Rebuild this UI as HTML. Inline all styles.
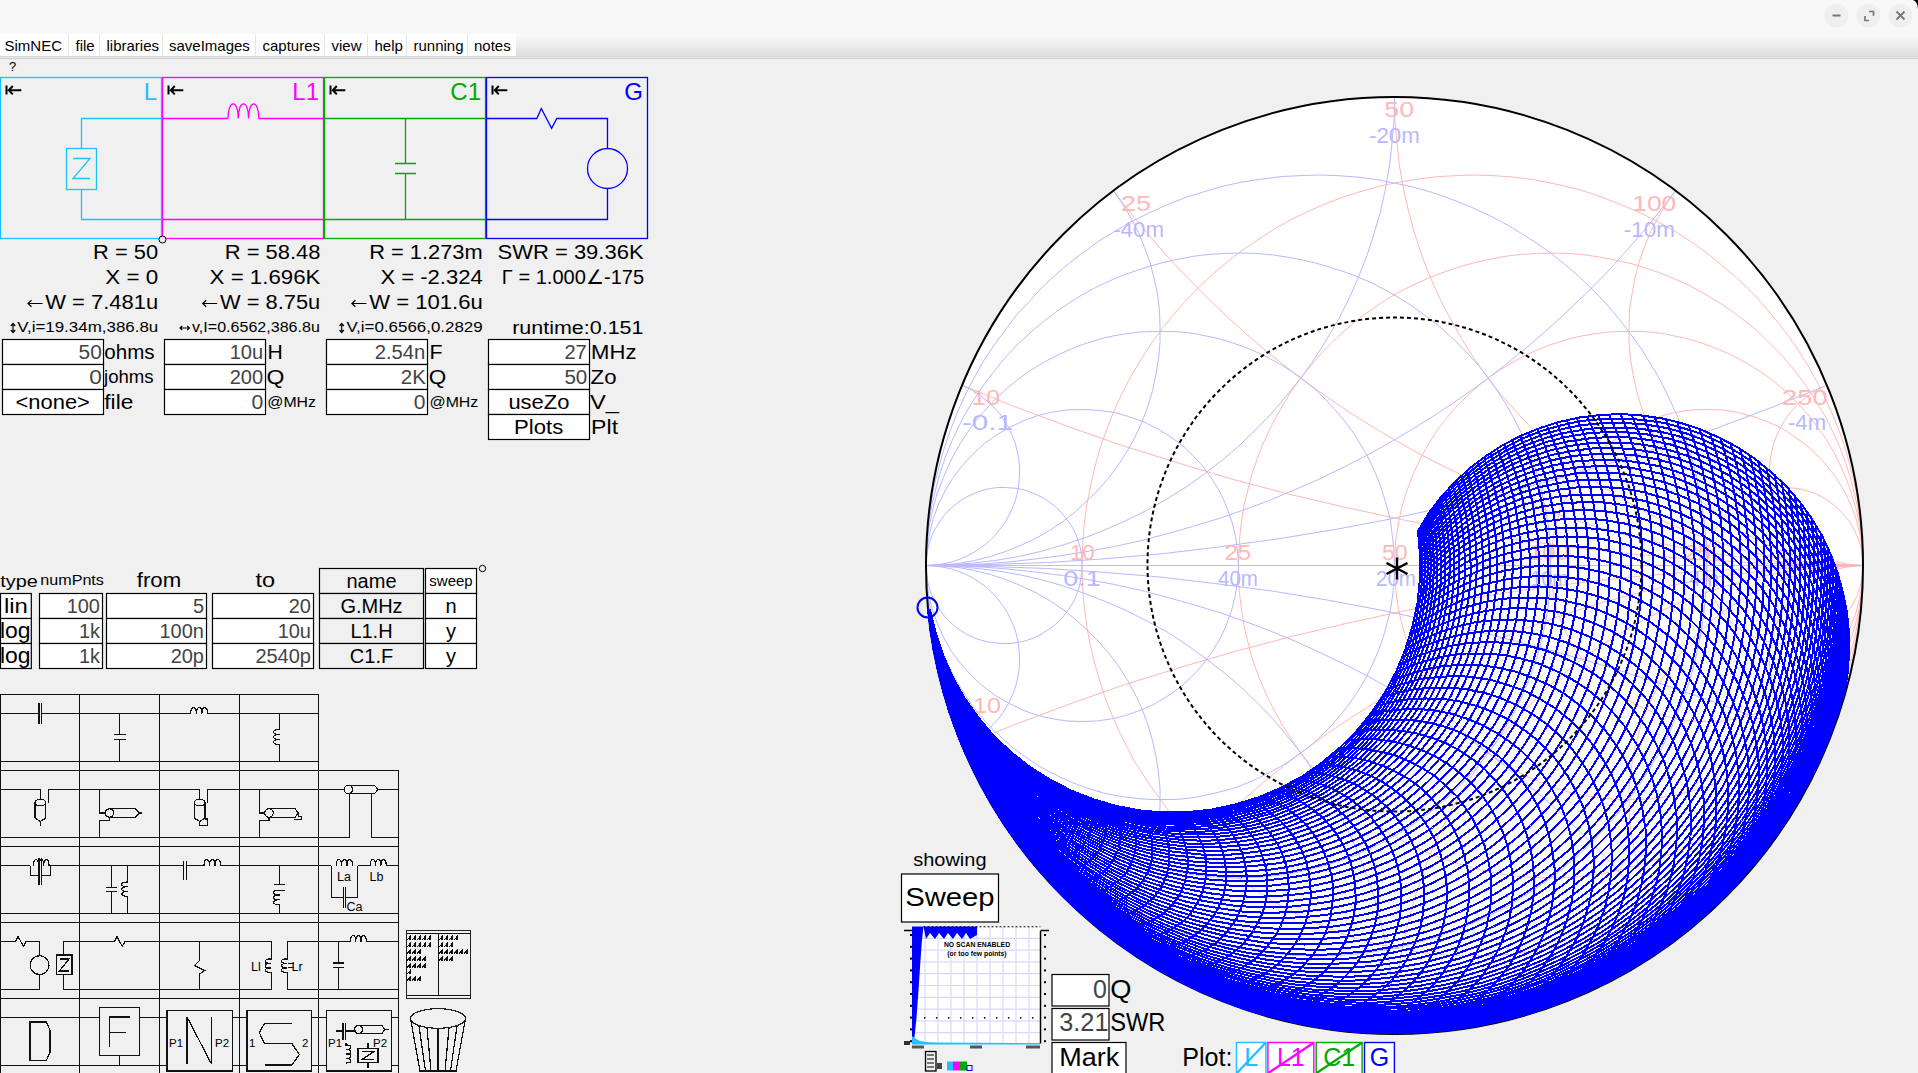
<!DOCTYPE html><html><head><meta charset="utf-8"><style>
html,body{margin:0;padding:0;background:#f0f0f0;width:1918px;height:1073px;overflow:hidden}
svg{position:absolute;left:0;top:0}
text{font-family:"Liberation Sans",sans-serif}
</style></head><body>
<svg width="1918" height="1073" viewBox="0 0 1918 1073">
<defs><linearGradient id="mg" x1="0" y1="0" x2="0" y2="1"><stop offset="0" stop-color="#fbfbfb"/><stop offset="1" stop-color="#dedede"/></linearGradient></defs>
<rect x="0" y="0" width="1918" height="34" fill="#f8f8f8" stroke="none" stroke-width="1"/>
<rect x="0" y="34" width="1918" height="22" fill="url(#mg)" stroke="none" stroke-width="1"/>
<rect x="0" y="56" width="1918" height="1" fill="#d8d8d8" stroke="none" stroke-width="1"/>
<rect x="0" y="57" width="1918" height="1" fill="#ececec" stroke="none" stroke-width="1"/>
<rect x="0" y="58" width="1918" height="1" fill="#cacaca" stroke="none" stroke-width="1"/>
<rect x="0" y="34" width="516" height="22" fill="#fefefe" stroke="none" stroke-width="1"/>
<line x1="68.5" y1="35" x2="68.5" y2="56" stroke="#e4e4e4" stroke-width="1"/>
<line x1="99.5" y1="35" x2="99.5" y2="56" stroke="#e4e4e4" stroke-width="1"/>
<line x1="162.5" y1="35" x2="162.5" y2="56" stroke="#e4e4e4" stroke-width="1"/>
<line x1="255.5" y1="35" x2="255.5" y2="56" stroke="#e4e4e4" stroke-width="1"/>
<line x1="324.5" y1="35" x2="324.5" y2="56" stroke="#e4e4e4" stroke-width="1"/>
<line x1="367.5" y1="35" x2="367.5" y2="56" stroke="#e4e4e4" stroke-width="1"/>
<line x1="406.5" y1="35" x2="406.5" y2="56" stroke="#e4e4e4" stroke-width="1"/>
<line x1="467.5" y1="35" x2="467.5" y2="56" stroke="#e4e4e4" stroke-width="1"/>
<text x="4.5" y="51" font-size="15" fill="#000">SimNEC</text>
<text x="75.5" y="51" font-size="15" fill="#000">file</text>
<text x="106.5" y="51" font-size="15" fill="#000">libraries</text>
<text x="169" y="51" font-size="15" fill="#000">saveImages</text>
<text x="262.5" y="51" font-size="15" fill="#000">captures</text>
<text x="331.5" y="51" font-size="15" fill="#000">view</text>
<text x="374.5" y="51" font-size="15" fill="#000">help</text>
<text x="413.5" y="51" font-size="15" fill="#000">running</text>
<text x="474" y="51" font-size="15" fill="#000">notes</text>
<circle cx="1836.5" cy="15.5" r="12" fill="#efefef"/>
<circle cx="1868.5" cy="15.5" r="12" fill="#efefef"/>
<circle cx="1900.5" cy="15.5" r="12" fill="#efefef"/>
<rect x="1832.5" y="14.5" width="8" height="2" fill="#777" stroke="none" stroke-width="1"/>
<path d="M1865 16v4.5h4M1869 11.5h4.5v4.2" fill="none" stroke="#777" stroke-width="1.7"/>
<path d="M1896.5 11.5l8 8M1904.5 11.5l-8 8" fill="none" stroke="#777" stroke-width="1.8"/>
<path d="M1913 0Q1918 2 1918 9.5V0Z" fill="#000"/>
<text x="9" y="71" font-size="13" fill="#000">?</text>
<text x="157" y="100" font-size="24" fill="#1ec0ff" text-anchor="end">L</text>
<text x="319" y="100" font-size="24" fill="#ff00ff" text-anchor="end">L1</text>
<text x="481" y="100" font-size="24" fill="#00aa00" text-anchor="end">C1</text>
<text x="643" y="100" font-size="24" fill="#0000ff" text-anchor="end">G</text>
<path d="M161 118.5H81.5V148.5M81.5 189.5V219.5H161" fill="none" stroke="#1ec0ff" stroke-width="1.3"/>
<rect x="66.5" y="148.5" width="30" height="41" fill="none" stroke="#1ec0ff" stroke-width="1.3"/>
<path d="M73 158.5h17l-17 20h17" fill="none" stroke="#1ec0ff" stroke-width="1.3"/>
<path d="M162 118.5H228M258.5 118.5H323M162 219.5H323" fill="none" stroke="#ff00ff" stroke-width="1.3"/>
<path d="M228 118.5C228 99 238.3 99 238.3 118.5C238.3 99 248.6 99 248.6 118.5C248.6 99 258.8 99 258.8 118.5" fill="none" stroke="#ff00ff" stroke-width="1.3"/>
<path d="M324 118.5H486M324 219.5H486M405.5 118.5V163.5M405.5 173.5V219.5M395 163.5h21M395 173.5h21" fill="none" stroke="#00aa00" stroke-width="1.3"/>
<path d="M486 118.5H536.8L541.3 108.4L551.6 128.4L556.8 118.5H607.5V148.5M607.5 188.5V219.5H486" fill="none" stroke="#0000ff" stroke-width="1.3"/>
<circle cx="607.5" cy="168.5" r="20" fill="none" stroke="#0000ff" stroke-width="1.3"/>
<rect x="0.5" y="77.5" width="161" height="161" fill="none" stroke="#1ec0ff" stroke-width="1.3"/>
<rect x="162.5" y="77.5" width="161" height="161" fill="none" stroke="#ff00ff" stroke-width="1.3"/>
<rect x="324.5" y="77.5" width="161" height="161" fill="none" stroke="#00aa00" stroke-width="1.3"/>
<rect x="486.5" y="77.5" width="161" height="161" fill="none" stroke="#0000ff" stroke-width="1.3"/>
<path d="M6.5 85.5V94.5M9 90.2H21.3 M12.8 86L8.8 90.2L12.8 94.4" fill="none" stroke="#000" stroke-width="2"/>
<path d="M168.5 85.5V94.5M171 90.2H183.3 M174.8 86L170.8 90.2L174.8 94.4" fill="none" stroke="#000" stroke-width="2"/>
<path d="M330.5 85.5V94.5M333 90.2H345.3 M336.8 86L332.8 90.2L336.8 94.4" fill="none" stroke="#000" stroke-width="2"/>
<path d="M492.5 85.5V94.5M495 90.2H507.3 M498.8 86L494.8 90.2L498.8 94.4" fill="none" stroke="#000" stroke-width="2"/>
<circle cx="162.5" cy="239.5" r="3.5" fill="#f0f0f0" stroke="#000" stroke-width="1"/>
<text x="93.1" y="258.6" font-size="20" fill="#000" textLength="65.1" lengthAdjust="spacingAndGlyphs">R = 50</text>
<text x="105.2" y="283.6" font-size="20" fill="#000" textLength="53" lengthAdjust="spacingAndGlyphs">X = 0</text>
<text x="45.3" y="308.6" font-size="20" fill="#000" textLength="112.9" lengthAdjust="spacingAndGlyphs">W = 7.481u</text>
<text x="17.2" y="332.3" font-size="14" fill="#000" textLength="141.1" lengthAdjust="spacingAndGlyphs">V,i=19.34m,386.8u</text>
<text x="224.8" y="258.6" font-size="20" fill="#000" textLength="95.7" lengthAdjust="spacingAndGlyphs">R = 58.48</text>
<text x="209.6" y="283.6" font-size="20" fill="#000" textLength="110.9" lengthAdjust="spacingAndGlyphs">X = 1.696K</text>
<text x="220" y="308.6" font-size="20" fill="#000" textLength="100.2" lengthAdjust="spacingAndGlyphs">W = 8.75u</text>
<text x="192" y="332.3" font-size="14" fill="#000" textLength="127.9" lengthAdjust="spacingAndGlyphs">v,I=0.6562,386.8u</text>
<text x="369.2" y="258.6" font-size="20" fill="#000" textLength="113.5" lengthAdjust="spacingAndGlyphs">R = 1.273m</text>
<text x="380.4" y="283.6" font-size="20" fill="#000" textLength="102.4" lengthAdjust="spacingAndGlyphs">X = -2.324</text>
<text x="369.2" y="308.6" font-size="20" fill="#000" textLength="113.5" lengthAdjust="spacingAndGlyphs">W = 101.6u</text>
<text x="346.4" y="332.3" font-size="14" fill="#000" textLength="136.3" lengthAdjust="spacingAndGlyphs">V,i=0.6566,0.2829</text>
<text x="497.5" y="258.6" font-size="20" fill="#000" textLength="146.1" lengthAdjust="spacingAndGlyphs">SWR = 39.36K</text>
<text x="501.8" y="283.6" font-size="20" fill="#000" textLength="142.3" lengthAdjust="spacingAndGlyphs">Γ = 1.000∠-175</text>
<text x="512.2" y="333.5" font-size="18" fill="#000" textLength="131.3" lengthAdjust="spacingAndGlyphs">runtime:0.151</text>
<path d="M28 303.5h14.5M31.5 300.3L28 303.5L31.5 306.7" fill="none" stroke="#000" stroke-width="1.2"/>
<path d="M202.7 303.5h14.5M206.2 300.3L202.7 303.5L206.2 306.7" fill="none" stroke="#000" stroke-width="1.2"/>
<path d="M351.9 303.5h14.5M355.4 300.3L351.9 303.5L355.4 306.7" fill="none" stroke="#000" stroke-width="1.2"/>
<path d="M13 323.5V332.5M10.8 326L13 323.5L15.2 326M10.8 330L13 332.5L15.2 330" fill="none" stroke="#000" stroke-width="1.2"/>
<path d="M341.7 323.5V332.5M339.5 326L341.7 323.5L343.9 326M339.5 330L341.7 332.5L343.9 330" fill="none" stroke="#000" stroke-width="1.2"/>
<path d="M180 328h9.5M182.3 326L180 328L182.3 330M187.2 326L189.5 328L187.2 330" fill="none" stroke="#000" stroke-width="1.1"/>
<rect x="2.5" y="339.5" width="101" height="25" fill="#fff" stroke="#000" stroke-width="1.2"/>
<rect x="2.5" y="364.5" width="101" height="25" fill="#fff" stroke="#000" stroke-width="1.2"/>
<rect x="2.5" y="389.5" width="101" height="25" fill="#fff" stroke="#000" stroke-width="1.2"/>
<rect x="164.5" y="339.5" width="101" height="25" fill="#fff" stroke="#000" stroke-width="1.2"/>
<rect x="164.5" y="364.5" width="101" height="25" fill="#fff" stroke="#000" stroke-width="1.2"/>
<rect x="164.5" y="389.5" width="101" height="25" fill="#fff" stroke="#000" stroke-width="1.2"/>
<rect x="326.5" y="339.5" width="101" height="25" fill="#fff" stroke="#000" stroke-width="1.2"/>
<rect x="326.5" y="364.5" width="101" height="25" fill="#fff" stroke="#000" stroke-width="1.2"/>
<rect x="326.5" y="389.5" width="101" height="25" fill="#fff" stroke="#000" stroke-width="1.2"/>
<rect x="488.5" y="339.5" width="101" height="25" fill="#fff" stroke="#000" stroke-width="1.2"/>
<rect x="488.5" y="364.5" width="101" height="25" fill="#fff" stroke="#000" stroke-width="1.2"/>
<rect x="488.5" y="389.5" width="101" height="25" fill="#fff" stroke="#000" stroke-width="1.2"/>
<rect x="488.5" y="414.5" width="101" height="25" fill="#fff" stroke="#000" stroke-width="1.2"/>
<text x="78.6" y="358.9" font-size="20" fill="#444" textLength="23.2" lengthAdjust="spacingAndGlyphs">50</text>
<text x="104.3" y="358.9" font-size="20" fill="#000" textLength="50.3" lengthAdjust="spacingAndGlyphs">ohms</text>
<text x="89.2" y="383.5" font-size="20" fill="#444" textLength="12.6" lengthAdjust="spacingAndGlyphs">0</text>
<text x="104" y="382.9" font-size="17.5" fill="#000" textLength="49.6" lengthAdjust="spacingAndGlyphs">johms</text>
<text x="15.5" y="408.6" font-size="21" fill="#000" textLength="74.4" lengthAdjust="spacingAndGlyphs">&lt;none&gt;</text>
<text x="104.3" y="408.6" font-size="20" fill="#000" textLength="29" lengthAdjust="spacingAndGlyphs">file</text>
<text x="229.7" y="358.9" font-size="20" fill="#444" textLength="33.5" lengthAdjust="spacingAndGlyphs">10u</text>
<text x="267.4" y="358.9" font-size="20" fill="#000" textLength="15.3" lengthAdjust="spacingAndGlyphs">H</text>
<text x="229.7" y="383.8" font-size="20" fill="#444" textLength="33.5" lengthAdjust="spacingAndGlyphs">200</text>
<text x="266.5" y="383.8" font-size="20" fill="#000" textLength="17.9" lengthAdjust="spacingAndGlyphs">Q</text>
<text x="251.4" y="408.6" font-size="20" fill="#444" textLength="11.8" lengthAdjust="spacingAndGlyphs">0</text>
<text x="267.3" y="406.8" font-size="15" fill="#000" textLength="48.7" lengthAdjust="spacingAndGlyphs">@MHz</text>
<text x="374.7" y="358.9" font-size="20" fill="#444" textLength="50.7" lengthAdjust="spacingAndGlyphs">2.54n</text>
<text x="429.6" y="358.9" font-size="20" fill="#000" textLength="13.1" lengthAdjust="spacingAndGlyphs">F</text>
<text x="400.8" y="383.8" font-size="20" fill="#444" textLength="25" lengthAdjust="spacingAndGlyphs">2K</text>
<text x="428.7" y="383.8" font-size="20" fill="#000" textLength="17.5" lengthAdjust="spacingAndGlyphs">Q</text>
<text x="413.7" y="408.6" font-size="20" fill="#444" textLength="11.7" lengthAdjust="spacingAndGlyphs">0</text>
<text x="429.5" y="406.8" font-size="15" fill="#000" textLength="48.8" lengthAdjust="spacingAndGlyphs">@MHz</text>
<text x="564.4" y="359.1" font-size="20" fill="#444" textLength="22.4" lengthAdjust="spacingAndGlyphs">27</text>
<text x="591.1" y="359.1" font-size="20" fill="#000" textLength="45.4" lengthAdjust="spacingAndGlyphs">MHz</text>
<text x="564.4" y="383.7" font-size="20" fill="#444" textLength="22.9" lengthAdjust="spacingAndGlyphs">50</text>
<text x="590.6" y="383.7" font-size="20" fill="#000" textLength="25.9" lengthAdjust="spacingAndGlyphs">Zo</text>
<text x="508.4" y="408.6" font-size="21" fill="#000" textLength="61" lengthAdjust="spacingAndGlyphs">useZo</text>
<text x="590" y="408.6" font-size="20" fill="#000" textLength="29.1" lengthAdjust="spacingAndGlyphs">V_</text>
<text x="514.1" y="434" font-size="21" fill="#000" textLength="49.1" lengthAdjust="spacingAndGlyphs">Plots</text>
<text x="591.1" y="434" font-size="20" fill="#000" textLength="27" lengthAdjust="spacingAndGlyphs">Plt</text>
<text x="0.3" y="586.5" font-size="17" fill="#000" textLength="37.5" lengthAdjust="spacingAndGlyphs">type</text>
<text x="40.3" y="584.5" font-size="15" fill="#000" textLength="63.6" lengthAdjust="spacingAndGlyphs">numPnts</text>
<text x="136.8" y="586.5" font-size="20" fill="#000" textLength="44.4" lengthAdjust="spacingAndGlyphs">from</text>
<text x="255.6" y="586.5" font-size="20" fill="#000" textLength="19.6" lengthAdjust="spacingAndGlyphs">to</text>
<rect x="319.5" y="568.5" width="104" height="25" fill="#f0f0f0" stroke="#000" stroke-width="1.2"/>
<rect x="425.5" y="568.5" width="51" height="25" fill="#fff" stroke="#000" stroke-width="1.2"/>
<text x="371.5" y="587.5" font-size="20" fill="#000" text-anchor="middle">name</text>
<text x="451" y="586" font-size="15" fill="#000" text-anchor="middle">sweep</text>
<circle cx="482.5" cy="568.5" r="3.2" fill="none" stroke="#000" stroke-width="1"/>
<rect x="0.5" y="593.5" width="30.8" height="25" fill="#fff" stroke="#000" stroke-width="1.2"/>
<rect x="39.5" y="593.5" width="63" height="25" fill="#fff" stroke="#000" stroke-width="1.2"/>
<rect x="106.5" y="593.5" width="100" height="25" fill="#fff" stroke="#000" stroke-width="1.2"/>
<rect x="212.5" y="593.5" width="101" height="25" fill="#fff" stroke="#000" stroke-width="1.2"/>
<rect x="319.5" y="593.5" width="104" height="25" fill="#f0f0f0" stroke="#000" stroke-width="1.2"/>
<rect x="425.5" y="593.5" width="51" height="25" fill="#fff" stroke="#000" stroke-width="1.2"/>
<rect x="0.5" y="618.5" width="30.8" height="25" fill="#fff" stroke="#000" stroke-width="1.2"/>
<rect x="39.5" y="618.5" width="63" height="25" fill="#fff" stroke="#000" stroke-width="1.2"/>
<rect x="106.5" y="618.5" width="100" height="25" fill="#fff" stroke="#000" stroke-width="1.2"/>
<rect x="212.5" y="618.5" width="101" height="25" fill="#fff" stroke="#000" stroke-width="1.2"/>
<rect x="319.5" y="618.5" width="104" height="25" fill="#f0f0f0" stroke="#000" stroke-width="1.2"/>
<rect x="425.5" y="618.5" width="51" height="25" fill="#fff" stroke="#000" stroke-width="1.2"/>
<rect x="0.5" y="643.5" width="30.8" height="25" fill="#fff" stroke="#000" stroke-width="1.2"/>
<rect x="39.5" y="643.5" width="63" height="25" fill="#fff" stroke="#000" stroke-width="1.2"/>
<rect x="106.5" y="643.5" width="100" height="25" fill="#fff" stroke="#000" stroke-width="1.2"/>
<rect x="212.5" y="643.5" width="101" height="25" fill="#fff" stroke="#000" stroke-width="1.2"/>
<rect x="319.5" y="643.5" width="104" height="25" fill="#f0f0f0" stroke="#000" stroke-width="1.2"/>
<rect x="425.5" y="643.5" width="51" height="25" fill="#fff" stroke="#000" stroke-width="1.2"/>
<text x="3.9" y="613" font-size="21" fill="#000" textLength="24" lengthAdjust="spacingAndGlyphs">lin</text>
<text x="100" y="613" font-size="20" fill="#444" text-anchor="end">100</text>
<text x="204" y="613" font-size="20" fill="#444" text-anchor="end">5</text>
<text x="311" y="613" font-size="20" fill="#444" text-anchor="end">20</text>
<text x="371.5" y="613" font-size="20" fill="#000" text-anchor="middle">G.MHz</text>
<text x="451" y="613" font-size="20" fill="#000" text-anchor="middle">n</text>
<text x="-0" y="638" font-size="22" fill="#000" textLength="30.6" lengthAdjust="spacingAndGlyphs">log</text>
<text x="100" y="638" font-size="20" fill="#444" text-anchor="end">1k</text>
<text x="204" y="638" font-size="20" fill="#444" text-anchor="end">100n</text>
<text x="311" y="638" font-size="20" fill="#444" text-anchor="end">10u</text>
<text x="371.5" y="638" font-size="20" fill="#000" text-anchor="middle">L1.H</text>
<text x="451" y="638" font-size="20" fill="#000" text-anchor="middle">y</text>
<text x="-0" y="663" font-size="22" fill="#000" textLength="30.6" lengthAdjust="spacingAndGlyphs">log</text>
<text x="100" y="663" font-size="20" fill="#444" text-anchor="end">1k</text>
<text x="204" y="663" font-size="20" fill="#444" text-anchor="end">20p</text>
<text x="311" y="663" font-size="20" fill="#444" text-anchor="end">2540p</text>
<text x="371.5" y="663" font-size="20" fill="#000" text-anchor="middle">C1.F</text>
<text x="451" y="663" font-size="20" fill="#000" text-anchor="middle">y</text>
<g shape-rendering="crispEdges"><path d="M0 694.5H318.5" fill="none" stroke="#111" stroke-width="1.2"/>
<path d="M0 761.5H318.5" fill="none" stroke="#111" stroke-width="1.2"/>
<path d="M0 770.5H398.5" fill="none" stroke="#111" stroke-width="1.2"/>
<path d="M0 837.5H349.3M371.6 837.5H398.5" fill="none" stroke="#111" stroke-width="1.2"/>
<path d="M0 846.5H398.5" fill="none" stroke="#111" stroke-width="1.2"/>
<path d="M0 913.5H398.5" fill="none" stroke="#111" stroke-width="1.2"/>
<path d="M0 922.5H398.5" fill="none" stroke="#111" stroke-width="1.2"/>
<path d="M0 989.5H39.6M63.6 989.5H271.1M287.4 989.5H398.5" fill="none" stroke="#111" stroke-width="1.2"/>
<path d="M0 998.5H398.5" fill="none" stroke="#111" stroke-width="1.2"/>
<path d="M0 1065.5H167M232.5 1065.5H247M311.3 1065.5H326.3M391.3 1065.5H398.5" fill="none" stroke="#111" stroke-width="1.2"/>
<path d="M0.5 694.5V1073" fill="none" stroke="#111" stroke-width="1.2"/>
<path d="M79.5 694.5V1073" fill="none" stroke="#111" stroke-width="1.2"/>
<path d="M159.5 694.5V1073" fill="none" stroke="#111" stroke-width="1.2"/>
<path d="M239.5 694.5V1073" fill="none" stroke="#111" stroke-width="1.2"/>
<path d="M318.5 694.5V1073" fill="none" stroke="#111" stroke-width="1.2"/>
<path d="M398.5 770.5V1073" fill="none" stroke="#111" stroke-width="1.2"/>
<path d="M0 713.5H39M41.5 713.5H190.8M207.5 713.5H318.5" fill="none" stroke="#111" stroke-width="1.2"/>
<path d="M39 703V724M41.5 703V724" fill="none" stroke="#111" stroke-width="1.2"/>
<path d="M119.5 713.5V734.5M113.5 734.5h12M113.5 739.5h12M119.5 739.5V761.5" fill="none" stroke="#111" stroke-width="1.2"/>
<path d="M190.8 713.5C190.8 705.7 196.4 705.7 196.4 713.5C196.4 705.7 201.9 705.7 201.9 713.5C201.9 705.7 207.5 705.7 207.5 713.5" fill="none" stroke="#111" stroke-width="1.2"/>
<path d="M279.5 713.5V729.5C271.7 729.5 271.7 734.5 279.5 734.5C271.7 734.5 271.7 739.5 279.5 739.5C271.7 739.5 271.7 744.5 279.5 744.5V761.5" fill="none" stroke="#111" stroke-width="1.2"/>
<path d="M0 789.5H40.3V799M48.4 802.6V789.5H159.5M99.5 789.5V813H105.5M99.5 837.5V820.3H109.5V817.5M239.5 789.5H318.5" fill="none" stroke="#111" stroke-width="1.2"/>
<path d="M35 802.6V818l5.3 3.5 5.6-3.5V802.6M40.3 821.5V826" fill="none" stroke="#111" stroke-width="1.2"/>
<ellipse cx="40.4" cy="802.6" rx="5.4" ry="3.3" fill="none" stroke="#111" stroke-width="1.2"/>
<circle cx="109.5" cy="813" r="4.2" fill="none" stroke="#111" stroke-width="1.2"/>
<path d="M109.5 808.8H135.5l3.5 4.2-3.5 4.2H109.5M139 813h3" fill="none" stroke="#111" stroke-width="1.2"/>
<path d="M159.5 789.5H199.5V799M207.6 802.6V789.5H239.5" fill="none" stroke="#111" stroke-width="1.2"/>
<ellipse cx="199.6" cy="802.6" rx="5.4" ry="3.3" fill="none" stroke="#111" stroke-width="1.2"/>
<path d="M194.2 802.6V818l5.4 3.5 5.4-3.5V802.6M199.6 821.5V825.5h7.7v-6.5h-2.3" fill="none" stroke="#111" stroke-width="1.2"/>
<path d="M259.3 789.5V813H264.8M259.3 837.5V820.3H269V817.5" fill="none" stroke="#111" stroke-width="1.2"/>
<circle cx="269" cy="813" r="4.2" fill="none" stroke="#111" stroke-width="1.2"/>
<path d="M269 808.8H295l3.5 4.2-3.5 4.2H269M298.5 813V816.5h2.8V819.5h-7.5" fill="none" stroke="#111" stroke-width="1.2"/>
<path d="M318.5 789.5H344M379 789.5H398.5M318.5 837.5H349.3V793.5M371.6 793.5V837.5H398.5" fill="none" stroke="#111" stroke-width="1.2"/>
<circle cx="348.3" cy="789.5" r="4.2" fill="none" stroke="#111" stroke-width="1.2"/>
<path d="M348.3 785.3H374.5l3.5 4.2-3.5 4.2H348.3" fill="none" stroke="#111" stroke-width="1.2"/>
<path d="M0 865.5H30.2M50.4 865.5H183.5M186.2 865.5H204M220.6 865.5H331.2M357.7 865.5H370.2M386.2 865.5H398.5" fill="none" stroke="#111" stroke-width="1.2"/>
<path d="M30.2 865.5V875.5H39M41.5 875.5H50.4V865.5M39 858V885M41.5 858V885" fill="none" stroke="#111" stroke-width="1.2"/>
<path d="M33.4 865.5C33.4 857.7 38.6 857.7 38.6 865.5C38.6 857.7 43.8 857.7 43.8 865.5C43.8 857.7 49 857.7 49 865.5" fill="none" stroke="#111" stroke-width="1.2"/>
<path d="M111.6 865.5V887.5M111.6 891.7V913.5M106 887.5H117M106 891.7H117M127.6 865.5V882C119.8 882 119.8 886.8 127.6 886.8C119.8 886.8 119.8 891.5 127.6 891.5C119.8 891.5 119.8 896.3 127.6 896.3V913.5" fill="none" stroke="#111" stroke-width="1.2"/>
<path d="M183.5 861V880M186.2 861V880" fill="none" stroke="#111" stroke-width="1.2"/>
<path d="M204 865.5C204 857.7 209.5 857.7 209.5 865.5C209.5 857.7 215.1 857.7 215.1 865.5C215.1 857.7 220.6 857.7 220.6 865.5" fill="none" stroke="#111" stroke-width="1.2"/>
<path d="M279.5 865.5V884.6M273.8 884.6H285.1M273.8 890.2H285.1M279.5 890.2C271.7 890.2 271.7 895 279.5 895C271.7 895 271.7 899.8 279.5 899.8C271.7 899.8 271.7 904.6 279.5 904.6V913.5" fill="none" stroke="#111" stroke-width="1.2"/>
<path d="M336.2 865.5C336.2 857.7 341.6 857.7 341.6 865.5C341.6 857.7 347.1 857.7 347.1 865.5C347.1 857.7 352.5 857.7 352.5 865.5M331.2 865.5V897.4H343.1M345.2 897.4H357.7V865.5M343.1 887V908M345.2 887V908" fill="none" stroke="#111" stroke-width="1.2"/>
<path d="M370.2 865.5C370.2 857.7 375.5 857.7 375.5 865.5C375.5 857.7 380.9 857.7 380.9 865.5C380.9 857.7 386.2 857.7 386.2 865.5" fill="none" stroke="#111" stroke-width="1.2"/>
<text x="337" y="880.5" font-size="12.5" fill="#000">La</text>
<text x="369.5" y="880.5" font-size="12.5" fill="#000">Lb</text>
<text x="346.5" y="911" font-size="12.5" fill="#000">Ca</text>
<path d="M0 941.5H15.6L18.1 936.6L23.4 946.4L26.1 941.5H39.6V955.7M39.6 974.5V989.5H0" fill="none" stroke="#111" stroke-width="1.2"/>
<circle cx="39.6" cy="965.1" r="9.4" fill="none" stroke="#111" stroke-width="1.2"/>
<path d="M79.5 941.5H63.6V955.1M63.6 974.5V989.5H79.5" fill="none" stroke="#111" stroke-width="1.2"/>
<rect x="56.3" y="955.1" width="15.7" height="19.4" fill="none" stroke="#111" stroke-width="1.2"/>
<path d="M59.5 959h9.5l-9.5 12h9.5" fill="none" stroke="#111" stroke-width="1.2"/>
<path d="M79.5 941.5H114.3L117 936.6L122.3 946.4L125 941.5H239.5M79.5 989.5H271.1" fill="none" stroke="#111" stroke-width="1.2"/>
<path d="M199.6 941.5V960.5L194.5 965.5L204.5 970.5L199.6 974V989.5" fill="none" stroke="#111" stroke-width="1.2"/>
<path d="M239.5 941.5H271.1V958.9C263.3 958.9 263.3 963.4 271.1 963.4C263.3 963.4 263.3 967.9 271.1 967.9C263.3 967.9 263.3 972.4 271.1 972.4V989.5M287.4 941.5V958.9C279.6 958.9 279.6 963.4 287.4 963.4C279.6 963.4 279.6 967.9 287.4 967.9C279.6 967.9 279.6 972.4 287.4 972.4V989.5H318.5M287.4 941.5H318.5" fill="none" stroke="#111" stroke-width="1.2"/>
<path d="M265 963.5h6M265 967.5h6M288 963.5h6M288 967.5h6" fill="none" stroke="#111" stroke-width="1.2"/>
<text x="251" y="970.5" font-size="12.5" fill="#000">Ll</text>
<text x="291.5" y="970.5" font-size="12.5" fill="#000">Lr</text>
<path d="M318.5 941.5H350.4M366.4 941.5H398.5M338.3 941.5V963M332.6 963H344.1M332.6 967.2H344.1M338.3 967.2V989.5M318.5 989.5H398.5" fill="none" stroke="#111" stroke-width="1.2"/>
<path d="M350.4 941.5C350.4 933.7 355.7 933.7 355.7 941.5C355.7 933.7 361.1 933.7 361.1 941.5C361.1 933.7 366.4 933.7 366.4 941.5" fill="none" stroke="#111" stroke-width="1.2"/>
<path d="M0 1017.5H79.5" fill="none" stroke="#111" stroke-width="1.2"/>
<path d="M30 1022H46.3L50 1030V1052.5L46.3 1060.5H30Z" fill="none" stroke="#111" stroke-width="1.2"/>
<path d="M79.5 1017.5H99.3M139.5 1017.5H167M232.5 1017.5H247M311.3 1017.5H326.3M391.3 1017.5H398.5" fill="none" stroke="#111" stroke-width="1.2"/>
<rect x="99.3" y="1007.5" width="40.2" height="48" fill="none" stroke="#111" stroke-width="1.2"/>
<path d="M129.5 1017H109.3V1047M109.3 1032.5H126.3M119.3 1055.5V1065" fill="none" stroke="#111" stroke-width="1.2"/>
<rect x="167" y="1010.5" width="65.5" height="60.5" fill="none" stroke="#111" stroke-width="1.2"/>
<path d="M187 1064V1017L211.5 1064V1017" fill="none" stroke="#111" stroke-width="1.2"/>
<text x="169" y="1047" font-size="11.5" fill="#000">P1</text>
<text x="215" y="1047" font-size="11.5" fill="#000">P2</text>
<rect x="247" y="1010.5" width="64.3" height="60.5" fill="none" stroke="#111" stroke-width="1.2"/>
<path d="M292 1023.3H264.5L259.3 1032.5L264.5 1043.8H292L299.3 1054.5L292 1065H264.5" fill="none" stroke="#111" stroke-width="1.2"/>
<text x="249" y="1047" font-size="11.5" fill="#000">1</text>
<text x="302" y="1047" font-size="11.5" fill="#000">2</text>
<rect x="326.3" y="1010.5" width="65" height="60.5" fill="none" stroke="#111" stroke-width="1.2"/>
<path d="M336 1031H343M343 1023V1040M345.5 1023V1040M345.5 1031H356M385 1029.5H388.5" fill="none" stroke="#111" stroke-width="1.2"/>
<circle cx="358.5" cy="1029.5" r="4" fill="none" stroke="#111" stroke-width="1.2"/>
<path d="M358.5 1025.5H382l3 4-3 4H358.5" fill="none" stroke="#111" stroke-width="1.2"/>
<path d="M346 1043V1045C352.5 1045 352.5 1049.5 346 1049.5C352.5 1049.5 352.5 1054 346 1054C352.5 1054 352.5 1058.5 346 1058.5C352.5 1058.5 352.5 1063 346 1063" fill="none" stroke="#111" stroke-width="1.2"/>
<rect x="358" y="1048.5" width="20" height="14" fill="none" stroke="#111" stroke-width="1.2"/>
<path d="M362 1051.5h12l-12 8h12M368 1043V1048.5M368 1062.5V1068" fill="none" stroke="#111" stroke-width="1.2"/>
<text x="328" y="1047" font-size="11.5" fill="#000">P1</text>
<text x="373" y="1047" font-size="11.5" fill="#000">P2</text>
<rect x="406.5" y="930.5" width="64" height="68" fill="none" stroke="#222" stroke-width="1.3"/>
<path d="M406.5 933.8H470.5M406.5 995.3H470.5M438.4 933.8V995.3" fill="none" stroke="#111" stroke-width="1.3"/>
<path d="M407 940L410 936.7V940M412 940L415 936.7V940M417 940L420 936.7V940M422 940L425 936.7V940M427 940L430 936.7V940" fill="none" stroke="#111" stroke-width="1.1"/>
<path d="M407 947L410 943.7V947M412 947L415 943.7V947M417 947L420 943.7V947M422 947L425 943.7V947M427 947L430 943.7V947" fill="none" stroke="#111" stroke-width="1.1"/>
<path d="M407 953.5L410 950.2V953.5M412 953.5L415 950.2V953.5M417 953.5L420 950.2V953.5" fill="none" stroke="#111" stroke-width="1.1"/>
<path d="M407 960.5L410 957.2V960.5M412 960.5L415 957.2V960.5M417 960.5L420 957.2V960.5M422 960.5L425 957.2V960.5" fill="none" stroke="#111" stroke-width="1.1"/>
<path d="M407 967.5L410 964.2V967.5M412 967.5L415 964.2V967.5M417 967.5L420 964.2V967.5M422 967.5L425 964.2V967.5" fill="none" stroke="#111" stroke-width="1.1"/>
<path d="M407 974.1L410 970.8V974.1" fill="none" stroke="#111" stroke-width="1.1"/>
<path d="M407 980.5L410 977.2V980.5M412 980.5L415 977.2V980.5M417 980.5L420 977.2V980.5" fill="none" stroke="#111" stroke-width="1.1"/>
<path d="M439 940L442 936.7V940M444 940L447 936.7V940M449 940L452 936.7V940M454 940L457 936.7V940" fill="none" stroke="#111" stroke-width="1.1"/>
<path d="M439 947L442 943.7V947M444 947L447 943.7V947M449 947L452 943.7V947" fill="none" stroke="#111" stroke-width="1.1"/>
<path d="M439 953.5L442 950.2V953.5M444 953.5L447 950.2V953.5M449 953.5L452 950.2V953.5M454 953.5L457 950.2V953.5M459 953.5L462 950.2V953.5M464 953.5L467 950.2V953.5" fill="none" stroke="#111" stroke-width="1.1"/>
<path d="M439 960.5L442 957.2V960.5M444 960.5L447 957.2V960.5M449 960.5L452 957.2V960.5" fill="none" stroke="#111" stroke-width="1.1"/>
<ellipse cx="438" cy="1018.5" rx="27.5" ry="9.8" fill="none" stroke="#222" stroke-width="1.2"/>
<path d="M410.5 1018.5L420 1071H456L465.5 1018.5M419 1026L425.5 1071M427 1028L431 1071M438 1028.5V1071M449 1028L445 1071M457 1026L450.5 1071" fill="none" stroke="#111" stroke-width="1.2"/></g>
<circle cx="1394.5" cy="565.5" r="468.5" fill="#fff"/>
<path d="M1863 565.5l-0.5-20.5l-1-16.5l-2.5-20l-3.5-20.5l-5-20l-4-15.5l-6.5-19.5l-6-15l-8.5-19l-7-14.5l-10-18l-11-17.5l-9.5-13.5l-12.5-16l-13-15.5l-14-15l-15-14l-12.5-10.5l-13-10.5l-16.5-12l-17-11l-14.5-8l-18-9.5l-19-8l-19-7.5l-15.5-5.5l-15.5-4.5l-20-4.5l-20.5-4l-20-2.5l-20.5-1.5l-16.5-0.5l-16 0.5l-20.5 1l-20.5 2.5l-16 2.5l-20 4l-20 5.5l-19.5 6l-15.5 6l-18.5 8l-15 7l-18 10l-17 11l-17 11.5l-13 10l-15.5 13l-15 14l-14.5 15l-10.5 12l-10.5 13l-12 16.5l-11 17l-10.5 18l-7.5 14.5l-8.5 18.5l-6 15.5l-7 19l-5.5 20l-4.5 19.5l-4 20.5l-2.5 20l-1.5 20.5l-0.5 16.5l0.5 20.5l1.5 20.5l2.5 20l3 16.5l3.5 16l5.5 19.5l6 19.5l6 15.5l8 18.5l7.5 15l9.5 18l11 17l9.5 13.5l12 16.5l13.5 15.5l14 15l11.5 11.5l15.5 13.5l16 12.5l17 12l17 11l18 10l14.5 7l19 8.5l15 6l19.5 6.5l20 5.5l16 3.5l20 3.5l16 2l20.5 2l20.5 0.5l16.5-0.5l20.5-1l20-2.5l20.5-3.5l16-3.5l19.5-5.5l15.5-5l19.5-7l18.5-8.5l18.5-9l18-10l13.5-9l17-11.5l16-13l12.5-10.5l15-14l14-15l13-15.5l10.5-13l11.5-16.5l11-17.5l10-18l9-18l6.5-15.5l6-15l6.5-19.5l5-19.5l4.5-20l3-16.5l2.5-20l1-16.5l0.5-20.5M1863 565.5l-0.5-13l-1-16.5l-1.5-13l-2.5-16l-3-13l-4-16l-5-15.5l-5.5-15l-7-15l-7-15l-8.5-14l-7-11l-7.5-11l-10-13l-10.5-12.5l-11.5-11.5l-11.5-11.5l-10-8.5l-13-10l-13.5-9.5l-14-8.5l-11-6.5l-15-7.5l-12-5l-12-5l-15.5-5l-12.5-4l-16-3.5l-13-2.5l-16-2.5l-16.5-1.5l-16.5-0.5l-16.5 0.5l-16 1l-13 1.5l-16.5 3l-16 3.5l-12.5 3.5l-12.5 4l-15.5 5.5l-15 6.5l-14.5 7l-14.5 8l-11 7l-10.5 7.5l-13.5 10l-12.5 10.5l-11.5 11l-9.5 9.5l-10.5 12.5l-10.5 12.5l-9.5 13.5l-8.5 14l-8 14l-6 12l-7 15l-5.5 15l-4.5 12.5l-4 16l-4 16l-2 12.5l-2 16.5l-1 13l-0.5 16.5l0 13l1 16.5l2 16l2.5 16l3 13l4 16l4 12.5l6 15l6.5 15l7.5 15l8 14l7 11l9 13.5l8 10.5l10.5 12.5l11.5 12l12 11.5l12 10.5l10.5 8l13.5 9.5l13.5 9l14.5 8l11.5 5.5l15 7l12.5 4.5l15.5 5l15.5 4.5l13 3l16 3l16.5 2l16 1l13.5 0.5l16-0.5l13.5-1l16-2l16-2.5l16-4l16-4.5l12.5-4l15-6l15-6.5l12-6l14-8l11-7l13.5-9.5l13-10l12.5-11l9-9l11.5-11.5l10.5-12.5l10-13l7.5-11l7-11l8.5-14l7-15l7-15l5.5-15l5-15.5l3.5-13l3.5-16l2.5-16l1.5-13l1-16.5l0.5-13M1863 565.5l-0.5-12.5l-1-12l-1.5-12l-1.5-10l-3-12l-3.5-11.5l-3-9.5l-4.5-11.5l-5-11l-5.5-11l-5-8.5l-6.5-10.5l-6-8l-7.5-9.5l-6.5-7.5l-8.5-9l-8.5-8.5l-7.5-6l-10-8l-8-5.5l-10-6.5l-11-6l-8.5-4.5l-11.5-5l-9-3.5l-11.5-4l-12-3.5l-9.5-2l-12-2.5l-10-1.5l-12-1l-12.5 0l-9.5 0l-12.5 0.5l-12 1.5l-12.5 2l-12 2.5l-9.5 3l-11.5 3.5l-11.5 4.5l-9 4l-11 5.5l-10.5 6l-8.5 5l-10 7l-10 7.5l-9 8l-7.5 7l-8.5 8.5l-8 9.5l-7.5 9.5l-5.5 8l-6.5 10.5l-6 10.5l-4.5 9l-5 11l-3.5 9.5l-4 11.5l-3.5 12l-2.5 12l-2 12l-1.5 9.5l-0.5 12.5l-0.5 10l0 9.5l1 12.5l1 9.5l2 12.5l2 9.5l3 12l3.5 11.5l4.5 11.5l4 9l5 11l6 11l6.5 10.5l7 10l6 7.5l8 9.5l8.5 9l7 7l9.5 8l9.5 7.5l10 7l10.5 6.5l10.5 6l11 5.5l9 4l11.5 4.5l9.5 3l11.5 3.5l12 2.5l10 1.5l12 1.5l12.5 1l9.5 0l12.5 0l9.5-0.5l12.5-1.5l9.5-2l12-2.5l12-3l9.5-3l11.5-4.5l11-5l11-5.5l11-6l8-5l8-6l10-7l9.5-8l8.5-8.5l8.5-9l8-9.5l7.5-9.5l5.5-8l5.5-8.5l6-10.5l4.5-9l5-11l4.5-11.5l3-9.5l3.5-11.5l3-12l1.5-10l1.5-12l1-12l0.5-12.5M1863 565.5l-0.5-14.5l-2.5-16.5l-4-16l-5-13.5l-6.5-13.5l-7.5-12.5l-9-12l-11-12l-11-10l-13-9.5l-12.5-8l-13.5-6l-14-5l-15.5-4l-14.5-2.5l-15-0.5l-16.5 0.5l-14.5 2l-14 3.5l-14 5l-13.5 6l-14 8.5l-13.5 9.5l-11 10l-10 10.5l-9 12l-8.5 14l-6.5 13l-5.5 15.5l-3.5 14.5l-2.5 16l-1 14.5l1 16.5l2 14.5l3.5 14.5l5.5 15.5l6.5 13l7.5 13l9.5 13l10 11l12 11l12 9l14 8l13.5 6.5l13.5 5l14.5 3.5l14.5 2.5l16.5 0.5l16.5-0.5l14.5-2.5l15.5-4l14-5l13.5-6l12.5-8l12-8.5l12-11l10-11l9-11.5l7.5-12.5l7.5-15l5-13.5l4-16l2.5-16.5l0.5-14.5M1863 565.5l-0.5-7.5l-1-7l-1.5-7.5l-3-7.5l-3-6.5l-3.5-6.5l-5-6.5l-5-5.5l-6-5.5l-6-4.5l-7-4.5l-6.5-3l-7-2.5l-7-2l-7.5-1l-8-0.5l-8 0.5l-7.5 1l-7 1.5l-7 2.5l-7.5 3.5l-6.5 3.5l-6.5 5l-5.5 5l-5 5.5l-5 6.5l-3.5 6l-3.5 7.5l-2.5 7l-2 7l-1.5 8l0 7.5l0 8.5l1.5 7l1.5 7l3 8l3.5 7.5l3.5 6l4.5 6l5 5.5l5.5 5l6 4.5l7 4l6.5 3.5l7 2.5l8 2l7 1l8 0.5l7.5 0l8-1.5l7.5-1.5l7-2.5l7-3.5l6.5-4l6-4l6-5.5l5-5.5l4.5-6l4-6.5l3.5-7l2.5-7l2-8l1-7.5l0.5-8M963 385.5l50 20.5l55 20.5l55.5 19.5l56.5 17.5l51.5 15.5l57 15l57.5 13.5l57.5 12.5l58 11l58 9l58.5 8l53.5 6l58.5 5l59 3.5l54 2l59 1M1862 565.5l-59 1l-54 2l-59 3.5l-58.5 5l-58.5 6.5l-58.5 8l-58 9.5l-53 10l-57.5 12.5l-52.5 12.5l-57 15l-56.5 16.5l-56.5 17.5l-51 18l-55 20.5l-54.5 22M1114 191.5l16.5 21.5l17.5 21l18 21l19 20l19 19.5l18.5 18l20.5 18.5l20.5 18l21.5 17l22 16.5l20.5 15l23 15.5l23 14.5l24 14l24 13.5l22.5 11.5l23 11l25 11.5l25.5 10.5l25.5 9.5l26 9l26.5 8.5l26.5 7.5l26.5 6.5l27 6l27 5l25 4l27.5 3.5l27 3l27.5 2l27.5 1l25.5 0.5M1862.5 565.5l-27.5 0.5l-27.5 1l-27.5 2l-25 3l-25.5 3l-27 4.5l-27 5l-27 6l-26.5 6.5l-26.5 7.5l-26.5 8.5l-26 9l-25.5 9.5l-25.5 10.5l-23 10.5l-25 12l-24.5 12.5l-24 13.5l-23.5 14l-21.5 13.5l-23 15.5l-22 16l-22 16.5l-21.5 17.5l-20.5 18l-20.5 18.5l-19.5 19l-18 18.5l-18.5 20l-17 19.5l-17.5 21l-16.5 21.5M1394.5 97.5l0.5 23.5l2 22.5l2.5 22.5l4 23l5 22l6 22l7 21.5l8.5 22l9.5 21.5l10.5 20l11.5 20.5l12 19l13.5 19.5l14 17.5l15 17l16 17l16.5 16l18 15l18.5 14.5l18.5 13l20 12.5l19.5 11l20 10.5l21 9l21 8l21.5 7l22.5 6.5l22 5l23.5 4l22 2.5l23.5 2l23 0.5M1863 565.5l-23 0.5l-23.5 2l-23 2.5l-22.5 4l-22 5l-21.5 6l-21.5 7l-22 8.5l-21 9l-21 11l-19.5 11l-20 12.5l-18.5 13l-17.5 14l-17.5 14.5l-17 16.5l-16 17l-15 17l-14 17.5l-13 18.5l-12 19l-11.5 20.5l-11 21l-9 20.5l-8 21.5l-7.5 22l-6.5 23l-5 22l-4 22l-2.5 23.5l-2 22.5l-0.5 23.5M1675.5 190.5l-9 13.5l-8.5 13.5l-7.5 14.5l-6 15l-5.5 15.5l-4 15.5l-3 16l-2.5 16l-0.5 16l0 16.5l1.5 16l2.5 16l3.5 15.5l4.5 16l5.5 15l7 14.5l7.5 14.5l8.5 13.5l10 13l10.5 13l11.5 11.5l12 10.5l13 10l13.5 9l14 8l14.5 7l15 6l15.5 5l15.5 4l16 2.5l16 2l16.5 0.5M1863 565.5l-16.5 0.5l-16 2l-16 2.5l-15.5 4l-15.5 5l-15.5 6l-14.5 7l-14 8.5l-13.5 9l-13 9.5l-12 11l-11 11.5l-10.5 12.5l-10 13l-8.5 13.5l-7.5 14.5l-7 14.5l-5.5 15l-4.5 16l-3.5 15.5l-2.5 16l-1.5 16l0 16.5l0.5 16l2.5 16l3 16l4 15.5l5.5 15.5l6 15l7.5 14.5l8.5 13.5l9 13.5M1827 385l-7 3.5l-7 4l-6.5 4.5l-6.5 5.5l-5.5 5.5l-5.5 6l-4.5 6.5l-4 7l-3.5 7.5l-3 7.5l-2 7.5l-1.5 8l-1 8l0 8l0.5 8l1 8l2 8l2.5 7.5l3.5 7.5l3.5 7l4.5 7l5 6l5.5 6l6 5.5l6.5 4.5l7 4.5l7 3.5l7.5 3l8 2.5l7.5 1.5l8 1l8 0.5M1863 565.5l-8 0.5l-8 1l-7.5 1.5l-8 2.5l-7.5 3l-7 3.5l-7 4.5l-6.5 4.5l-6 5.5l-5.5 6l-5 6l-4.5 7l-3.5 7l-3.5 7.5l-2.5 7.5l-2 8l-1 8l-0.5 8l0 8l1 8l1.5 8l2 7.5l3 7.5l3.5 7.5l4 7l4.5 6.5l5.5 6l5.5 5.5l6.5 5.5l6.5 4.5l7 4l7 3.5" fill="none" stroke="#ffb8b8" stroke-width="1"/>
<path d="M1707 565.5l-0.5-20.5l-2-20.5l-2-16l-3.5-20.5l-3.5-16l-5.5-19.5l-5-15.5l-7-19l-8.5-19l-9-18.5l-10.5-17.5l-8.5-14l-12-16.5l-10-13l-10.5-12.5l-14-15l-14.5-14l-12.5-11l-16-13l-13.5-9.5l-17-11l-14-8.5l-18-9.5l-18.5-8.5l-19-7.5l-19.5-7l-20-5.5l-16-3.5l-20-4l-20-2.5l-20.5-1.5l-16.5-0.5l-16.5 0.5l-20.5 1l-20 2.5l-20.5 3l-20 4.5l-15.5 4.5l-19.5 6l-19.5 7.5l-18.5 8.5l-18.5 9l-17.5 10.5l-14 8.5l-16.5 12l-13 10l-12.5 10.5l-15 14l-11 12l-14 15l-10 13l-12 16.5l-11.5 17l-10 18l-7.5 14.5l-8.5 18.5l-7.5 19l-6.5 19.5l-4.5 16l-5 19.5l-3.5 20.5l-2 16l-2 20.5l-0.5 20.5l0.5 16.5l1 20.5l2 16l3 20.5l4.5 20l4 15.5l6 19.5l7.5 19.5l8 18.5l7 15l10 18l11 17l9 13.5l12.5 16.5l13 15.5l14.5 15l14.5 14l12.5 11l16 12.5l16.5 12l17.5 11l18 10l14.5 7l18.5 8.5l15.5 6l19.5 6.5l19.5 5.5l16 3.5l20.5 3.5l16 2l20.5 2l20.5 0.5l16.5-0.5l20-1l20.5-2.5l20-3.5l20-4.5l16-4.5l15.5-5l19-7l19-8.5l18.5-9l14-8l17.5-11l16.5-11.5l13-10l16-13.5l14.5-14l11.5-12l13.5-15.5l12.5-16l9.5-13l11-17.5l8.5-14l9.5-18.5l8-18.5l7.5-19l5.5-15.5l5.5-19.5l4.5-20l3-16.5l2.5-20l2-20.5l0.5-20.5M1550.5 565.5l-0.5-16.5l-0.5-13l-1.5-13l-3-16l-3.5-16l-4-16l-5.5-15.5l-4.5-12l-6.5-15l-7.5-15l-8-14l-7-11l-7.5-11l-10-13l-11-12.5l-11-11.5l-9.5-9l-12.5-11l-13-10l-13.5-9.5l-13.5-8.5l-11.5-6.5l-14.5-7.5l-12-5l-12.5-5l-15.5-5l-15.5-4.5l-13-3l-13-2.5l-16-2.5l-16.5-1.5l-16-0.5l-16.5 0.5l-16.5 1l-13 1.5l-16 3l-16 3.5l-12.5 3.5l-12.5 4l-15.5 5.5l-12 5l-15 7l-14.5 8l-13.5 8.5l-11 7.5l-13 10l-12.5 10.5l-12 11l-11.5 12l-10.5 12.5l-10 13l-7.5 10.5l-9 14l-6.5 11l-6 12l-7 15l-6 15l-5 15.5l-3.5 12.5l-4 16l-3 16l-2 16.5l-1 13l-0.5 16.5l0.5 16l1 16.5l1.5 13l3 16l3.5 16l3.5 13l4 12.5l5.5 15l5.5 12l7 15l8 14.5l8.5 13.5l9.5 13.5l8 10.5l10.5 12.5l11 12l12 11.5l12.5 10.5l10 8l13.5 9.5l14 9l14 8l12 5.5l15 7l12 4.5l15.5 5l16 4.5l12.5 3l16.5 3l16 2l16.5 1l13 0.5l16.5-0.5l13-1l13-1.5l16-2.5l16-3.5l16-4.5l12.5-4l15.5-5.5l15-6.5l14.5-7.5l14-8l11-7l11-7.5l13-10l12.5-10.5l12-11.5l11-11.5l11-12.5l10-13l7.5-11l8.5-14l6.5-11l7.5-15l6.5-15l4.5-12l5.5-15.5l4-16l3-12.5l3-16.5l2-16l0.5-13l0.5-16.5M1394.5 565.5l-0.5-12.5l-1-12l-1.5-12l-1.5-10l-3-12l-3.5-11.5l-3-9.5l-4.5-11.5l-5-11l-5.5-11l-6.5-10.5l-5-8.5l-7.5-10l-6-7.5l-6.5-7.5l-8.5-9l-8.5-8.5l-7.5-6l-10-8l-8-5.5l-10-6.5l-11-6l-8.5-4.5l-11.5-5l-9-3.5l-11.5-4l-12-3.5l-9.5-2l-12-2.5l-10-1.5l-12-1l-12.5 0l-9.5 0l-12.5 0.5l-12 1.5l-12.5 2l-12 2.5l-9.5 3l-11.5 3.5l-11.5 4.5l-11 5l-9 4.5l-8.5 4.5l-10.5 6.5l-8 5.5l-10 7.5l-9.5 8l-9 8.5l-6.5 7l-8.5 9l-6 7.5l-7 10l-7 10.5l-5 8.5l-5.5 11l-5 11l-4.5 11.5l-3.5 9l-3.5 12l-2.5 12l-2 9.5l-1.5 12.5l-1 12l-0.5 12.5l0.5 12l0.5 10l1.5 12l2 12l2.5 12l2.5 9.5l4 12l4.5 11.5l4 9l5.5 11l6 10.5l6.5 10.5l5.5 8l7.5 9.5l6.5 7.5l8.5 9l9 8.5l9 8l10 7.5l8 5.5l8 5.5l11 6l11 5.5l11 5l11.5 4.5l9.5 3l11.5 3.5l12 2.5l10 1.5l12 1.5l12.5 1l9.5 0l12.5 0l9.5-0.5l12.5-1.5l9.5-2l12-2.5l12-3l9.5-3l11.5-4.5l11-5l11-5.5l11-6l8-5l8-6l10-7l9.5-8l8.5-8.5l7-7l8-9.5l7.5-9.5l7-10l5.5-8.5l6-10.5l5.5-11l5-11.5l4.5-11.5l3.5-11.5l2.5-9.5l3-12l1.5-9.5l1.5-12.5l1-12l0-10M1238.5 565.5l-1-14.5l-2-15l-4-15.5l-5-14l-6-13.5l-7.5-12.5l-9.5-13.5l-10-11l-10.5-10l-13.5-10l-12.5-7.5l-13-6.5l-15.5-5.5l-14-4l-15-2l-16-1l-16.5 0.5l-14.5 2l-14.5 3.5l-14 5l-14.5 7l-13 7.5l-12 8.5l-12 11l-11 12l-9 12l-7.5 12.5l-7 14.5l-5 14l-3.5 14.5l-2.5 14.5l-1 16l0.5 15l2 14.5l3.5 14.5l5.5 15.5l6 13l8 14.5l9 12l11 12l10.5 10l13.5 10l14 8l13 6.5l14 5l14.5 3.5l16 2.5l15 0.5l14.5-0.5l14.5-2l14.5-3.5l15.5-5.5l13.5-6l14-8.5l12-8.5l12-11l10-11l8.5-11.5l8.5-14l6.5-13.5l5.5-15.5l3.5-14l2.5-14.5l1-16.5M1082 565.5l0-7.5l-1-7l-2-7.5l-2.5-7.5l-3-6.5l-4-6.5l-5-6.5l-4.5-5.5l-5.5-5l-6.5-5l-6.5-4l-6.5-3l-7-3l-8-2l-7-1l-8.5-0.5l-7 0l-7.5 1l-8 2l-7 2.5l-7.5 3.5l-6 3.5l-6 4.5l-6.5 5.5l-5 5.5l-4.5 6.5l-4.5 7l-3 6.5l-2.5 7l-2 8l-1 7l-0.5 7.5l0.5 7.5l1 8l1.5 7l2.5 7l3.5 7.5l4 6.5l4 6l5.5 6l5.5 5l6 4.5l6 4l7.5 3.5l7 2.5l8 2l8 1l7.5 0.5l7 0l8.5-1.5l7-1.5l7-2.5l7.5-3.5l6-4l6-4l6-5.5l5-5.5l4.5-6l4.5-7l3-6.5l3-8l1.5-7l1-7.5l0.5-8M929.5 565.5l59-1l59-2l54-3.5l58.5-5l58.5-7l58.5-8l58-9.5l53-10l57.5-12.5l57.5-13.5l52-14l56.5-16.5l56-18l51-17.5l55.5-21l50-20M1824 744.5l-50-20l-55.5-21l-55.5-19l-56-18l-52-15l-57-15l-52.5-12.5l-57.5-12.5l-58-11l-58-9.5l-53.5-7l-58.5-7l-54-4.5l-58.5-4l-59-2l-59-1M927.5 565.5l27.5-0.5l27.5-1l25.5-2l27-3l27.5-3.5l27-4.5l25-4.5l27-6l26.5-7l24.5-7l26.5-8l26-9l25.5-9.5l23.5-10l25.5-11l24.5-12l24.5-12.5l24-13.5l23.5-14l21.5-13.5l23-15.5l22.5-16l21.5-16.5l21.5-17.5l21-18l20-18.5l18.5-17.5l19.5-19.5l18.5-20.5l18-20.5l16-19.5l17-22M1674.5 939l-17-22l-16-19.5l-18-20.5l-18.5-20.5l-19.5-19.5l-19.5-19l-19-17l-21-18l-21.5-17.5l-21.5-16.5l-21-15l-22.5-15.5l-23.5-14.5l-23.5-14l-24-13.5l-22.5-11.5l-25-12l-25-11.5l-25.5-10.5l-24-9l-25.5-9l-26.5-8l-26.5-7.5l-26.5-7l-27-6l-27-5l-25-4l-27.5-3.5l-27-3l-25.5-2l-27.5-1l-27.5-0.5M926.5 565.5l24-0.5l22.5-2l22-2.5l23.5-4l22-5l22.5-6.5l21.5-7l21-8.5l20.5-9l20.5-10l20.5-11.5l19-12l18.5-13l18.5-14.5l18-15.5l16-15.5l16-16.5l15-18l14-17.5l13-18.5l12.5-20l11.5-19.5l10.5-21l9-20.5l8.5-21.5l7-22l6.5-22l5-23l4-23l2.5-22.5l2-22.5l0.5-23.5M1394.5 1034l-0.5-23.5l-2-22.5l-2.5-23.5l-4-22l-5-22l-6-22l-7.5-22.5l-8-21l-9-20.5l-10.5-21l-11.5-19.5l-12.5-20l-13.5-19.5l-14-17.5l-14.5-17.5l-15.5-16l-16.5-16l-17.5-15l-19-14.5l-18-13l-20-13l-20-11l-21-10.5l-20.5-9l-22-8.5l-21.5-7.5l-21.5-6l-22-5l-23.5-4l-22-2.5l-22.5-2l-24-0.5M926 565.5l16-0.5l16-1.5l16.5-3l16-4l15-5l15-6l15-7l14-8l13.5-9l12.5-10l12-11l11.5-11.5l10.5-12l9.5-13l9-14l7.5-14l7-15l5.5-15l4.5-15.5l3.5-16l2.5-16l1.5-16l0-16l-0.5-16.5l-2-16l-3.5-16l-4-15.5l-5.5-15l-6-15l-7.5-14.5l-8.5-14l-9-13M1113.5 940l9-13l8.5-14l7.5-14.5l6-15l5.5-15l4-15.5l3.5-16l2-16l0.5-16.5l0-16l-1.5-16l-2.5-16l-3.5-16l-4.5-15.5l-5.5-15l-7-15l-7.5-14l-9-14l-9.5-13l-10.5-12l-11.5-11.5l-12-11l-12.5-10l-13.5-9l-14-8l-15-7l-15-6l-15-5l-16-4l-16.5-3l-16-1.5l-16-0.5M926 565.5l8-0.5l8-1l8-1.5l7.5-2.5l7.5-3l7-3.5l7-4.5l6.5-4.5l6-5.5l5.5-6l5-6.5l4.5-6.5l3.5-7l3.5-7.5l2.5-7.5l2-8l1-8l0.5-8l0-8l-1-8l-1.5-8l-2-7.5l-3-7.5l-3.5-7.5l-4-6.5l-4.5-7l-5.5-6l-5.5-5.5l-6-5l-7-5l-7-4l-7-3M962 745.5l7-3l7-4l7-5l6-5l5.5-5.5l5.5-6l4.5-7l4-6.5l3.5-7.5l3-7.5l2-7.5l1.5-8l1-8l0-8l-0.5-8l-1-8l-2-8l-2.5-7.5l-3.5-7.5l-3.5-7l-4.5-6.5l-5-6.5l-5.5-6l-6-5.5l-6.5-4.5l-7-4.5l-7-3.5l-7.5-3l-7.5-2.5l-8-1.5l-8-1l-8-0.5" fill="none" stroke="#b8b8ff" stroke-width="1"/>
<line x1="926" y1="565.5" x2="1863" y2="565.5" stroke="#c4c4c4" stroke-width="1.2"/>
<text x="1384.3" y="116.5" font-size="22" fill="#ffb8b8" textLength="29.8" lengthAdjust="spacingAndGlyphs" font-family="Liberation Mono">50</text>
<text x="1369" y="142.6" font-size="22" fill="#b8b8ff" textLength="50.9" lengthAdjust="spacingAndGlyphs" font-family="Liberation Mono">-20m</text>
<text x="1121.1" y="210.6" font-size="22" fill="#ffb8b8" textLength="29.9" lengthAdjust="spacingAndGlyphs" font-family="Liberation Mono">25</text>
<text x="1113.2" y="236.6" font-size="22" fill="#b8b8ff" textLength="50.8" lengthAdjust="spacingAndGlyphs" font-family="Liberation Mono">-40m</text>
<text x="1632.3" y="210.6" font-size="22" fill="#ffb8b8" textLength="43.8" lengthAdjust="spacingAndGlyphs" font-family="Liberation Mono">100</text>
<text x="1623.8" y="236.9" font-size="22" fill="#b8b8ff" textLength="51.1" lengthAdjust="spacingAndGlyphs" font-family="Liberation Mono">-10m</text>
<text x="971.7" y="404.7" font-size="22" fill="#ffb8b8" textLength="28.4" lengthAdjust="spacingAndGlyphs" font-family="Liberation Mono">10</text>
<text x="962" y="430.1" font-size="22" fill="#b8b8ff" textLength="50.8" lengthAdjust="spacingAndGlyphs" font-family="Liberation Mono">-0.1</text>
<text x="1782" y="404.7" font-size="22" fill="#ffb8b8" textLength="45.6" lengthAdjust="spacingAndGlyphs" font-family="Liberation Mono">250</text>
<text x="1788" y="430.4" font-size="22" fill="#b8b8ff" textLength="38.1" lengthAdjust="spacingAndGlyphs" font-family="Liberation Mono">-4m</text>
<text x="972.9" y="713.3" font-size="22" fill="#ffb8b8" textLength="28.1" lengthAdjust="spacingAndGlyphs" font-family="Liberation Mono">10</text>
<text x="1069.9" y="559.6" font-size="22" fill="#ffb8b8" textLength="24.7" lengthAdjust="spacingAndGlyphs" font-family="Liberation Mono">10</text>
<text x="1063.2" y="585.6" font-size="22" fill="#b8b8ff" textLength="37.5" lengthAdjust="spacingAndGlyphs" font-family="Liberation Mono">0.1</text>
<text x="1224.4" y="559.6" font-size="22" fill="#ffb8b8" textLength="26.7" lengthAdjust="spacingAndGlyphs" font-family="Liberation Mono">25</text>
<text x="1218" y="585.6" font-size="22" fill="#b8b8ff" textLength="40" lengthAdjust="spacingAndGlyphs" font-family="Liberation Mono">40m</text>
<text x="1381.9" y="559.6" font-size="22" fill="#ffb8b8" textLength="25.7" lengthAdjust="spacingAndGlyphs" font-family="Liberation Mono">50</text>
<text x="1376" y="585.6" font-size="22" fill="#b8b8ff" textLength="40" lengthAdjust="spacingAndGlyphs" font-family="Liberation Mono">20m</text>
<text x="1529" y="559.6" font-size="22" fill="#ffb8b8" textLength="40" lengthAdjust="spacingAndGlyphs" font-family="Liberation Mono">100</text>
<text x="1531" y="585.6" font-size="22" fill="#b8b8ff" textLength="37" lengthAdjust="spacingAndGlyphs" font-family="Liberation Mono">10m</text>
<text x="1684" y="559.6" font-size="22" fill="#ffb8b8" textLength="41" lengthAdjust="spacingAndGlyphs" font-family="Liberation Mono">250</text>
<text x="1689" y="585.6" font-size="22" fill="#b8b8ff" textLength="30" lengthAdjust="spacingAndGlyphs" font-family="Liberation Mono">4m</text>
<text x="1121" y="926" font-size="22" fill="#ffb8b8" textLength="30" lengthAdjust="spacingAndGlyphs" font-family="Liberation Mono">25</text>
<text x="1632" y="926" font-size="22" fill="#ffb8b8" textLength="44" lengthAdjust="spacingAndGlyphs" font-family="Liberation Mono">100</text>
<text x="1782" y="731" font-size="22" fill="#ffb8b8" textLength="45.6" lengthAdjust="spacingAndGlyphs" font-family="Liberation Mono">250</text>
<text x="1384" y="1020" font-size="22" fill="#ffb8b8" textLength="30" lengthAdjust="spacingAndGlyphs" font-family="Liberation Mono">50</text>
<circle cx="1394.5" cy="565.5" r="468.5" fill="none" stroke="#000" stroke-width="2"/>
<path d="M1418 531l2 24l0 23.5l-2.5 24.5l-5 23l-7 23l-9 22l-11.5 21.5l-13 19.5l-15 18.5l-16.5 16.5l-19 16l-19.5 13.5l-21.5 11.5l-21 9l-24.5 7.5l-23 5l-23 2.5l-25.5 0.5l-23-2l-24-4.5l-22.5-6.5l-23-9l-21-11l-20-12.5l-18.5-14.5l-18-17l-15-18l-14-19.5l-11.5-20.5l-10-22.5l-7.5-22.5l-5.5-23M1419.5 527.5l2.5 24.5l0.5 24l-2.5 24.5l-4.5 23.5l-7 23l-8.5 22l-11.5 22l-13.5 20.5l-15 18.5l-16.5 17l-19 16l-19.5 13.5l-22 12l-21 9l-24.5 8l-23.5 5l-23.5 2.5l-25.5 0.5l-23-2l-24.5-4.5l-23-6.5l-23-9l-21-11l-20-13l-19-14.5l-18-17l-15-18l-14-20l-11.5-20.5l-10-22.5l-8-22.5l-5-23M1421.5 524l3 24l0.5 24l-2 25l-4 23.5l-6.5 23.5l-8.5 22l-11.5 22.5l-13 20.5l-14.5 19l-16.5 17.5l-19 16.5l-20 14l-21.5 12.5l-21.5 9.5l-24.5 8l-23.5 5l-24 3l-26 1l-23-2l-25-4l-23-6.5l-23.5-9l-21.5-11l-20.5-13l-19-15l-18-17l-16-18l-14-20l-12-21l-10-22.5l-7.5-23l-5.5-23.5M1424 520.5l3 25l1 24.5l-2 25l-4 24l-6.5 24l-8.5 23l-11.5 23l-13 20.5l-15.5 19.5l-16.5 17.5l-19.5 17l-20 14l-22.5 12.5l-21.5 9.5l-23 7.5l-23.5 5.5l-24 3l-24 1l-23.5-1.5l-25-4.5l-24-6l-24-9.5l-21.5-10.5l-21-13l-19-15l-18.5-17.5l-16-18l-14.5-20.5l-12-21l-10-22.5l-8-24l-5.5-23.5M1426.5 517l3.5 24.5l1 24.5l-1.5 25.5l-3.5 24l-6.5 24.5l-8 23l-11.5 23l-13 21.5l-15 19.5l-16.5 18l-19.5 17.5l-20 14.5l-22 13l-22 10l-23 8l-24 5.5l-24.5 3.5l-24 1l-24-1.5l-25.5-4l-24-6l-24.5-9.5l-22-10.5l-21-13l-20-15l-18.5-18l-16-18l-15-20.5l-12-21.5l-10.5-23l-8-23.5l-5.5-24.5M1429 513.5l3.5 25l1.5 25l-1 26l-3.5 25l-6.5 24.5l-8.5 23.5l-10.5 22.5l-12.5 21.5l-15.5 20.5l-16.5 18.5l-19.5 17.5l-20.5 15l-22.5 13l-22 10l-23.5 8l-24.5 6l-24.5 3.5l-24.5 1l-24.5-1.5l-25.5-4l-24.5-6.5l-24.5-9l-22-11l-21.5-13l-20-15.5l-18.5-17.5l-16.5-18.5l-14.5-20.5l-12-21.5l-10.5-23l-8-24l-5.5-24.5M1431.5 509.5l4 25l2 25l-0.5 26l-3.5 25l-6 25.5l-8 23.5l-10 23l-13 22l-15 20.5l-16.5 19l-19.5 18l-20.5 15.5l-22.5 13.5l-22.5 10.5l-23.5 8.5l-24.5 6l-25 4l-25 1l-24.5-1l-26.5-4l-24.5-6l-25-9.5l-22.5-11l-22-13l-20-15.5l-19-18l-16.5-18.5l-15-21l-13-22.5l-10-23l-8-24l-5.5-24.5M1434.5 505.5l4.5 25.5l2 25.5l0 26l-3 25.5l-6 26l-8 24l-10 23l-13 22.5l-15 21.5l-17 19l-18 17l-20.5 16l-22.5 14l-22.5 11l-24 9l-24.5 6.5l-25.5 4l-25.5 1.5l-25-1l-26.5-3.5l-25-6.5l-13-4l-12.5-5l-23-11l-22-13.5l-20.5-15.5l-19.5-18l-17-19l-15-21l-13-22.5l-10.5-23.5l-8-24.5l-5.5-25M1437.5 501.5l5 25.5l2.5 26l0 26.5l-2.5 26l-5.5 26.5l-8 24.5l-10.5 23.5l-12.5 23l-15.5 22l-17 19.5l-18 17.5l-21 16l-12.5 8.5l-10.5 6l-23 11.5l-24 9l-25.5 6.5l-25.5 4l-26 1.5l-25-1l-12.5-1.5l-14.5-2.5l-25.5-6l-23.5-8.5l-23.5-11l-22.5-13.5l-21-16l-10-9l-9.5-9l-17-19.5l-15.5-21l-13-23l-10.5-23.5l-8.5-25l-5.5-25.5M1441 497.5l5.5 25.5l3 26.5l0 26l-2.5 26.5l-5 26.5l-7.5 25l-10 24l-12.5 23.5l-15 22l-17 20.5l-18.5 18l-21 16.5l-12.5 8.5l-10.5 6.5l-23.5 11.5l-24.5 9.5l-25.5 7l-26 4.5l-26 1.5l-26-0.5l-12.5-1.5l-14.5-2.5l-26-6l-24-8.5l-24-11.5l-22.5-13.5l-21.5-15.5l-10.5-9.5l-9.5-9.5l-17.5-19l-15.5-21.5l-13.5-23.5l-10.5-24l-8.5-25l-6-26M1444.5 493.5l6 26l3 26.5l1 26.5l-2.5 27l-2 13l-2.5 14l-7.5 25.5l-10 24.5l-13 24.5l-7.5 12l-7.5 10.5l-17.5 20.5l-18.5 18.5l-21 17l-21.5 14l-23.5 12l-25 10l-25.5 7.5l-26.5 4.5l-27 2l-26-0.5l-13-1.5l-15-2.5l-26-6l-24.5-8.5l-24.5-11.5l-23-13.5l-21.5-16l-11-9.5l-9.5-9.5l-17.5-19.5l-16-21.5l-13.5-23.5l-11-24.5l-8.5-25.5l-6-26.5M1448.5 489l6 26.5l2.5 13.5l1.5 13.5l1 27l-2 27.5l-2 13.5l-2.5 14l-3.5 13.5l-4 13l-10 25l-6 12l-7 12.5l-7.5 12.5l-8 11l-8 10.5l-9.5 10.5l-18.5 19l-11.5 9.5l-10.5 8l-21.5 14l-24 12.5l-25.5 10l-13 4l-13 3.5l-13.5 2.5l-13.5 2l-27 2l-26.5-1l-13-1l-15.5-2.5l-12.5-2.5l-14-4l-25-9l-24-11l-23.5-14.5l-22-16l-10.5-9.5l-10-9.5l-17.5-20l-15.5-22l-13.5-23.5l-11-24.5l-8.5-25.5l-6-26.5M1452.5 484.5l3.5 13l3.5 14l2.5 14l1.5 13.5l1 14l0.5 13.5l-0.5 14l-1.5 14l-4 27l-3.5 13.5l-3.5 13l-10 25.5l-6 12.5l-6.5 13l-8 12.5l-7.5 11l-8.5 11l-9 11l-19 19.5l-11.5 10l-10.5 8l-22 14.5l-24 13l-12.5 5.5l-13 5l-13.5 4l-13.5 3.5l-13.5 3l-14 2l-13.5 1.5l-14 0.5l-27-0.5l-13-1.5l-15.5-2l-12.5-3l-14.5-3.5l-25.5-9l-24.5-11.5l-11.5-6.5l-12.5-8l-11.5-8l-10.5-8l-19.5-18.5l-10.5-10.5l-8.5-10.5l-16-22.5l-7-11l-7-12.5l-11-25l-8.5-26l-3-13.5l-3-13.5M1457 480l4 13.5l3.5 14l2.5 13l2 14l1 14.5l0.5 13.5l0 14l-1 14.5l-4 27l-3.5 14l-3.5 13.5l-4.5 13.5l-5 12.5l-6 12.5l-6.5 13l-8 13.5l-7.5 11l-8 11.5l-9.5 11l-19 20l-11.5 10.5l-10.5 8l-22.5 15.5l-12 6.5l-12.5 6.5l-12.5 5.5l-13.5 5.5l-13.5 4l-13.5 4l-14 3l-14 2l-14 1.5l-14 1l-27.5-0.5l-26.5-3.5l-13-2.5l-15-3.5l-25.5-8.5l-13.5-6l-12.5-6l-11.5-6l-12.5-8l-12-8.5l-11-8l-20-18.5l-10.5-11l-9-10.5l-9-11.5l-7.5-11l-7-12l-7-12.5l-6-13l-5.5-13l-5-13l-4-14l-3.5-13.5l-2.5-13.5M1461.5 475.5l4.5 13.5l3.5 14.5l3 13.5l2 14l1.5 14.5l0.5 14l0 14.5l-1 14.5l-1.5 14l-2 14l-3.5 14.5l-3.5 13.5l-4.5 14l-5 12.5l-6 13.5l-7 13l-14 23.5l-8.5 11.5l-9 11.5l-10 11l-9.5 9l-11.5 11l-10.5 8.5l-23 15.5l-12 7l-12.5 7l-13 5.5l-13.5 5.5l-13.5 4.5l-14 4l-14.5 3l-14 2.5l-14.5 1.5l-14 1l-14 0l-14-0.5l-27.5-3l-13-2.5l-15-4l-26.5-8.5l-13-6l-13-6l-11.5-6.5l-13-8l-12-8l-11-9l-20.5-18.5l-10.5-11l-9.5-10.5l-9-12l-7.5-11l-7-12l-7.5-13l-6-12.5l-5.5-13.5l-4.5-13l-4.5-14l-3-14l-3-14M1466.5 471l4.5 14l4 14.5l3 13.5l2.5 14.5l1.5 15l1 14.5l0 13.5l-0.5 14.5l-1.5 14.5l-2 14l-3 14.5l-3.5 14l-4.5 14.5l-5 13l-6 13l-6.5 14l-14.5 23.5l-8.5 12l-9 12l-10.5 11.5l-9 9.5l-12 10.5l-10.5 9l-11 8.5l-12 7.5l-12.5 7.5l-12.5 7l-13.5 6l-13.5 5.5l-14 4.5l-14 4.5l-14.5 3l-14.5 2.5l-14.5 1.5l-14.5 1l-14.5 0.5l-14.5-0.5l-27.5-3.5l-13.5-2.5l-15-3.5l-12.5-4l-14.5-5l-13.5-6l-13-6l-12-6.5l-13-8l-12.5-8.5l-11-9l-10-8.5l-11-10l-10.5-11.5l-9.5-11l-9-11.5l-7.5-11.5l-7.5-12l-7-13l-6.5-13l-5.5-13.5l-4.5-13.5l-4.5-14l-3.5-14l-2.5-14.5M1472 466.5l5 14l4 15l3.5 14l2.5 14.5l1.5 15.5l1 14.5l0.5 14l-0.5 15l-1.5 14.5l-2 14.5l-3 15l-3.5 14.5l-4.5 14.5l-5 13.5l-6 14l-6 12l-6.5 12l-7.5 12l-8.5 12.5l-9.5 12l-10 12l-9.5 9.5l-12 11.5l-11 9l-11 8.5l-12 8l-12.5 7.5l-13 7l-13.5 6.5l-14 5.5l-14.5 5l-14.5 4.5l-14.5 3l-14.5 3l-15 1.5l-15 1l-14.5 0.5l-14.5-0.5l-14-1.5l-14-2l-13.5-2.5l-16-4l-12.5-3.5l-14.5-5.5l-14-5.5l-13-6.5l-12.5-6.5l-13-8.5l-12.5-8.5l-11.5-9l-10.5-8.5l-10.5-10.5l-11-11.5l-9-11l-9.5-12l-8-11.5l-7-12l-7.5-13.5l-6-13l-6-13.5l-4.5-13.5l-4.5-14.5l-3.5-14l-2.5-15M1477.5 462l5.5 14.5l4 14l3.5 14.5l3 15l2 15l1 15l0.5 14.5l0 15l-1.5 15l-2 15l-2.5 15l-3.5 14.5l-4.5 15.5l-5 13.5l-6 14l-5.5 12.5l-7 12.5l-7.5 12.5l-8.5 12.5l-9.5 12.5l-10.5 12l-9.5 10l-10 10l-10.5 9l-11.5 9l-12 8.5l-13 8l-13 7.5l-13.5 6.5l-14 6l-14.5 5l-15 4.5l-14.5 4l-15.5 2.5l-15 2.5l-15 1l-15 0.5l-15-0.5l-14.5-1l-14-2l-14-2.5l-16-3.5l-13-4l-15-5l-14-6l-13.5-6l-12.5-7l-14-8.5l-12.5-8.5l-12-9l-10.5-9l-11-10.5l-11-11.5l-9.5-11.5l-9.5-12l-8-11.5l-7.5-12.5l-7.5-13.5l-7-14.5l-5.5-13.5l-5-14.5l-4.5-14l-3.5-14.5l-2.5-15M1484 457.5l5 14l4.5 14.5l4 14.5l3 15l2 16l1.5 15l0.5 14.5l0 15.5l-1 15.5l-2 14.5l-2.5 16l-3.5 15l-4.5 15.5l-4.5 14l-6 14l-6 13l-6.5 12.5l-7.5 13l-9 13l-9.5 12.5l-10.5 12.5l-9.5 10.5l-10.5 10l-10.5 9.5l-12 9l-12 9l-13 8l-13.5 7.5l-13.5 7l-14.5 6l-15 5.5l-15 4.5l-15 4l-15.5 3l-15.5 2l-15 1.5l-15.5 0l-15 0l-15-1.5l-14.5-1.5l-14-2.5l-16.5-4l-13-4l-15.5-5l-14-6l-14-6.5l-12.5-7l-14-8.5l-13-8.5l-12-9.5l-10.5-9l-11-10.5l-11.5-12l-9.5-11.5l-9.5-12l-8.5-12l-7.5-12.5l-7.5-13.5l-6.5-14l-6-14.5l-5-14.5l-4.5-14.5l-3.5-14.5l-2.5-15.5M1490.5 453l5.5 14.5l4.5 14.5l4 15l3 14.5l2.5 16l2 15.5l0.5 14.5l0 16l-1 15.5l-1.5 15.5l-2.5 16l-3.5 15l-4 16l-5 14.5l-6 14.5l-6 13l-6.5 13l-7.5 13.5l-9 13l-9.5 13l-11 13l-9.5 10.5l-10.5 10.5l-11 9.5l-12 9.5l-12.5 9l-13 8.5l-13.5 7.5l-14.5 7.5l-14.5 6l-15 5.5l-15.5 5l-15.5 4l-15.5 3l-15.5 2l-16 1.5l-15.5 0l-15.5 0l-15-1.5l-14.5-1.5l-14.5-3l-17-3.5l-13.5-4l-15-5.5l-15-6l-13.5-6.5l-13-7l-12.5-7.5l-13-9l-12-9.5l-11-9l-11.5-11l-11.5-12l-10-11.5l-10-12.5l-8.5-12.5l-7.5-12.5l-7.5-14l-7-13.5l-6-15.5l-5.5-14.5l-4.5-15.5l-3.5-15l-2.5-15.5M1497 448.5l6 14.5l5 15.5l4.5 15l3 15l3 16.5l1.5 16l1 15l0 16l-1 16.5l-1.5 15.5l-2 14.5l-3.5 15.5l-4.5 16.5l-4.5 14.5l-6 15.5l-6 13l-7 13.5l-7.5 13.5l-9 13.5l-9.5 13.5l-11 13l-10 11l-10.5 10.5l-11.5 10l-12 10l-12.5 9l-13.5 8.5l-14 8l-14.5 7.5l-15 6.5l-15 5.5l-16 5l-15.5 4l-16 3l-16 2l-16 1.5l-16 0.5l-15.5-0.5l-15.5-1l-15-2l-15-3l-17-4l-13.5-4l-15.5-5.5l-15-6l-14-7l-13.5-7l-12-7.5l-13.5-9l-12.5-9.5l-11-9.5l-11.5-11l-11.5-12l-10.5-12l-9.5-13l-8.5-12l-8-13l-7.5-14l-6.5-14l-6.5-15.5l-5.5-15l-4.5-15l-3.5-15.5l-2.5-15.5M1504.5 444.5l6 14.5l5.5 16l4.5 15.5l3.5 15.5l2.5 15.5l2 16l1 15.5l0.5 16.5l-1 16.5l-1.5 16l-2 15l-3.5 16l-4 16.5l-5 15.5l-6 15.5l-6 13.5l-7 13.5l-7.5 14l-9 14l-10 13.5l-11 14l-10.5 11l-10.5 10.5l-11.5 10.5l-12.5 10l-13 9.5l-13.5 8.5l-14.5 8.5l-14.5 7.5l-15.5 6.5l-15.5 5.5l-13 4l-16 4.5l-16 3.5l-16.5 2l-16.5 1.5l-16 0.5l-16 0l-16-1l-15.5-2l-15-2.5l-17-4l-14-4l-16-5.5l-15.5-6.5l-14.5-6.5l-13.5-7.5l-12.5-7.5l-13.5-9.5l-12.5-9.5l-13.5-11l-11.5-11l-11.5-12.5l-10.5-12l-10-13l-8.5-12.5l-7.5-13l-8-14.5l-6.5-14l-6.5-15.5l-5-15l-5-15.5l-3.5-15.5l-2.5-16M1512 440l6.5 15.5l5.5 15l4.5 16l4 16l2.5 15.5l2.5 16.5l1 16l0.5 17l-0.5 17l-1.5 16l-2.5 15.5l-3 16.5l-4.5 17l-4.5 15.5l-6 15.5l-6 14l-7 14l-8 14.5l-9.5 14l-10 14.5l-11.5 14l-10 11l-11 11l-12 11l-12.5 10l-13.5 9.5l-14 9l-14.5 8.5l-15 7.5l-15.5 7l-16 5.5l-13 4l-16.5 4.5l-16.5 3.5l-17 2.5l-16.5 1l-16.5 1l-16.5-0.5l-16-1l-15.5-2l-15.5-3l-17.5-4l-14-4l-16.5-6l-15.5-6.5l-14.5-6.5l-13.5-7.5l-13-8l-14-9.5l-12.5-9.5l-13-11.5l-12-11l-11.5-12.5l-10.5-12.5l-10-13l-8.5-13l-8.5-14l-8-14.5l-6.5-14l-6-15.5l-5.5-15.5l-4.5-15.5l-3.5-15.5l-3-16M1520 436l6.5 15l5.5 15.5l5 16.5l4 16l3 16l2.5 17l1.5 16l0.5 17.5l-0.5 15.5l-1.5 16.5l-2 16l-3 16.5l-4 17l-5 16l-5.5 16l-6 14.5l-7 14.5l-8 14.5l-9.5 14.5l-10 14.5l-11.5 14l-10 12l-11.5 11.5l-12 11l-12.5 10.5l-13.5 9.5l-14 9.5l-15 8.5l-15 8l-16 7l-16 6.5l-13.5 4l-17 4.5l-16.5 3.5l-17 2.5l-17 2l-17 0.5l-17-0.5l-16-1l-16-2l-16-2.5l-18-4l-14.5-4l-16.5-6l-16-6.5l-15-7l-14-7.5l-13-8l-14-9.5l-13-10l-13.5-11.5l-12-11.5l-12-12.5l-10.5-12.5l-10.5-13.5l-8.5-13l-9-14.5l-7.5-14.5l-7-14.5l-6.5-16l-5.5-16l-4.5-16l-3.5-16l-3-16M1528.5 432.5l7 15.5l5.5 16l5.5 16.5l4 16.5l3 16.5l2.5 16l1.5 16.5l0.5 18l-0.5 17.5l-1.5 17l-2 16.5l-3 17l-4 15.5l-4.5 16l-6 17l-6 14.5l-7.5 14.5l-8 15l-9.5 15l-10 15l-12 14.5l-10.5 12l-11.5 11.5l-12 11l-13 11l-14 10l-14.5 9.5l-15 9l-15.5 8l-16.5 7l-16.5 6l-13.5 4.5l-13.5 3.5l-17.5 4l-17 2.5l-17.5 2l-17.5 1l-17-0.5l-16.5-1l-16.5-1.5l-16-3l-18.5-4l-14.5-4l-17-6l-16.5-6.5l-15-7l-14.5-8l-15.5-9l-14.5-10l-13-10l-13.5-11.5l-12-12l-12.5-13l-10.5-12.5l-10-13.5l-9-13l-9-15l-7.5-15l-7-14.5l-6.5-16l-5.5-16.5l-4.5-15.5l-3.5-16.5l-3-16.5M1537.5 429l7 16l6 16l5 16.5l4.5 17l3.5 17l2.5 16l1.5 17l0.5 18l-0.5 18.5l-1 17.5l-2.5 16.5l-3 17.5l-4 16l-5 16.5l-6 17l-6 15l-7.5 15l-8.5 15l-9.5 15.5l-8.5 12.5l-12 15l-10.5 12.5l-11.5 12l-12.5 11.5l-13 11l-14 10.5l-14.5 9.5l-15.5 9l-16 8.5l-16.5 7.5l-17 6.5l-13.5 4l-14 4l-17.5 4l-18 3l-17.5 2l-17.5 0.5l-17.5 0l-17-1l-16.5-1.5l-16.5-2.5l-19-4.5l-15-4l-17.5-6l-16.5-6.5l-15.5-7.5l-14.5-7.5l-16-9.5l-14.5-10l-13.5-10.5l-14-11.5l-12.5-12l-12-13l-11-13l-10.5-14l-9-13.5l-9-15l-8-15l-7-15l-6.5-16l-5.5-16.5l-4.5-16.5l-4-17l-3-17M1547 425.5l6.5 16l6.5 16.5l5.5 16.5l4.5 17.5l3.5 17.5l2.5 16.5l1.5 17l0.5 19l0 18.5l-1.5 18l-2 17l-3.5 17.5l-4 16.5l-5 17l-6 17.5l-6.5 15l-7.5 15.5l-8.5 16l-10 15.5l-9 13l-12 15l-11 12.5l-11.5 12.5l-13 11.5l-13.5 11l-14 11l-15 10l-16 9l-16 8.5l-17 7l-17.5 6.5l-14 4.5l-14 4l-18 4l-18 3l-18 1.5l-18 1l-17.5-0.5l-17.5-1l-17-2l-16.5-2.5l-19-4.5l-15.5-4.5l-17.5-6l-17-6.5l-15.5-7.5l-15-8l-16-10l-14.5-10l-13.5-10.5l-14-12l-12.5-12l-12.5-13.5l-11-13l-10.5-14l-9-13.5l-9-15.5l-8-15l-7.5-16l-6.5-16.5l-5.5-16.5l-4.5-16.5l-3.5-17l-3-17M1556.5 422.5l7 16.5l6.5 16.5l5.5 17l4.5 17.5l3.5 17.5l2.5 17.5l2 17.5l0.5 19l0 17l-1.5 18.5l-2 17l-3 18l-4 17l-5 17l-6.5 18l-6 15.5l-7.5 15.5l-9 16l-9.5 16l-9.5 13.5l-12 15.5l-11 13l-12 12l-13 12l-13.5 11.5l-14.5 11l-15.5 10.5l-15.5 9l-17 9l-17 7.5l-17.5 6.5l-14.5 5l-14.5 4l-18 4l-18.5 3l-18 1.5l-18.5 1l-18 0l-17.5-1l-17.5-2l-17-3l-19.5-4l-15.5-4.5l-18-6l-17-7l-16-7.5l-15-8l-16.5-10l-15-10.5l-13.5-10.5l-14.5-12.5l-12.5-12l-13-14l-11-13l-11-14.5l-9-13.5l-9-15.5l-8.5-15.5l-7.5-16.5l-6.5-16.5l-5.5-17l-5-17l-3.5-17.5l-3-17.5M1566.5 420l7.5 17l6.5 17l5.5 17.5l4.5 17l3.5 18l2.5 17.5l2 18l0.5 18l0 17l-1 18.5l-2 17.5l-3.5 18.5l-3.5 17l-5 17.5l-6.5 18l-6.5 16l-7.5 16l-8.5 16.5l-10 16l-9.5 13.5l-12 16l-11.5 13l-12 13l-13 12l-14 12l-14.5 11l-15.5 10.5l-16 9.5l-17 9l-17.5 8l-18 6.5l-14.5 5l-14.5 4l-18.5 4.5l-19 3l-18.5 2l-18.5 1l-18.5 0l-18-1l-17.5-2l-17.5-3l-19.5-4.5l-16-4.5l-18.5-6l-17.5-7l-16-7.5l-15.5-8.5l-16.5-10l-15.5-10.5l-14-11l-14.5-12.5l-13-12l-13-14l-11.5-13.5l-10.5-14.5l-9.5-14l-9.5-16l-8-15.5l-8-17l-6.5-16.5l-6-17.5l-5-18l-3.5-18l-3-17.5M1576.5 418l7.5 16.5l6.5 17.5l6 18l4.5 17l4 19l2.5 18l1.5 18l1 18.5l-0.5 17.5l-1 19l-2 18l-3.5 19l-4 17l-5 18l-6.5 18.5l-7 16.5l-7.5 16l-9 17l-10.5 16.5l-9.5 13.5l-12.5 16.5l-11.5 13l-12.5 13l-13.5 12.5l-14 12l-15 11l-16 10.5l-16.5 10l-17.5 8.5l-17.5 8l-15 5.5l-18.5 6l-15 4l-19 4l-19 3l-19 2l-18.5 1l-18.5-0.5l-18.5-1l-18-2.5l-17-3l-20.5-4.5l-16-4.5l-18.5-6.5l-17.5-7l-16.5-8l-15.5-8.5l-16.5-10.5l-15.5-10.5l-14-11l-15-12.5l-13-13l-13-14l-11-13.5l-11-15l-9.5-14l-9.5-16l-8-16l-8-16.5l-6.5-17l-6-17.5l-5-18.5l-3.5-18l-3-18M1587 416.5l8 17l6 17l6 18l4.5 18l4 19l3 18.5l1.5 19l1 18.5l-0.5 18l-1.5 19.5l-2 18.5l-3.5 19l-4.5 18l-5 18l-7 19l-7 16.5l-8 17l-9.5 16.5l-10.5 17l-9.5 14l-13 16.5l-12 13.5l-13 13l-13.5 12.5l-15 12l-15.5 11l-16 11l-13.5 7.5l-17.5 9l-18 8l-18.5 7l-15.5 5l-15 4l-19.5 4.5l-19 3l-19.5 2l-19 0.5l-19 0l-18.5-1l-18-2.5l-18-3l-20.5-4.5l-16.5-5l-18.5-6.5l-18-7l-16.5-8l-16-8.5l-17-10.5l-15.5-11l-14.5-11l-15-13l-13-13l-13.5-14l-11.5-14l-11-15l-10.5-16l-9.5-16l-8-16l-8-17l-7-18l-5.5-17.5l-5-18.5l-4-18l-2.5-18M1598 415l8 18l6.5 17.5l6 19l4.5 18.5l3.5 18l3 19l1.5 19l0.5 19l-0.5 18.5l-1.5 20l-2 19l-3.5 17l-4 18l-5.5 18.5l-7 19l-7 17l-8 17l-9.5 17l-10.5 17l-10 14.5l-13.5 16.5l-12 13.5l-13 13.5l-14 12.5l-15 12.5l-15.5 11.5l-16.5 10.5l-13.5 8l-18 9.5l-18.5 8l-18.5 7l-15.5 5l-15.5 4.5l-19.5 4l-19.5 3l-19.5 2l-19.5 1l-19.5 0l-19-1.5l-18-2l-18-3l-21-4.5l-16.5-5l-19.5-6.5l-18-7.5l-17-8l-16-9l-17.5-10.5l-16-11l-14.5-11.5l-15-13l-13.5-13l-13.5-14.5l-11.5-14l-11.5-15.5l-10.5-16l-9.5-16.5l-8.5-16l-8-17.5l-7-18.5l-6-17.5l-5-18.5l-4-19l-2.5-18.5M1609 414.5l8 18l6.5 18.5l6 18.5l4.5 18.5l3.5 19l3 19l1.5 20l0.5 19.5l-0.5 19l-1.5 20l-3 19l-3 18l-4.5 18l-6 19l-7 19.5l-7.5 17l-8.5 17.5l-9.5 17l-11.5 17.5l-10 14.5l-13.5 17l-12.5 13.5l-13.5 13.5l-14.5 13l-15 12l-16 11.5l-17 11l-14 8l-18 9l-19 8l-15 5.5l-19.5 6.5l-16 4l-20 4l-19.5 3l-20 2l-20 0.5l-19.5-0.5l-19-1l-18.5-2.5l-18-3.5l-21-5l-17-5l-19-6.5l-18.5-8l-17-8l-16-9l-17.5-11l-16-11l-14.5-11.5l-15.5-13.5l-13.5-13l-13.5-15l-11.5-14.5l-11.5-15l-10.5-16.5l-9.5-16.5l-8.5-16.5l-8-17.5l-7-18.5l-6-18.5l-5-18.5l-4-19l-2.5-18.5M1620.5 414l7 17.5l7 18.5l5.5 18.5l5 19.5l3.5 18.5l2.5 20l1.5 19.5l0.5 20l-0.5 19l-1.5 21l-3 19l-3 18l-5 18.5l-5.5 19l-7.5 20l-7.5 17l-8.5 17.5l-10 18l-11 17.5l-10.5 14.5l-14 17l-12.5 14l-13.5 13.5l-14.5 13l-15.5 12.5l-16.5 11.5l-17 11l-14 8l-18.5 9.5l-19 8l-15.5 6l-20 6l-16 4l-20 4.5l-20 3l-20.5 1.5l-20 1l-19.5-0.5l-19.5-1.5l-19-2.5l-18-3l-21.5-5l-17-5l-19.5-7l-18.5-8l-17.5-8l-16.5-9l-17.5-11l-16-11.5l-15-12l-15.5-13.5l-13.5-13.5l-14-15l-12-14.5l-11.5-15.5l-10.5-16.5l-10-16.5l-9-18l-8-17.5l-7-19l-6-18.5l-5-19l-4-19l-3-19M1631.5 414.5l7.5 18l7 19l5.5 19.5l4.5 19.5l3.5 19.5l2.5 20.5l1.5 18.5l0.5 20l-1 20l-2 21l-3 19.5l-3.5 18l-5 19l-6 19.5l-7.5 20l-8 17.5l-9 18l-10 17.5l-12 18l-10.5 14.5l-14.5 17.5l-13 14l-14 13.5l-15 13l-15.5 12.5l-17 11.5l-17.5 11l-14.5 8l-18.5 9l-19.5 8l-15.5 5.5l-20 6.5l-16.5 4l-20.5 4l-20.5 2.5l-20 1.5l-20.5 0.5l-20-0.5l-19.5-1.5l-19-2.5l-18.5-3.5l-21.5-5.5l-17-5l-19.5-7.5l-18.5-7.5l-17.5-9l-16.5-9l-18-11.5l-16-11.5l-15-12l-15.5-13.5l-13.5-13.5l-14-15.5l-12-14.5l-11.5-16l-10.5-16.5l-10-16.5l-9-18.5l-8-17.5l-7-19l-6-19l-5-19l-4-19l-3-20M1643 415.5l7.5 18.5l6.5 18.5l5.5 20l4.5 19l3.5 19.5l2.5 20.5l1 19l0.5 20.5l-1 19.5l-2 21.5l-3 20l-4 18.5l-5 19l-6 19.5l-8 20.5l-8 17.5l-9 18l-10.5 18l-12 17.5l-11 15l-14.5 17.5l-13 14l-14 14l-15 13l-16 12.5l-17 11.5l-18 11l-14.5 8l-19 9.5l-19.5 8l-16 6l-20.5 6l-16 4l-21 4l-20.5 3l-20.5 1.5l-20.5 0.5l-20.5-0.5l-19.5-1.5l-19.5-3l-18.5-3.5l-22-5.5l-17.5-5l-19.5-7.5l-19-8l-17.5-8.5l-17-9.5l-18-11.5l-16.5-11.5l-15-12l-15.5-14l-14-14l-14-15l-12-15l-11.5-16l-11-17l-10-17l-9.5-18.5l-8-18l-7-19l-6.5-19.5l-5-19.5l-4-20l-3-20M1654.5 417l7 18l6.5 19.5l5.5 20l4.5 19.5l3 20l2.5 21l1 19l0 21l-1 20.5l-2.5 21.5l-3 20l-4.5 19l-5 19l-6.5 20l-7 17.5l-8 18l-9.5 18l-10.5 18l-12 18l-11.5 15l-14.5 17.5l-13.5 14.5l-14 13.5l-15.5 13.5l-16 12.5l-17.5 12l-17.5 11l-15 8l-19.5 9.5l-19.5 8l-16 6l-20.5 6l-17 4l-20.5 4l-21 3l-21 1.5l-20.5 0.5l-20.5-0.5l-20-1.5l-19.5-3l-19-3.5l-22-5.5l-17.5-5l-20-7.5l-19-8l-18-9l-17-9.5l-18-11.5l-17-11.5l-15.5-12.5l-15.5-14l-14.5-14l-14-15.5l-12-15l-13-18l-11-17l-10-17l-9.5-18.5l-8-18.5l-7-19l-6.5-19.5l-5-20l-4-20l-3-20.5M1666 419l7 19l6.5 19.5l5.5 21l4 20l3 21l2 19.5l0.5 19.5l0 21.5l-1.5 20.5l-2.5 22l-3.5 20.5l-4.5 19l-5.5 19.5l-7 20l-7.5 18l-8.5 18l-9.5 18l-11 18l-12.5 18.5l-11.5 15l-12.5 14.5l-13.5 14.5l-14.5 14l-15.5 13l-16.5 12.5l-17 12l-18.5 11l-18.5 10.5l-19.5 9l-20 8l-16.5 5.5l-21 6l-16.5 4l-21.5 4l-21 2.5l-21 1.5l-21 0l-20.5-0.5l-20-2l-19.5-3l-19-3.5l-22-6l-18-5.5l-20-7.5l-19-8.5l-18-9l-17-9.5l-18-11.5l-17-12l-15-12.5l-16-14l-14-14.5l-14.5-15.5l-12-15.5l-13-18l-11-17l-10-17.5l-9.5-18.5l-8.5-19.5l-7-19l-6-19.5l-5-20l-4-20l-3-20.5M1677 422l7.5 19l5.5 19.5l5 20l4 20l3 21l2 20l0.5 20l-0.5 21l-1.5 21l-2.5 22l-4 21l-4.5 19l-6 19.5l-7 20.5l-7.5 18l-8.5 18l-10 18l-11 18.5l-12.5 18l-12 15l-15 18l-14 14l-15 14l-15.5 13.5l-17 12.5l-17.5 11.5l-18.5 11l-15.5 8l-19.5 9.5l-20 8l-16.5 5.5l-21 6l-21.5 4.5l-21 4l-21.5 2l-21 1.5l-21 0l-21-1l-20-2l-19.5-3l-19.5-4l-22-6l-17.5-6l-20.5-7.5l-19-8.5l-18-9.5l-17-9.5l-18-12l-17-12l-15-12.5l-16-14.5l-14-14.5l-14.5-15.5l-12-15.5l-13-18l-11-17.5l-10-17.5l-9.5-19l-8.5-19.5l-7-19.5l-6-19.5l-5-20l-4-20l-3-21M1688.5 425l6.5 19l6 19.5l4.5 20.5l4 20.5l2.5 21.5l1.5 20.5l0.5 20l-0.5 21.5l-2 21.5l-3 22l-4 21.5l-5 19l-6.5 20l-7.5 20.5l-7.5 18l-9 18l-10.5 18.5l-11.5 18.5l-13 18l-12 15l-13 15l-14 14l-15 14l-16 13.5l-17 12.5l-17.5 11.5l-19 11l-19 10l-20 9l-20.5 8l-16.5 5.5l-21.5 5.5l-21.5 5l-21.5 3l-21 2.5l-21.5 1l-21-0.5l-21-1l-20-2.5l-20-3l-19-4.5l-22.5-6l-17.5-6l-20.5-8l-19-8.5l-18-9.5l-17-10l-18-12l-17-12.5l-15-12.5l-16-14.5l-14-14.5l-14-16l-12.5-15.5l-13-18l-11-17.5l-10-17.5l-9.5-19l-8-20l-7.5-19.5l-6-19.5l-5-20.5l-4-20.5l-3-21M1699.5 429l6.5 19.5l5.5 20l4.5 21l3.5 21.5l2.5 20l1 20.5l0.5 20.5l-1 22l-2.5 21.5l-3.5 22.5l-4.5 21.5l-5 19.5l-6.5 20l-8 20.5l-8.5 18l-9 18.5l-11 18.5l-12 18l-13.5 18.5l-12 15l-13.5 14.5l-14.5 14.5l-15 13.5l-16.5 13.5l-17 12.5l-18.5 11.5l-18.5 11l-19.5 9.5l-20.5 9l-20.5 7.5l-17 5.5l-21.5 5.5l-21.5 4l-21.5 3.5l-21.5 1.5l-21.5 1l-21.5-0.5l-20.5-1.5l-20.5-2.5l-20-3.5l-19-4.5l-22-6l-18-6l-20-8.5l-19.5-8.5l-18-10l-17-10l-18-12l-17-12.5l-15-13l-16-14.5l-14-14.5l-14-16l-12.5-16l-13-18l-11-17.5l-10-18l-9-19l-8.5-20l-7.5-19.5l-6-20.5l-5-20.5l-4-20.5l-3-21M1710 433l6.5 20.5l5.5 20.5l4 20.5l3 21.5l2 20.5l1 21l0 20.5l-1.5 22.5l-2.5 21.5l-3 20.5l-5 21l-5.5 19.5l-6.5 20l-8.5 21l-8 18l-9.5 18.5l-11 18l-12 18.5l-13.5 18.5l-12.5 15l-13.5 14.5l-14.5 14.5l-15.5 13.5l-16.5 13l-17.5 12.5l-18 12l-19 10.5l-19.5 10l-20.5 8.5l-21 8l-16.5 5l-21.5 5.5l-22 4.5l-21.5 3l-22 2l-21.5 1l-21.5-0.5l-20.5-1.5l-20.5-2.5l-20-3.5l-19.5-4.5l-22.5-6l-18-6.5l-20.5-8l-19-9l-18.5-9.5l-17-10l-18.5-12.5l-17-12.5l-17.5-15l-16-14.5l-14-14.5l-14-16.5l-12.5-15.5l-13-18.5l-11-17.5l-9.5-18l-9.5-19.5l-8.5-20l-7.5-19.5l-6-21l-5-20l-4-21l-3-21.5M1720.5 438l6 20.5l5 20.5l4 20.5l3 21.5l1.5 21l1 21.5l-0.5 20.5l-2 23l-2.5 21.5l-4 20.5l-5 21.5l-6 20l-7 20l-8.5 21l-8.5 18l-10 18l-11.5 18.5l-12.5 18.5l-14 18l-12.5 15l-14 14.5l-14.5 14.5l-16 13.5l-16.5 13l-17.5 12.5l-18.5 11.5l-19.5 10.5l-20 9.5l-20.5 8.5l-21 7.5l-17 5l-21.5 5.5l-22 4l-21.5 3l-22 1.5l-21.5 0.5l-21.5-0.5l-21-1.5l-20.5-3l-20-3.5l-19.5-4.5l-22.5-6.5l-18-6.5l-20.5-8l-19-9l-18.5-10l-19.5-12l-18.5-12.5l-16.5-13l-17.5-14.5l-15.5-15l-14-14.5l-14-16.5l-12-16l-13-18.5l-10.5-17.5l-10-18l-9-19l-8.5-20l-7-19.5l-6.5-21l-4.5-20.5l-4-20.5l-3-21.5M1730.5 443l6 21.5l4.5 20.5l3.5 21l2.5 21l1.5 21l0.5 21.5l-1 21l-2 23l-3 22l-4 20.5l-6 22l-6 19.5l-7.5 20.5l-9 20.5l-9 18.5l-10 18l-11.5 18.5l-11 15.5l-14 18l-13 15l-16.5 17l-15 14l-16 13.5l-17 13l-18 12l-18.5 11.5l-19.5 10.5l-20 9l-21 8.5l-21 7.5l-17.5 4.5l-21.5 5.5l-22 3.5l-22 3l-22 1.5l-21.5 0l-21.5-0.5l-21-2l-20.5-3l-20-3.5l-19.5-5l-22.5-6.5l-17.5-6.5l-20.5-8.5l-19.5-9l-18-10l-20-12l-18-13l-17-12.5l-17.5-15l-15.5-15l-14-15l-13.5-16.5l-12.5-16l-12.5-18.5l-11-17.5l-10.5-19.5l-9-19l-8.5-20l-7-20l-6-20.5l-5-20.5l-4-21l-2.5-21M1740 449l6 22l4 21l3.5 21.5l2 21l1 21.5l0 22l-1 21.5l-2.5 21l-3.5 22l-4.5 21l-6 21.5l-6.5 20l-8 20l-9 21l-9.5 18l-10.5 18.5l-12 18.5l-11 15l-14.5 18l-13 15l-17 17l-15.5 14l-16.5 13.5l-17 12.5l-18 12l-19 11l-19.5 10l-20.5 9.5l-20.5 8l-21.5 7l-17.5 4.5l-21.5 5l-22 3.5l-22 2.5l-22 1.5l-22 0l-21.5-1l-21-2l-20.5-3l-20-4l-19.5-5l-22.5-7l-17.5-6.5l-20.5-8.5l-19.5-9l-18-10l-20-12.5l-18-12.5l-16.5-13l-17.5-15.5l-15.5-15l-14-15l-14-16.5l-12-15.5l-13-19l-10.5-17.5l-11-20l-9-19l-8-20l-7-20l-6.5-21l-5-20l-3.5-21.5l-3-21.5M1749.5 455l5 20l4 21.5l3 21.5l2 21l0.5 22l-0.5 21.5l-1 21.5l-2.5 21l-4 22l-4.5 21l-6.5 21.5l-6.5 20l-8 20l-9.5 21l-9.5 18l-10.5 18l-12 18.5l-13.5 18l-15 18l-13 14.5l-17.5 17l-15.5 14l-16.5 13l-17.5 12.5l-18.5 12l-19 10.5l-20 10l-20 9l-21 8l-21.5 6.5l-17.5 4.5l-22 5l-17.5 2.5l-22 3l-22 1l-22 0.5l-21.5-1l-21-2l-21-3l-24-5l-19.5-5l-22-7l-18-6.5l-20.5-9l-19-9.5l-18.5-10l-19.5-12.5l-18.5-12.5l-16.5-13.5l-17.5-15l-15.5-15l-14-15l-14-16.5l-12-16l-12.5-19l-11-18l-10.5-19.5l-9.5-19.5l-8-20l-7-20l-6.5-21l-5-21.5l-4-21l-2.5-21.5M1758 461l5 21l3.5 21.5l2.5 20.5l1.5 21.5l0.5 22l-0.5 22l-2 21.5l-2.5 21l-4.5 22.5l-5 20.5l-6.5 22l-7 19.5l-8.5 20.5l-9.5 20.5l-10 18l-11 18l-12.5 18.5l-13.5 18l-15 17.5l-14 14.5l-17.5 17l-15.5 13.5l-17 13l-17.5 12.5l-18.5 11.5l-19 10.5l-20 10l-20.5 8.5l-21.5 7.5l-21.5 6.5l-17 4.5l-22 4.5l-18 2.5l-22 2.5l-22 1l-22 0l-21.5-1l-21-2l-20.5-3l-24.5-5.5l-19-5l-22.5-7l-18-7l-20-8.5l-19.5-9.5l-18-10.5l-20-12.5l-18-12.5l-16.5-13.5l-17.5-15l-15.5-15.5l-14-15l-14-16.5l-13.5-18l-12.5-19l-10.5-17.5l-10.5-20l-9-19l-8.5-20l-7-20l-6-21l-5-21.5l-4-21l-2.5-21.5M1766.5 468l4.5 21l3.5 22l2 21l1 22l0 22l-1 22.5l-2.5 22l-3 21l-4.5 20l-5 21l-7 21.5l-7.5 20l-8.5 20l-10.5 20.5l-10 18l-11 18l-13 18l-14 18l-15 17.5l-14 14.5l-18 16.5l-16 13.5l-17 13l-17.5 12l-19 11l-19 10.5l-20 9.5l-21 8.5l-21 7.5l-21.5 6.5l-17.5 4l-22 4.5l-22 3l-22.5 2l-22 0.5l-21.5-0.5l-21.5-1l-21-2.5l-20.5-3.5l-20-4.5l-19.5-5.5l-22.5-7l-21-8.5l-20-9l-19.5-9.5l-17.5-10.5l-19.5-12.5l-18-13l-16.5-13.5l-17-15.5l-15.5-15l-14-15l-13.5-17l-13.5-18l-12.5-18.5l-10.5-18l-10-19.5l-9-19.5l-8-20l-7-20l-6-21l-5-21l-4-21l-2.5-21.5M1774.5 474.5l4 22l3 22.5l1.5 21l1 22l-0.5 21l-1.5 22.5l-2.5 22l-3.5 21l-4.5 20l-6 21l-7 21.5l-8 20l-9 20l-10.5 20.5l-10 18l-12 18l-12.5 17.5l-14.5 18l-15.5 17.5l-14 14l-18.5 16.5l-16 13l-17 13l-18 11.5l-18.5 11l-19.5 10.5l-20.5 9.5l-20.5 8l-21.5 7.5l-17 5l-22 5l-22 4l-22 3l-22 1.5l-22 1l-22-1l-21.5-1.5l-21-2.5l-20.5-3.5l-20-4.5l-19-5.5l-22.5-7.5l-21.5-8l-20-9.5l-19-9.5l-18-10.5l-19.5-12.5l-17.5-13.5l-16.5-13l-17.5-15.5l-15-15.5l-14-15l-14-17l-13-18l-12.5-18.5l-10.5-18l-10.5-20l-9-19.5l-8-20l-7-20l-6-21l-5-21.5l-4-21.5l-2.5-21.5M1781.5 482l4 22l2.5 21.5l1.5 21l0.5 22.5l-1 20.5l-1.5 23l-3 22l-4 21l-5 20l-6 21l-7.5 21.5l-8 19.5l-9.5 20.5l-11 20.5l-10.5 17.5l-12 17.5l-13 18l-14.5 17.5l-16 17.5l-14 14l-18.5 16l-16 13l-17.5 12.5l-18 11.5l-19 11l-19.5 10l-20 9l-21 8l-21 7l-17.5 5l-22 5l-22 4l-22 2.5l-22 2l-22 0l-22-0.5l-21-1.5l-21-3l-20.5-3.5l-24-6l-19-5.5l-22.5-7.5l-17.5-7l-20-9.5l-19-9.5l-18-10.5l-19.5-13l-18-13l-16.5-13.5l-17-15.5l-15.5-15.5l-13.5-15l-14-17l-13-18l-12.5-19l-11-18l-10-19.5l-9-19.5l-8.5-20.5l-7-21l-6-21l-5-21.5l-4-21.5l-2.5-21.5M1788.5 489l3.5 21l2 22l1 21.5l0 22l-1 21l-2 22.5l-3.5 22.5l-4 21l-5 20l-6.5 21l-8 21.5l-8.5 19.5l-9.5 20l-11 20l-11 18l-12 17.5l-13.5 17.5l-14.5 17.5l-16 17l-14.5 13.5l-18.5 16.5l-16.5 12.5l-17.5 12.5l-18 11.5l-19 10.5l-19.5 10l-20.5 8.5l-21 8l-21 7l-17.5 4.5l-21.5 5l-22.5 3.5l-22 2.5l-22 1.5l-22 0.5l-21.5-1l-21.5-1.5l-21-3l-20.5-4l-23.5-5.5l-19.5-5.5l-22-8l-21-8.5l-20-9.5l-18.5-10l-18-10.5l-19-13l-17.5-13l-16.5-13.5l-17-15.5l-15-15.5l-14-15.5l-13.5-16.5l-13-18l-12.5-19l-10.5-18l-10-20l-9-19.5l-8-20l-7.5-21l-5.5-21l-5-21.5l-4-21.5l-3-21.5M1795 496.5l3 21.5l2 22l0.5 21.5l-0.5 21l-1 20.5l-2.5 23l-4 22l-4.5 21.5l-5.5 19.5l-6.5 21l-8.5 21.5l-8.5 19.5l-10 20l-11 20l-11.5 17.5l-12 17.5l-13.5 17l-15 17.5l-16.5 17l-14.5 13.5l-18.5 15.5l-16.5 13l-17.5 12l-18.5 11l-19 10.5l-19.5 9.5l-20.5 9l-20.5 7.5l-21.5 7l-17.5 4.5l-21.5 4.5l-22 3.5l-22.5 2.5l-22 1.5l-21.5 0l-22-1l-21-2l-21-3l-20.5-3.5l-24-6l-19-5.5l-22-8l-21-8.5l-20-9.5l-18.5-10l-17.5-11l-19.5-12.5l-17.5-13.5l-16.5-13.5l-17-15.5l-15-15.5l-15.5-17.5l-13.5-16.5l-13-18l-12-19l-10.5-18l-10-19.5l-9-19.5l-8-20.5l-7-21l-6-21l-4.5-21l-4-21.5l-3-21.5M1801 503.5l2.5 22l1.5 22l0.5 22.5l-1 21l-1.5 21l-3 22.5l-4.5 22.5l-5 21.5l-6 20l-7 20.5l-8.5 21.5l-9 19.5l-10.5 19.5l-10 17.5l-13.5 20l-12.5 17.5l-14 17l-15.5 17l-16.5 16.5l-15 13.5l-19 15.5l-17 12l-17.5 12l-18.5 11l-19 10l-20 9l-20.5 8.5l-21 7.5l-21 6l-17.5 4.5l-22 4l-22 3.5l-22 2l-22 1l-22-0.5l-21.5-1l-21-2l-21-3.5l-20-4l-23.5-6l-19-6l-22-8l-20.5-9l-20-9.5l-18.5-10l-17.5-11l-19-13l-17.5-13.5l-16-13.5l-17-15.5l-15-15.5l-15-17l-13-17l-13-18l-12-19l-10.5-17.5l-10-20l-8.5-19.5l-8-20l-7-21l-6-21l-5-21l-3.5-21.5l-3-21.5M1806.5 511l2 22l1 22.5l0 22.5l-1 21l-2 21.5l-3.5 23l-4 20l-5.5 21l-6 20l-7.5 20.5l-9 21.5l-9.5 19.5l-10.5 19.5l-10.5 17l-13.5 20l-12.5 17l-14.5 17l-15.5 17l-16.5 16l-15 13.5l-19 15l-17 12.5l-17.5 11.5l-18.5 10.5l-19.5 10l-20 9l-20.5 8l-20.5 7.5l-21.5 6l-17.5 4l-21.5 4.5l-22 3l-22 2l-22 0.5l-22 0l-21.5-1.5l-21-2l-21-3.5l-20-4l-23.5-6.5l-19-5.5l-21.5-8l-21-9l-19.5-9.5l-18.5-10.5l-20.5-12.5l-16-11l-17.5-13.5l-16.5-13.5l-16.5-16l-15-15.5l-15.5-17l-13-17l-13-18l-12-19l-10.5-18l-10-19.5l-9-20l-8-20l-7-21l-6-21l-4.5-21.5l-4-21.5l-3-22M1811.5 518.5l2 22.5l0.5 21l-0.5 22.5l-1.5 21l-2.5 21.5l-3.5 22.5l-4.5 20l-5.5 21.5l-6.5 19.5l-7.5 20.5l-9.5 21.5l-9.5 19l-10.5 19.5l-10.5 17l-14 19.5l-13 17l-14 17l-16 16.5l-16.5 16l-15 13l-19.5 15l-17 12l-17.5 11.5l-18.5 10.5l-19.5 10l-19.5 8.5l-20.5 8l-21 7l-21.5 6l-21.5 5l-22 4l-22 2.5l-22 1.5l-21.5 1l-22-1l-21-1.5l-21-2.5l-21-3.5l-20-4.5l-23-6l-19-6l-21.5-8.5l-20.5-9l-19.5-9.5l-18.5-10.5l-20-13l-16-11l-17.5-13.5l-16-13.5l-16.5-15.5l-15-16l-15-17l-13-17l-12.5-18l-12.5-19l-10-17.5l-10-20l-8.5-19.5l-8-20l-7-21.5l-6-20.5l-5-21.5l-3.5-21.5l-3-22M1816 526l1.5 21l0.5 21.5l-1 22l-1.5 21.5l-3 21l-4 23l-4.5 20l-6 21l-6.5 19.5l-8 20.5l-9.5 21l-9.5 19l-11 19.5l-11 16.5l-13.5 19.5l-13.5 17l-14.5 16.5l-15.5 16.5l-17 16l-15 12.5l-19.5 15l-17 11.5l-17.5 11.5l-18.5 10l-19.5 10l-19.5 8.5l-20.5 8l-21 7l-21 5.5l-22 5l-21.5 3.5l-22 2.5l-22 2l-21.5 0l-22-0.5l-21-1.5l-21-2.5l-20.5-3.5l-20-4.5l-23.5-6.5l-18.5-6l-21.5-8.5l-20.5-9l-19.5-9.5l-18.5-10.5l-20-12.5l-18.5-13.5l-17.5-13.5l-15.5-13.5l-16.5-15.5l-15-15.5l-14.5-17.5l-13-16.5l-13-18.5l-12-18.5l-10-18l-10-19.5l-8.5-19.5l-7.5-20.5l-7-21l-6-21l-5-21l-3.5-21.5l-3-22M1820.5 533l1 21.5l0 21.5l-1 22.5l-2.5 21.5l-3 21l-4.5 23l-5 20l-6.5 21l-7 19.5l-8 20.5l-10 21l-10 19l-11.5 19l-11 16.5l-14 19.5l-13.5 16.5l-15 16.5l-16 16l-17 15.5l-15.5 13l-19.5 14.5l-17 11l-18 11l-18.5 10l-19.5 9.5l-20 8.5l-20.5 7.5l-21 6.5l-21 5.5l-22 4.5l-21.5 3l-22 2.5l-21.5 1.5l-22 0l-21.5-1l-21-2l-21-2.5l-20.5-4l-20-4.5l-23-6.5l-18.5-6.5l-21.5-8l-20-9.5l-19.5-9.5l-18-10.5l-20-13l-18.5-13l-17-13.5l-15.5-14l-16-15.5l-15-15.5l-14.5-17.5l-13-16.5l-12.5-18l-12-19l-10-18l-9.5-19.5l-8.5-19.5l-8-20l-7-21l-5.5-21l-5-21l-3.5-21.5l-3-22M1824 540.5l1 21.5l-0.5 21.5l-1.5 21l-2 21l-3.5 21.5l-4.5 20.5l-5.5 22l-7 21l-7 19.5l-8.5 20l-10 21l-10 18.5l-12 19l-11 16.5l-14.5 19.5l-13.5 16l-14.5 16.5l-16.5 15.5l-17 15.5l-15.5 12.5l-19.5 14.5l-17 11l-18 11l-18.5 10l-19.5 9l-20 8l-20.5 7.5l-20.5 6.5l-21.5 5.5l-21.5 4.5l-21.5 3l-22 2.5l-21.5 1l-22 0l-21-1l-21.5-1.5l-20.5-3l-20.5-4l-20-4.5l-23-6.5l-18.5-6.5l-21.5-8l-20-9.5l-19.5-9.5l-18-10.5l-20-13l-18.5-13l-17-13.5l-15.5-14l-16.5-15.5l-14.5-15.5l-15-17.5l-13-16.5l-12.5-18l-11.5-19l-11-19.5l-10-19.5l-8.5-19.5l-7.5-20l-7-21l-5.5-21l-5-21l-3.5-22l-3-21.5M1827.5 547.5l0.5 21.5l-1 22l-1.5 21l-2.5 21l-4 21.5l-4.5 20.5l-6.5 22l-6.5 21l-8 19.5l-8.5 20l-10.5 21l-10.5 18.5l-12 19l-11.5 16l-14.5 19l-14 16l-15 16l-16.5 15.5l-17.5 15.5l-15.5 12l-19.5 14l-17.5 11l-18 10.5l-19 9.5l-19 9l-20 8l-20.5 7l-21 6l-21.5 5l-21.5 4.5l-21.5 3l-21.5 1.5l-22 1l-21.5 0l-21-1l-21-2l-21-3.5l-20-3.5l-19.5-5l-23-6.5l-18.5-6.5l-21-8.5l-20.5-9.5l-19-10l-18-10.5l-19.5-12.5l-18.5-13.5l-17-13.5l-15.5-13.5l-16-16l-14.5-15.5l-14.5-17l-13-17l-12.5-18l-11.5-19l-11-19.5l-9.5-19.5l-8.5-19.5l-7.5-20l-7-21l-5.5-20.5l-5-21.5l-3.5-21.5l-3-21.5M1830.5 554l0 22l-1 22l-2 21l-3 21.5l-4 21.5l-5 20.5l-6 20l-7 20.5l-8 19.5l-9 20l-10.5 20.5l-10.5 18l-12 19l-11.5 16l-15 18.5l-14 16l-15 16l-16.5 15.5l-17.5 15l-15.5 12l-19.5 13.5l-17.5 11l-18 10.5l-18.5 9.5l-19.5 8.5l-20 8l-20.5 7l-20.5 6l-21.5 5l-21 4l-22 3l-21.5 1.5l-21.5 1l-21.5 0l-21-1l-21-2.5l-21-3l-24-4.5l-19.5-5l-22.5-7l-18.5-6.5l-21-8.5l-20-9.5l-19-10l-17.5-10.5l-19.5-13l-18.5-13.5l-16.5-13.5l-15.5-13.5l-16-16l-14.5-15.5l-14.5-17l-12.5-17l-12.5-18l-11.5-19l-11-19l-9.5-19.5l-8.5-19.5l-7.5-20l-6.5-21l-6-20.5l-4.5-21.5l-3.5-21.5l-3-21.5M1833.5 561l-0.5 22l-1.5 22l-2 21l-3.5 21.5l-4.5 21.5l-5.5 20.5l-6 20l-7.5 20.5l-8 19.5l-9.5 19.5l-11 20.5l-11 18.5l-12 18.5l-12 15.5l-15 19l-14 15.5l-15.5 15.5l-16.5 15.5l-18 14.5l-15.5 11.5l-20 13.5l-17.5 11l-18 10l-18.5 9l-19.5 8.5l-20 7.5l-20.5 6.5l-21 6l-21 4.5l-21.5 4l-21.5 2.5l-21.5 2l-21.5 0.5l-21.5-0.5l-21-1l-21-2.5l-20.5-3.5l-23.5-5l-19.5-5l-22.5-7l-18.5-6.5l-20.5-9l-20-9.5l-18.5-10l-18-10.5l-19.5-13l-17.5-13.5l-17-13.5l-15-13.5l-16-16l-14-15.5l-14.5-17l-12.5-17l-12.5-18l-11.5-18.5l-10.5-19.5l-9.5-19.5l-8.5-19l-7.5-20l-6.5-21l-6-21l-4.5-21l-3.5-21.5l-3-22M1836 567.5l-0.5 20.5l-2 22l-2.5 21l-3.5 21.5l-4.5 21l-6 21l-6 19.5l-8 20.5l-8 19l-9.5 20l-11 20l-11 18l-12.5 18.5l-11.5 15.5l-15.5 18.5l-14 15.5l-15.5 15.5l-16.5 15l-18 14.5l-15.5 11.5l-20 13.5l-17 10.5l-18 9.5l-19 9.5l-23 9.5l-20 7.5l-20.5 6.5l-21 5.5l-21 4.5l-21.5 3.5l-21.5 2.5l-21.5 1.5l-21 0l-21.5-0.5l-21-1.5l-20.5-2.5l-20.5-3.5l-24-5l-19-5l-22.5-7.5l-18-6.5l-20.5-9l-20-9.5l-18.5-10l-17.5-11l-19-13l-18-13l-16.5-14l-15-13.5l-15.5-15.5l-14.5-15.5l-14-17.5l-12.5-16.5l-12.5-18l-11.5-19l-10.5-19l-9.5-19.5l-8.5-20.5l-7.5-20l-6.5-20.5l-5.5-21l-4.5-20.5l-4-21.5l-2.5-21.5M1838 574l-1 20.5l-2 22l-2.5 21.5l-4 21l-5 21.5l-6 20.5l-6.5 19.5l-8 20.5l-8.5 19l-10 19.5l-11 20l-11.5 18l-12.5 18l-12 16l-15.5 18l-14.5 15.5l-15.5 15l-17 14.5l-17.5 14.5l-16 11.5l-20 13l-17.5 10l-18 9.5l-19 9l-19 8l-20 7.5l-20.5 6l-20.5 5.5l-21 4.5l-21.5 3.5l-21.5 2.5l-21.5 1.5l-21 0.5l-21.5-0.5l-21-2l-20.5-2.5l-20.5-3l-23.5-5.5l-19.5-5l-22-7l-18-7l-20.5-8.5l-20-9.5l-18.5-10l-17.5-11l-19.5-13l-17.5-13l-16.5-13.5l-15.5-14l-15.5-15.5l-14.5-15.5l-14-17.5l-13-16.5l-12-18l-11.5-19l-11-19.5l-9.5-19.5l-9-20.5l-7-20l-7-21l-5.5-20.5l-4.5-21.5l-4-21.5l-2.5-21.5M1840 580l-1 21l-2.5 22l-3 21l-4.5 21.5l-5 21l-6.5 20.5l-7 20l-8 20l-9 19l-10 19.5l-10 17.5l-11.5 18l-12.5 17.5l-12 15.5l-15.5 18l-14.5 15l-15.5 15l-16.5 15l-18 14l-16 11l-19.5 13l-17.5 10l-18 9.5l-19 9l-23 9.5l-20 7l-20.5 6l-20.5 5l-21 4.5l-21.5 3l-21 2.5l-21.5 1l-21 0.5l-21.5-1l-20.5-1.5l-20.5-3l-20.5-3.5l-23.5-5l-19-5.5l-22.5-7l-21-8.5l-20.5-9l-19.5-9.5l-18-10.5l-17.5-10.5l-19-13l-17.5-13.5l-16-13.5l-15-14l-15.5-15.5l-14-15.5l-14-17l-12-17l-12-17.5l-11.5-19l-10.5-19l-9.5-19.5l-8.5-20.5l-7-20l-7-20.5l-5-20.5l-5-21l-3.5-21l-2.5-21.5M1841.5 586l-1.5 21l-2 20.5l-3.5 21l-4.5 21.5l-5.5 21l-6.5 20l-7 19.5l-8 20.5l-9 18.5l-10 19.5l-12 19.5l-11.5 17.5l-13 18l-12 15l-16 18l-14.5 15l-15.5 14.5l-17 14.5l-18 14l-16 11l-20 12.5l-17.5 10l-18 9.5l-18.5 8.5l-23.5 9l-20 7l-20 5.5l-21 5l-21 4l-21 3l-21 2l-21.5 1l-21 0l-21-0.5l-21-2l-20.5-3l-20-3.5l-23.5-5.5l-19-5.5l-22-7l-21-8.5l-20-9l-19.5-10l-18-10l-17.5-11l-18.5-13l-17.5-13.5l-16-13.5l-14.5-14l-15.5-15.5l-14-15.5l-14-17l-12-16.5l-12-18l-11.5-19l-10-19l-9.5-19.5l-8.5-20.5l-7.5-19.5l-6.5-20.5l-5.5-20.5l-4.5-21l-3.5-21l-2.5-21.5M1843 592l-1.5 21l-2.5 20.5l-4 21l-4.5 21l-6 21l-6.5 20.5l-7 19.5l-9 20l-9 18.5l-10.5 19.5l-12 19.5l-11.5 17.5l-13.5 17.5l-12.5 15l-15.5 17.5l-15 15l-15.5 14.5l-17 14l-18.5 13.5l-16 11l-20 12.5l-17.5 9.5l-18 9l-19 8.5l-23 9l-20 6.5l-20.5 5.5l-20.5 5l-21 3.5l-21 3l-21 2l-21.5 0.5l-21 0l-21-1l-20.5-2l-20.5-3l-19.5-4l-23.5-5.5l-19-5.5l-22-7.5l-21-8l-20-9.5l-19-9.5l-18-10.5l-17-11l-18.5-13l-17.5-13.5l-16-13.5l-14.5-13.5l-15.5-16l-13.5-15.5l-14-17l-12-16.5l-12-18l-11-18.5l-10.5-19l-9-19.5l-8.5-20.5l-7.5-19.5l-6.5-20.5l-5.5-20.5l-4.5-21l-3.5-21l-2.5-21.5M1844.5 597.5l-2 21l-3 20.5l-4 21l-5 21.5l-6 21l-7 20l-7.5 19.5l-8.5 20l-9.5 18.5l-10.5 19l-12.5 19.5l-12 17.5l-13.5 17l-12.5 15l-16 17.5l-15 14.5l-16 14.5l-17 14l-18 13.5l-16 10.5l-20.5 12l-17.5 9.5l-18 9l-19 8l-23 8.5l-20 6.5l-20.5 5.5l-20.5 4.5l-21 3.5l-21 2.5l-21 2l-21 0.5l-21-0.5l-21-1l-20.5-2l-20-3l-20-4l-23-6l-19-5.5l-21.5-7.5l-21-8.5l-20-9l-19-10l-18-10.5l-17-10.5l-18.5-13.5l-17-13l-15.5-14l-15-13.5l-15-15.5l-13.5-15.5l-14-17.5l-12-16.5l-11.5-17.5l-11.5-19l-10-19l-9.5-19l-8.5-20.5l-7-19.5l-6.5-20.5l-5.5-20.5l-4.5-21l-3.5-21l-2.5-21.5M1845.5 603l-2.5 21l-3 20.5l-4 21l-5.5 21.5l-6 20.5l-7.5 20.5l-7.5 19l-9 20l-9.5 18.5l-11 19l-11 17l-12 17l-13 17l-13 15l-16 17l-14.5 14.5l-16 14.5l-17 13.5l-18.5 13.5l-16 10.5l-20 12l-17.5 9.5l-18 8.5l-18.5 8l-23.5 9l-19.5 6l-20.5 5.5l-20.5 4.5l-20.5 3.5l-21 3l-21 1.5l-21 0.5l-21 0l-21-1l-20.5-2.5l-20-3l-20-3.5l-23-6l-18.5-5.5l-22-7.5l-21-8l-19.5-9.5l-19-9.5l-18-10.5l-17-11l-18.5-13l-17.5-13l-16-14l-16.5-15.5l-15-15.5l-13.5-15.5l-14-17l-12-16.5l-11.5-18l-11-18.5l-10.5-19l-9-19.5l-8.5-20l-7-20l-6.5-20.5l-5.5-20l-4.5-21l-3.5-21l-2.5-21.5M1846.5 608l-2.5 21l-3.5 21l-4.5 21l-5 19l-6.5 21l-7 20l-8 19l-9 19.5l-9.5 18.5l-11 18.5l-12.5 19.5l-12 17l-13.5 17l-13 14.5l-16 17l-15 14.5l-16 14l-17.5 13.5l-18 13l-16 10.5l-20 12l-17.5 9l-18.5 8.5l-18.5 8l-23 8.5l-20 6l-20 5l-20.5 4.5l-21 3.5l-21 2.5l-20.5 1.5l-21 0.5l-21-0.5l-20.5-1.5l-20.5-2l-20-3l-20-4l-23-6l-18.5-5.5l-21.5-7.5l-21-8.5l-19.5-9l-19-10l-18-10.5l-17-10.5l-18-13l-17.5-13.5l-15.5-13.5l-16.5-16l-15-15.5l-13.5-15.5l-13.5-17l-12-16.5l-12-17.5l-11-19l-10-19l-9-19l-8.5-20.5l-7-19.5l-6.5-20.5l-5.5-20.5l-4.5-20.5l-3.5-21l-2.5-21.5M1847 613l-2.5 21l-3.5 21l-5 21l-5 19l-6.5 21l-7.5 20l-8 18.5l-9.5 20l-10 18l-11 18.5l-12.5 19l-12.5 17l-13.5 17l-13 14.5l-16 17l-15.5 14l-16 13.5l-17.5 13.5l-18 13l-16 10l-20.5 12l-17.5 9l-18 8l-19 8l-23 8l-20 6l-20 5l-20.5 4l-20.5 3.5l-21 2.5l-21 1l-20.5 0.5l-21-0.5l-20.5-1.5l-20-2.5l-20-3l-20-4l-22.5-6l-18.5-5.5l-21.5-7.5l-21-8.5l-19.5-9.5l-19-9.5l-17.5-10.5l-17-11l-18-13l-17-13.5l-16-13.5l-16.5-16l-14.5-15.5l-13.5-15.5l-13.5-17l-12-16.5l-11.5-17.5l-11-18.5l-10-19l-9-19l-8.5-20.5l-7-19.5l-6.5-20.5l-5.5-20.5l-4.5-20.5l-3.5-21l-2.5-21.5M1847.5 618l-3 21l-3.5 20.5l-5 21l-5.5 19.5l-6.5 20.5l-8 20l-8 19l-9.5 19.5l-10 18l-11.5 18.5l-12.5 19l-12.5 16.5l-14 17l-13 14l-16.5 17l-15 13.5l-16.5 14l-17.5 13l-18 13l-16.5 10l-20 11l-17.5 9l-18.5 8.5l-18.5 7.5l-23 7.5l-20 6l-20 5l-20.5 4l-20.5 3l-21 2l-20.5 1.5l-21 0l-20.5-0.5l-20.5-1.5l-20.5-2.5l-23.5-4l-19.5-4.5l-22.5-6l-18.5-6l-21-7.5l-20.5-9l-19.5-9.5l-18.5-10l-17.5-10.5l-16.5-10.5l-18-13.5l-17-13.5l-15-13.5l-16.5-15.5l-14.5-15.5l-13-15.5l-13.5-17l-11.5-16.5l-11.5-17.5l-10.5-18.5l-10-19l-9-19l-8-20l-7-19.5l-6.5-20l-5-20l-4.5-21l-3.5-20.5l-2.5-21M1848 622.5l-3 21l-4 20.5l-5 21l-5.5 19.5l-7 20.5l-8 20l-8.5 18.5l-10 19.5l-10 18l-11.5 18.5l-11 16.5l-12.5 16.5l-14 16.5l-13 14.5l-16 16l-15.5 14l-16 13.5l-17.5 13l-18 13l-16 10l-20 11l-17.5 9l-22 9.5l-18.5 7.5l-23.5 7.5l-19.5 6l-20 4.5l-20.5 4l-20.5 3l-21 2l-20.5 1l-20.5 0l-21-0.5l-20-2l-20.5-2.5l-23.5-4l-19.5-4.5l-22.5-6l-18-6l-21-8l-20.5-8.5l-19.5-9.5l-18-10l-17.5-10.5l-16.5-11l-18-13.5l-16.5-13l-15.5-14l-16-15.5l-14.5-15.5l-13-15.5l-13-16.5l-12-16.5l-11-17.5l-11-18.5l-9.5-19l-9-19l-8.5-20l-6.5-19.5l-6.5-20l-5-20.5l-4.5-20.5l-3.5-20.5l-2.5-21M1848.5 627l-3.5 21l-4 20.5l-5.5 21l-5.5 19.5l-7.5 20.5l-8 19.5l-8.5 18.5l-10 19.5l-10 18l-12 18.5l-11 16l-13 16.5l-14 16.5l-13 14l-16.5 16.5l-15 13.5l-16.5 13.5l-17 13l-18.5 12.5l-16 9.5l-20 11l-17.5 9l-22 9.5l-18.5 7l-23.5 7.5l-19.5 5.5l-20 4.5l-20.5 4l-20.5 2.5l-20.5 2l-20.5 1l-21 0l-20.5-1l-20-1.5l-20-3l-24-4l-19-4.5l-22.5-6l-18-6l-21-8l-20-9l-19.5-9.5l-18-10l-17.5-10.5l-16.5-11l-17.5-13l-16.5-13.5l-15.5-13.5l-16-16l-14.5-15.5l-13-15l-13-17l-11.5-16.5l-11.5-17.5l-10.5-18.5l-10-18.5l-8.5-19l-8.5-20l-7-19.5l-6-20l-5-20.5l-4.5-20.5l-3.5-20.5l-2.5-21M1849 631l-3.5 21.5l-4.5 20.5l-5.5 20.5l-6 19.5l-7.5 20.5l-8 19.5l-9 18.5l-10 19.5l-10.5 17.5l-12 18.5l-11.5 16l-12.5 16.5l-14 16l-13.5 14l-16.5 16.5l-15 13.5l-16.5 13l-17.5 13l-18.5 12l-16 9.5l-20 11l-17.5 8.5l-22 9.5l-18.5 7l-23 7.5l-20 5l-20 4.5l-20 3.5l-20.5 3l-20.5 1.5l-21 1l-20.5 0l-20.5-1l-20-2l-20-2.5l-23.5-4.5l-19-4.5l-22.5-6.5l-18-6l-21-8l-20-8.5l-19-9.5l-18-10.5l-17.5-10.5l-16-11l-18-13l-16.5-13.5l-15-13.5l-16-15.5l-14.5-15.5l-13-15.5l-13-17l-11.5-16l-11-17.5l-10.5-18.5l-10-19l-9-19l-8-20l-7-19l-6-20.5l-5.5-20l-4-20.5l-3.5-21l-2.5-20.5M1849 635.5l-3.5 21l-5 20.5l-5.5 20.5l-6 19.5l-7 18.5l-8 19.5l-9 18.5l-10 19l-10.5 17.5l-11.5 18l-13.5 18.5l-13 16l-14 16l-13 14l-17 16l-15.5 13.5l-16 13l-17.5 12.5l-18.5 12l-16 9.5l-20.5 11l-17.5 8.5l-22 9l-18.5 7l-23 7l-19.5 5.5l-20 4l-20.5 3.5l-20.5 2.5l-20.5 1.5l-20.5 1l-20.5-0.5l-20-1l-20.5-2l-19.5-2.5l-23.5-4.5l-19-4.5l-22.5-6.5l-18-6l-20.5-8l-20-9l-19-9.5l-18-10l-17.5-10.5l-16-11l-17.5-13.5l-16.5-13.5l-15-13.5l-16-15.5l-14-15.5l-13-15l-13-17l-11.5-16.5l-11.5-17.5l-10.5-18l-9.5-19l-9-19l-8-20l-7-19l-6-20.5l-5.5-20l-4-20.5l-3.5-21l-2.5-20.5M1849 639l-3.5 21l-5 20.5l-6 21l-6 19l-7 18.5l-8.5 19.5l-9 18.5l-10 19l-10.5 17.5l-12 18l-13.5 18l-13 16l-14.5 16l-13 14l-17 15.5l-15.5 13.5l-16.5 13l-17.5 12.5l-18.5 11.5l-16 9.5l-20 11l-17.5 8l-22 9l-18.5 6.5l-23.5 7.5l-19.5 5l-20 4l-20 3.5l-20.5 2l-20.5 1.5l-20.5 1l-20-0.5l-20.5-1l-20-2l-20-3l-23-4.5l-19-4.5l-22-6.5l-18-6.5l-21-8l-19.5-9l-19-9.5l-18-10l-17-10.5l-16-11l-18-13l-16-13.5l-15-13.5l-16-16l-14-15l-13-15.5l-13-17l-11.5-16l-11-17.5l-10.5-18.5l-10-18.5l-8.5-19l-8-20l-7-19l-6-20.5l-5.5-20l-4-20.5l-3.5-21l-2.5-20.5M1849 643l-4 21l-5 20.5l-6 20.5l-6 19l-7.5 18.5l-8.5 19.5l-9 18l-10.5 19l-10.5 17.5l-12 18l-13.5 18l-13 16l-14.5 16l-13.5 13.5l-16.5 15.5l-16 13l-16.5 13l-17.5 12.5l-18.5 11.5l-16 9.5l-20.5 10.5l-17.5 8l-21.5 9l-19 6.5l-23 7l-19.5 4.5l-20 4l-20 3.5l-20.5 2l-20 1.5l-20.5 0.5l-20.5 0l-20-1.5l-20-2l-20-3l-23-4.5l-19-5l-22-6.5l-18-6l-20.5-8l-19.5-9l-19-9.5l-18-10.5l-17-10.5l-16-11l-17.5-13l-16-13.5l-15-13.5l-16-15.5l-14-15.5l-13-15.5l-12.5-16.5l-11.5-16.5l-11-17.5l-10.5-18l-10-19l-8.5-18.5l-8-20l-7-19.5l-6-20l-5.5-20l-4-20.5l-3.5-21l-2.5-20.5M1849 646.5l-4 21l-5 20.5l-6.5 20.5l-6.5 19l-7 18.5l-9 19l-9 18.5l-10.5 19l-11 17l-12 18l-12 15.5l-13 16l-14 15.5l-13.5 13.5l-16.5 15.5l-15.5 13l-16.5 13l-17.5 12l-18.5 12l-16 9l-20 10.5l-17.5 8.5l-21.5 8.5l-18.5 6.5l-23 7l-19.5 5l-20 4l-20 3.5l-20 2.5l-20.5 1.5l-20.5 0.5l-20-0.5l-20.5-1l-20-2l-19.5-3l-23-4.5l-19-4.5l-22-6.5l-18-6l-20.5-8l-20-9l-19-9.5l-18-10l-17-10.5l-16-11l-17.5-13l-16.5-13.5l-17-15.5l-15.5-15.5l-14.5-15.5l-12.5-15l-13-17l-11.5-16l-11-17.5l-10.5-18l-9.5-19l-8.5-19l-8-19.5l-7-19.5l-6-20l-5.5-20l-4-20.5l-3.5-21l-2.5-20.5M1849 650l-4 21l-5.5 20l-6.5 21l-6.5 19l-7.5 18l-8.5 19.5l-9.5 18l-10.5 19l-11 17l-12.5 17.5l-11.5 15.5l-13.5 16l-14 15.5l-13.5 13.5l-17 15.5l-15.5 13l-16.5 12.5l-17.5 12l-18.5 11.5l-16 9.5l-20 10l-17.5 8l-21.5 9l-18.5 6.5l-23 6.5l-19.5 5l-20 4l-20 3l-20 2.5l-20 1l-20.5 0.5l-20.5 0l-20-1.5l-20-2l-19.5-3l-23-4.5l-19-4.5l-22-6.5l-17.5-6l-20.5-8l-20-9l-18.5-9.5l-18-10l-17-10.5l-16-11l-17.5-13.5l-16.5-13l-17-15.5l-15.5-15.5l-14-15.5l-13-15.5l-12.5-16.5l-11.5-16.5l-11-17l-10.5-18.5l-9.5-18.5l-8.5-19l-8.5-20l-6.5-19l-6-20l-5.5-20l-4-20.5l-3.5-21l-2.5-20.5M1849 653l-4.5 21l-5.5 20.5l-6.5 20.5l-6.5 19l-7.5 18l-9 19.5l-9.5 18l-11 18.5l-11 17l-12 17.5l-12 15.5l-13.5 16l-14.5 15.5l-13 13l-17 15.5l-15.5 13l-16.5 12l-17.5 12.5l-18.5 11l-16.5 9.5l-20 10l-17.5 8l-21.5 8.5l-18.5 6.5l-23 6.5l-19.5 4.5l-19.5 4l-20 3l-20 2.5l-20.5 1l-20 0.5l-20.5-0.5l-20-1.5l-19.5-2l-19.5-3l-23.5-4.5l-18.5-4.5l-22-6.5l-17.5-6.5l-20.5-8l-19.5-9l-19-9.5l-18-10l-17-10.5l-15.5-11l-17.5-13l-16.5-13.5l-17-15.5l-15.5-15.5l-14-15.5l-12.5-15l-13-17l-11-16l-11-17.5l-10.5-18l-9.5-18.5l-9-19l-8-20l-6.5-19l-6-20l-5.5-20l-4-20.5l-3.5-21l-2.5-20.5M1849 656l-4.5 21l-5.5 20.5l-7 20.5l-7 19l-7.5 18l-9 19l-9.5 18l-11 18.5l-11 17.5l-12.5 17l-12 15.5l-13.5 15.5l-14.5 15.5l-13.5 13.5l-17 15l-15.5 12.5l-16.5 12.5l-17.5 12l-18.5 11l-16 9l-20.5 10l-17 8l-22 8.5l-18.5 6l-22.5 6.5l-19.5 5l-20 3.5l-20 3l-20 2l-20 1.5l-20 0l-20.5-0.5l-20-1l-19.5-2.5l-19.5-3l-23-4.5l-18.5-5l-22-6.5l-17.5-6l-20.5-8l-19.5-9l-19-9.5l-17.5-10l-17-11l-16-10.5l-17-13.5l-16.5-13l-17-15.5l-15-15.5l-14-15.5l-13-15.5l-12.5-16.5l-11.5-16l-11-17.5l-10-18l-10-19l-8.5-18.5l-8-20l-6.5-19l-6.5-20l-5-20l-4-20.5l-3.5-21l-2.5-20.5M1849 659l-4.5 19.5l-5.5 20.5l-7 20.5l-7 18.5l-7.5 18l-9 19l-9.5 17.5l-11 18.5l-11 17l-12 17.5l-14 17.5l-13.5 15l-14.5 15.5l-13.5 13l-17 15.5l-15.5 12.5l-16.5 12l-17.5 12l-19 11l-16 9l-20 10l-17.5 7.5l-21.5 8.5l-18.5 6l-23 6.5l-19.5 4.5l-19.5 3.5l-20 3l-20 2l-20 1l-20 0.5l-20-0.5l-20-1.5l-20-2.5l-19.5-3l-22.5-4.5l-18.5-5l-22-6.5l-17.5-6l-20.5-8.5l-19.5-9l-18.5-9.5l-17.5-10l-17-10.5l-16-11l-17-13l-16.5-13.5l-16.5-15.5l-15.5-15.5l-14-15.5l-12.5-15l-13-16.5l-11-16.5l-11-17l-10.5-18.5l-9.5-18.5l-8.5-18.5l-8-20l-6.5-19l-6.5-20l-5-20l-4-20.5l-3.5-21l-2.5-20.5M1848.5 662l-4.5 19.5l-5.5 20l-7 20.5l-7 18.5l-7.5 18l-9.5 19l-9.5 17.5l-11 18.5l-11 17l-12.5 17l-14 17.5l-13 15.5l-15 15l-13.5 13l-17 15l-15.5 12.5l-17 12l-17.5 12l-18.5 11l-16 8.5l-20.5 10l-17 7.5l-22 8l-18.5 6.5l-22.5 6l-19.5 4.5l-19.5 3.5l-20 3l-20 2l-20 1l-20 0l-20-0.5l-20-1.5l-19.5-2.5l-19.5-3l-22.5-5l-19-4.5l-21.5-6.5l-17.5-6.5l-20-8l-19.5-9l-18.5-9.5l-18-10.5l-16.5-10.5l-16-11l-17-13l-16-13.5l-17-15l-15.5-15.5l-14-15.5l-12.5-15l-12.5-17l-11-16l-11-17.5l-10.5-18l-9.5-18.5l-8.5-19l-8-19.5l-6.5-19l-6.5-20.5l-5-19.5l-4-20.5l-3.5-21l-2.5-20.5M1848.5 664.5l-5 19.5l-5.5 20l-7 20.5l-7 18.5l-8 18l-9 19l-10 17.5l-11 18.5l-11 16.5l-12.5 17l-14 17.5l-13.5 15l-15 15.5l-13.5 13l-17 14.5l-15.5 12.5l-17 12l-17.5 11.5l-18.5 11l-16 9l-20.5 9.5l-17.5 7.5l-21.5 8l-18.5 6l-22.5 6l-19.5 4.5l-19.5 3.5l-20 3l-20 1.5l-20 1l-20 0.5l-20-1l-19.5-1.5l-19.5-2.5l-19.5-3l-23-5l-18.5-4.5l-21.5-7l-17.5-6l-20-8.5l-19.5-9l-18.5-9.5l-17.5-10l-16.5-10.5l-16-11l-17-13l-16-13.5l-17-15.5l-15-15.5l-14-15.5l-12.5-15l-12.5-16.5l-11.5-16l-10.5-17.5l-10.5-18l-9.5-18.5l-8.5-19l-8-19.5l-7-19.5l-6-20l-5-20l-4-20l-3.5-21l-2.5-20.5M1848 667l-4.5 19.5l-6 20l-7 20.5l-7.5 18.5l-7.5 18l-9.5 18.5l-10 18l-11 18l-11 16.5l-13 17l-14 17.5l-13.5 15l-14.5 15l-14 13l-17 14.5l-15.5 12.5l-17 12l-17.5 11.5l-18.5 11l-16.5 8.5l-20 9.5l-17.5 7.5l-21.5 8l-18.5 5.5l-22.5 6.5l-19.5 4l-19.5 3.5l-20 2.5l-19.5 2l-20 1l-20 0l-20-1l-20-1.5l-19.5-2.5l-19-3l-23-5l-18-5l-21.5-6.5l-17.5-6.5l-20-8l-19.5-9l-18.5-9.5l-17.5-10.5l-16.5-10.5l-16-11l-17-13l-16-13.5l-16.5-15l-15.5-15.5l-14-15.5l-12.5-15l-12.5-16.5l-11-16.5l-11-17l-10-18l-9.5-19l-8.5-18.5l-8-20l-7-19l-6-20l-5-20l-4-20l-3.5-21l-2.5-20.5M1848 669.5l-5 19.5l-6 20l-7 20.5l-7.5 18.5l-8 17.5l-9.5 19l-9.5 17.5l-11.5 18l-11.5 16.5l-12.5 17l-14 17.5l-13.5 15l-15 15l-13.5 12.5l-17.5 14.5l-15.5 12.5l-17 11.5l-17.5 11.5l-18.5 11l-16.5 8.5l-20 9.5l-17.5 7l-21.5 8l-18.5 6l-22.5 6l-19.5 4l-19.5 3.5l-19.5 2.5l-20 1.5l-20 1l-20 0l-19.5-1l-20-1.5l-19.5-2.5l-19-3l-22.5-5l-18.5-5l-21.5-7l-17.5-6l-20-8.5l-19-9l-18.5-9.5l-17.5-10l-16.5-10.5l-16-11l-17-13l-16-13.5l-16.5-15.5l-15-15.5l-14-15l-12.5-15.5l-12.5-16.5l-12.5-18l-10.5-17l-10-18l-9.5-18.5l-8-18.5l-8-19.5l-6.5-19l-6-20l-5-19.5l-4.5-20.5l-3-20l-2.5-20.5M1847.5 672l-5 19.5l-6 20l-7 20l-7.5 18.5l-8 18l-9.5 18.5l-10 17.5l-11.5 18l-11.5 16.5l-12.5 17l-12.5 15l-13.5 15l-14.5 14.5l-13.5 13l-17 14.5l-16 12l-16.5 12l-17.5 11.5l-18.5 10.5l-16 8.5l-20 9.5l-17.5 7.5l-21 8l-18.5 6l-22.5 6l-19.5 4l-19.5 3.5l-19.5 3l-20 1.5l-19.5 1l-20 0l-24-0.5l-19.5-2l-19.5-2.5l-19-3.5l-22.5-5l-18.5-4.5l-21.5-7l-17-6l-20-8.5l-19.5-9l-18-9.5l-17.5-10.5l-16.5-10.5l-15.5-11l-17.5-13l-15.5-13l-17-15.5l-15-15.5l-13.5-15.5l-12.5-15l-12.5-16.5l-12.5-18l-10.5-17l-10-18l-9.5-18.5l-8.5-18.5l-7.5-19.5l-6.5-19l-6-20l-5-19.5l-4.5-20.5l-3-20l-2.5-20.5M1847.5 674l-5 19.5l-6.5 20l-7 20l-7.5 18.5l-8.5 18l-9.5 18.5l-10 17.5l-11.5 18l-11.5 16.5l-12.5 16.5l-12.5 15l-13.5 15l-15 14.5l-13.5 13l-17 14.5l-15.5 12l-17 11.5l-17.5 11.5l-18.5 10.5l-16 8.5l-20 9.5l-17 7l-21.5 8l-18.5 6l-22.5 6l-19 4l-19.5 3.5l-19.5 2.5l-20 2l-20 1l-19.5 0l-24-1l-19.5-2l-19.5-2.5l-19-3.5l-22.5-5l-18-5l-21.5-6.5l-17.5-6.5l-20-8l-19-9l-18-10l-17.5-10l-16.5-10.5l-15.5-11l-17-13l-16-13.5l-16.5-15.5l-15-15.5l-14-15l-12.5-15l-12.5-16.5l-12-18l-10.5-17l-10-18l-9.5-18.5l-8.5-18.5l-7.5-20l-6.5-18.5l-6-20l-5-19.5l-4.5-20.5l-3-20l-2.5-20.5M1847 676.5l-5 19l-6.5 20l-7 20.5l-8 18l-8 18l-10 18.5l-10 17l-11.5 18l-11.5 16.5l-12.5 17l-12.5 14.5l-13.5 15l-15 14.5l-13.5 12.5l-17.5 14.5l-15.5 12l-16.5 11.5l-17.5 11.5l-18.5 10.5l-16 8.5l-20 9l-17.5 7.5l-21.5 7.5l-18 6l-23 6l-19 4l-19.5 3.5l-19.5 2.5l-19.5 1.5l-20 1l-20 0l-23.5-1l-19.5-2l-19.5-2.5l-19-3.5l-22.5-5l-18-5l-21.5-7l-17-6l-20-8.5l-19-9l-18-9.5l-17.5-10l-16.5-11l-15.5-11l-17-13l-15.5-13l-17-15.5l-15-15.5l-13.5-15l-12.5-15.5l-12.5-16.5l-12-17.5l-10.5-17.5l-10.5-18l-9-18l-8.5-18.5l-7.5-20l-6.5-18.5l-6-20l-5-20l-4.5-20l-3-20l-2.5-20.5M1847 678.5l-5.5 19l-6.5 20l-7.5 20l-7.5 18.5l-8.5 17.5l-9.5 18.5l-10 17.5l-11.5 18l-12 16l-12.5 17l-12.5 14.5l-14 15l-14.5 14.5l-14 12.5l-17 14l-15.5 12l-17 11.5l-17.5 11.5l-18.5 10.5l-16 8l-20 9.5l-17 7l-21.5 7.5l-18.5 6l-22.5 6l-19 4l-19.5 3l-19.5 2.5l-19.5 1.5l-20 1l-20 0l-23.5-1l-19.5-2l-19-2.5l-19-3.5l-22.5-5l-18-5l-21.5-7l-17-6.5l-20-8l-19-9l-18-10l-17.5-10l-16.5-10.5l-15.5-11l-17-13l-15.5-13.5l-16.5-15.5l-15-15l-14-15.5l-12-15l-12.5-16.5l-12-18l-11-17l-10-18l-9-18.5l-8.5-18.5l-7.5-19.5l-7-18.5l-5.5-20l-5-20l-4.5-20l-3-20l-2.5-20.5M1846.5 680.5l-5.5 19l-6.5 20l-7.5 20l-7.5 18.5l-8.5 17.5l-10 18.5l-10 17l-11.5 18l-11.5 16l-13 17l-12.5 14.5l-14 14.5l-14.5 14.5l-14 12.5l-17 14.5l-16 11.5l-16.5 11.5l-17.5 11l-18.5 10.5l-16 8.5l-20 9l-17.5 7l-21.5 8l-18 5.5l-22.5 5.5l-19 4l-19.5 3.5l-19.5 2.5l-20 1.5l-19.5 0.5l-19.5 0l-24-1l-19.5-2l-19-2.5l-19-3.5l-22.5-5l-18-5l-21-7l-17-6.5l-20-8.5l-19-9l-18-9.5l-17.5-10l-16.5-11l-15-10.5l-17-13.5l-16-13l-16.5-15.5l-15-15.5l-13.5-15l-12.5-15l-12-16.5l-12.5-18l-10.5-17l-10-18l-9-18.5l-8.5-18.5l-7.5-19.5l-7-19l-5.5-19.5l-5-20l-4.5-20l-3-20l-2.5-20.5M1846 682l-5 19.5l-6.5 19.5l-8 20.5l-7.5 18l-8.5 17.5l-10 18.5l-10 17l-12 18l-11.5 16l-13 16.5l-12.5 15l-14 14.5l-15 14.5l-13.5 12.5l-17.5 14l-15.5 11.5l-16.5 11.5l-18 11l-18.5 10.5l-16 8l-20 9l-17 7l-21.5 8l-18.5 5.5l-22 5.5l-19.5 4l-19 3l-19.5 2.5l-20 1.5l-19.5 1l-19.5-0.5l-23.5-1l-19.5-2l-19.5-2.5l-18.5-3.5l-22.5-5.5l-18-5l-21-6.5l-17.5-6.5l-19.5-8.5l-19-9l-18-9.5l-17.5-10.5l-16-10.5l-15.5-11l-17-13l-15.5-13.5l-16.5-15l-15-15.5l-13.5-15l-12.5-15.5l-12.5-16.5l-12-17.5l-10.5-17l-10-18l-9-18.5l-8.5-18.5l-8-19.5l-6.5-19l-5.5-19.5l-5-20l-4.5-20l-3-20l-2.5-20.5M1846 684l-5.5 19l-6.5 20l-8 20l-8 18l-8.5 17.5l-9.5 18.5l-10.5 17l-11.5 18l-12 16l-13 16.5l-12.5 14.5l-14 14.5l-15 14.5l-13.5 12.5l-17.5 14l-15.5 11.5l-17 11.5l-17.5 11l-18.5 10l-16 8.5l-20 9l-17 6.5l-21.5 7.5l-18.5 5.5l-22.5 6l-19 4l-19 3l-19.5 2l-19.5 1.5l-20 1l-19.5-0.5l-23.5-1l-19.5-2l-19-3l-19-3.5l-22-5l-18-5l-21.5-7l-17-6.5l-19.5-8l-19-9l-18-10l-17-10l-16.5-10.5l-15.5-11l-16.5-13l-16-13.5l-16-15.5l-15-15l-14-15.5l-12-15l-12.5-16.5l-12-17.5l-10.5-17.5l-10-17.5l-9-18.5l-8.5-18.5l-8-19.5l-6.5-19l-5.5-19.5l-5-20l-4.5-20l-3-20l-2.5-20.5M1845.5 685.5l-5.5 19.5l-6.5 19.5l-7 18.5l-8 18l-8.5 17.5l-10 18l-10 17l-11.5 18l-12 16l-12.5 16l-14.5 16.5l-14 14.5l-15 14.5l-13.5 12.5l-17.5 14l-15.5 11.5l-17 11.5l-17.5 10.5l-18.5 10.5l-16 8l-20 9l-17.5 6.5l-21 7.5l-18.5 5.5l-22.5 5.5l-19 4l-19 3l-19.5 2.5l-19.5 1.5l-19.5 0.5l-20-0.5l-23.5-1l-19-2l-19.5-3l-18.5-3.5l-22.5-5l-18-5l-21-7l-20-8l-19.5-8.5l-19-9l-18-9.5l-17-10.5l-16-10.5l-15-11l-16.5-13l-15.5-13.5l-16.5-15.5l-14.5-15l-13.5-15.5l-12-15l-12.5-16.5l-11.5-17.5l-10.5-17l-10-18l-9-18l-8-18.5l-8-19.5l-6-18.5l-6-19.5l-5-19.5l-4-20l-3-20l-2.5-20M1845.5 687l-6 19.5l-6.5 19.5l-7 18.5l-8 18l-8.5 17.5l-10 18l-10 17l-12 17.5l-11.5 16l-13 16.5l-14.5 16.5l-13.5 14.5l-15 14l-14 12.5l-17.5 13.5l-15.5 12l-17 11l-17.5 11l-18.5 10l-16 8l-20 9l-17.5 6.5l-21 7.5l-18.5 5.5l-22 5.5l-19 4l-19.5 3l-19.5 2l-19.5 1.5l-19.5 0.5l-19.5 0l-23.5-1.5l-19.5-2l-19-3l-19-3.5l-22-5l-18-5l-21-7l-20-8l-19.5-8.5l-19-9l-17.5-10l-17-10l-16-11l-15.5-11l-16.5-13l-15.5-13l-16-15.5l-15-15.5l-13-15l-12-15l-12.5-16.5l-12-17.5l-10-17l-10-18l-9-18l-8-18.5l-8-19.5l-6-18.5l-6-19.5l-5-19.5l-4-20l-3-20l-2.5-20M1845 688.5l-5.5 19.5l-7 19.5l-7 18.5l-8 18l-8.5 17l-10 18.5l-10.5 17l-11.5 17.5l-12 16l-13 16l-14.5 16.5l-13.5 14.5l-15 14l-14 12l-17.5 14l-15.5 11.5l-17 11.5l-17.5 10.5l-18.5 10l-16 8l-20 9l-17 6.5l-21.5 7.5l-18.5 5.5l-22 5.5l-19 3.5l-19.5 3l-19.5 2l-19.5 1.5l-19.5 0.5l-19.5 0l-23.5-1.5l-19-2l-19-3l-19-3.5l-22-5.5l-18-5l-21-7l-20-7.5l-19.5-8.5l-19-9.5l-17.5-9.5l-17-10.5l-16-10.5l-15-11l-16.5-13l-15.5-13.5l-16-15l-15-15.5l-13.5-15l-12-15l-12-16.5l-12-18l-10-16.5l-10-18l-9-18l-8-18.5l-8-19.5l-6-18.5l-6-19.5l-5-19.5l-4-20l-3-20l-2.5-20M1845 690l-6 19.5l-7 19.5l-7 18.5l-8 17.5l-8.5 17.5l-10 18l-10.5 17l-12 17.5l-11.5 16l-13 16l-14.5 16.5l-14 14.5l-15 14l-14 12l-17 14l-16 11.5l-16.5 11l-18 10.5l-18.5 10l-16 8l-20 9l-17 6.5l-21.5 7.5l-18 5l-22.5 5.5l-19 3.5l-19 3l-19.5 2.5l-19.5 1l-19.5 0.5l-19.5 0l-23.5-1.5l-19-2l-19.5-3l-18.5-3.5l-22-5.5l-18-5l-21-7l-20-7.5l-19.5-9l-18.5-9l-18-9.5l-17-10.5l-16-10.5l-15-11l-16.5-13l-15.5-13.5l-16-15.5l-14.5-15l-13.5-15.5l-12-15l-12-16l-12-18l-10-17l-10-17.5l-9-18l-8-18.5l-8-19.5l-6-18.5l-6-19.5l-5-19.5l-4-20l-3-20l-2.5-20M1844.5 691.5l-6 19l-6.5 20l-7.5 18l-8 18l-9 17l-10 18l-10 17l-12 17.5l-12 16l-13 16l-14.5 16.5l-14 14l-15 14.5l-13.5 12l-17.5 13.5l-16 11.5l-16.5 11l-18 10.5l-18.5 10l-16 8l-20 9l-17 6.5l-21.5 7l-18 5.5l-22.5 5.5l-19 3.5l-19 3l-19.5 2l-19.5 1l-19.5 0.5l-19.5 0l-23-1.5l-19.5-2l-19-3l-18.5-3.5l-22-5.5l-18-5l-21-7l-20-8l-19.5-8.5l-18.5-9l-17.5-10l-17-10l-16-11l-15-11l-16.5-13l-15.5-13l-16-15.5l-14.5-15.5l-13.5-15l-12-15l-12-16.5l-12-17.5l-10.5-17l-9.5-17.5l-9-18.5l-8-18l-8-19.5l-6-18.5l-6-19.5l-5-20l-4-19.5l-3-20l-2.5-20M1844 693l-5.5 19l-7 19.5l-7.5 18.5l-8 17.5l-9 17.5l-10 18l-10.5 17l-11.5 17l-12 16l-13 16l-14.5 16.5l-14 14l-15 14l-14 12l-17.5 14l-15.5 11.5l-17 11l-17.5 10.5l-18.5 10l-16 7.5l-20 8.5l-17.5 7l-21 7l-18.5 5l-22 5.5l-19 3.5l-19 3l-19.5 2l-19.5 1.5l-19.5 0l-19.5 0l-23.5-1.5l-19-2l-19-3l-18.5-4l-22-5l-18-5l-21-7l-20-8l-19.5-8.5l-18.5-9.5l-17.5-9.5l-17-10.5l-16-10.5l-15-11l-16.5-13l-15-13.5l-16-15l-15-15.5l-13-15l-12-15l-12-16.5l-12-17.5l-10.5-17l-9.5-17.5l-9-18.5l-8.5-18l-7.5-19.5l-6.5-18.5l-5.5-19.5l-5-20l-4-19.5l-3-20l-2.5-20M1844 694l-6 19l-7 20l-7.5 18l-8 18l-9 17l-10 18l-10.5 17l-12 17l-11.5 16l-13.5 16l-14.5 16l-14 14.5l-15 14l-14 12l-17 13.5l-16 11.5l-17 11l-17.5 10.5l-18.5 9.5l-16 8l-20 8.5l-17 6.5l-21.5 7.5l-18 5l-22.5 5l-19 4l-19 2.5l-19.5 2l-19 1.5l-19.5 0.5l-19.5-0.5l-23.5-1.5l-19-2.5l-19-2.5l-18.5-4l-22-5l-18-5.5l-20.5-7l-20.5-7.5l-19-8.5l-18.5-9.5l-18-9.5l-16.5-10.5l-16-10.5l-15-11l-16.5-13l-15.5-13.5l-16-15l-14.5-15.5l-13-15l-12-15l-12.5-16.5l-11.5-17.5l-10.5-17l-9.5-17.5l-9-18.5l-8.5-18l-7.5-19.5l-6.5-18.5l-5.5-20l-5-19.5l-4-19.5l-3-20l-2.5-20M1418 531l10.5-17.5l12.5-16.5l14-15l14.5-13.5l16.5-12.5l17-11l18.5-9.5l18.5-7.5l19-6l20.5-4.5l21-2.5l20.5-1l20.5 1.5l21 3l18.5 4.5l20 6.5l19 8.5l18 9.5l16.5 11l16.5 13.5l15 14l13.5 15.5l11.5 16l11 18l8.5 18.5l7 18.5l5.5 20l4 20l2 20.5l0 20.5l-1.5 20.5l-3.5 20M1418 533l11-17l13-16.5l13.5-15l15-13l16.5-13l17.5-10.5l18-9.5l19-7.5l19-5.5l20.5-4.5l21.5-2l20.5-0.5l20.5 1.5l21 3l18.5 5l20 6.5l17 8l18 10l17 11.5l16.5 13l14.5 14.5l13.5 16l11.5 16l10.5 18.5l9 18.5l6.5 18.5l5.5 20.5l3.5 20l1.5 20.5l0 20.5l-2 21l-3.5 20M1418.5 535.5l11-17l13-16.5l14-15l15-13l17-12.5l17-10.5l18.5-9l19-7.5l19.5-5.5l20.5-4l21.5-2l20 0l21 1.5l21 3.5l18.5 5l20 7.5l17 8l18 10l16.5 11.5l16 14l14.5 14.5l13.5 16l11 16.5l10.5 18.5l8.5 19l6.5 18.5l5 20.5l3 20l1.5 20.5l-0.5 20.5l-2.5 20.5l-4 20.5M1418.5 537.5l11.5-16.5l13-16.5l14.5-14.5l15-13l17-12.5l17.5-10.5l18.5-8.5l19.5-7.5l19-5l20.5-3.5l20-2l20.5 0l20.5 2l21 3.5l18.5 5l20 7.5l17 8l18 10.5l16.5 12l16 14l14.5 14.5l13 16.5l11.5 16.5l10 19l8.5 19l6 19l5 20l2.5 20.5l1 20.5l-0.5 21l-3 20.5l-4.5 20.5M1419 540.5l11.5-17l13-16l14.5-14.5l16.5-13.5l16-11.5l18-10.5l18.5-8.5l19.5-7l19.5-5l20.5-3.5l20-1.5l20.5 0.5l20.5 2l21 4l18.5 5.5l20 8l17 8.5l17.5 10.5l16.5 12l16 14.5l14 15l13 16.5l10.5 17l10 18.5l8 19.5l6 19l4.5 20.5l2.5 20.5l0.5 20.5l-1.5 20.5l-3 20.5l-5 20.5M1419.5 543l11.5-16.5l13.5-16l14.5-14.5l16.5-13.5l16.5-11l17.5-10l19-8.5l19.5-7l19.5-4.5l21-3l20-1.5l20.5 0.5l20.5 2.5l21 4.5l18.5 6l19.5 8l17.5 8.5l17.5 11.5l16 12l15.5 15l14 15l12.5 17l10.5 17l9.5 19l7.5 19.5l5.5 19l4 20.5l2 20.5l0.5 20.5l-2 20.5l-3.5 20.5l-5 20M1419.5 546l12-17l13.5-15.5l15-14.5l16.5-13l16.5-11l18-10l19-8l20-6.5l19.5-4.5l21-3l20-0.5l20.5 0.5l20.5 3l21 5l18.5 6l19.5 8.5l17 9l17.5 11.5l16 13l15.5 14.5l13.5 15.5l12 17.5l10 17l9.5 19.5l7 19.5l5 19l3.5 20.5l1.5 20.5l0 20.5l-2 20.5l-4 20.5l-6 19.5M1419.5 548.5l12.5-16l13.5-16l15-14l17-13l16.5-11l18.5-9.5l19-7.5l20-6.5l19.5-4l21-2.5l20.5-0.5l20.5 1l21 3.5l20.5 5l18.5 6.5l19.5 9l16.5 9.5l17.5 11.5l15.5 13l15.5 15.5l13 16l12 17l9.5 17.5l9 19.5l6.5 20l4.5 19l3 20.5l1.5 20.5l-1 20.5l-2.5 20.5l-4 20l-6.5 19.5M1420 552l12-16.5l14.5-15.5l15-13.5l17-13l17-10.5l18.5-9.5l19.5-7.5l19.5-6l20-4l21-2l20.5-0.5l20.5 2l21 3.5l18.5 5l18.5 6.5l19.5 9l17 10l17 12l15.5 13.5l15 15.5l13 16l11.5 17.5l9.5 18l8.5 19.5l6.5 20l4.5 19.5l2.5 20.5l0.5 21l-1 20l-3 20.5l-4.5 20l-6.5 20M1420 555l12.5-16l14.5-15l15.5-14l17-12.5l17-10.5l19-9l19.5-7.5l20-5.5l20-3.5l21-1.5l20.5 0l20.5 2l21 4l18.5 5.5l18.5 7l19 9.5l17 10l16.5 12.5l15.5 13.5l14.5 16l12.5 16.5l11 16.5l9 18l8 20l6 20l4 19.5l2.5 21l0.5 21l-1.5 20l-3.5 20.5l-5.5 20.5l-7 19.5M1420 558.5l13-16l14.5-15l15.5-13.5l17.5-12.5l17.5-10l18.5-8.5l20-7l20-5.5l20.5-3l21-1.5l20.5 0.5l20.5 2.5l21 4.5l18.5 5.5l18 7.5l19.5 10l16 10.5l17 13l15 14l14 16.5l12.5 16.5l10 17l8.5 18l8 20l5.5 20.5l3.5 19.5l1.5 21l0 20.5l-2 20l-4 20.5l-6 20l-7.5 19.5M1420.5 562l13-15.5l14.5-15l16-13l16.5-11.5l17.5-10l19-8.5l19.5-7l20.5-5l20-3l21-1l20.5 1l20.5 2.5l21 5l18.5 6l18 7.5l19 10.5l16.5 10.5l16.5 13.5l14.5 14l14.5 16.5l11.5 17l10 17.5l8.5 18l7.5 20.5l5 20.5l3 20l1.5 20.5l-1 21l-2.5 20.5l-4.5 20.5l-6 19.5l-8 19M1420.5 566l13-15.5l15-14.5l16-13l17-11.5l17.5-9.5l19-8l20-6.5l20.5-4.5l20-3l21.5-0.5l20.5 1l20.5 3.5l20.5 5l18.5 6.5l18 8l19 11l16 11l16 14l14.5 14.5l14 17l11.5 17l9 17.5l8 18.5l6.5 20.5l5 20.5l2.5 20l0.5 21l-1 20.5l-3.5 20.5l-5 20l-6.5 19.5l-8.5 18.5M1420 570l14-15.5l15-14l16.5-13l17-11l18-9l19-8l20-6l20.5-4l20.5-2.5l21.5 0l20 1.5l21 3.5l20.5 6l18.5 7l17.5 8.5l18.5 11l16 12l15.5 14l14.5 15l13 17.5l11 17.5l9 17.5l7 18.5l6.5 21l3.5 20.5l2 20l0 20.5l-1.5 20.5l-3.5 20l-5.5 19.5l-7.5 19.5l-9 18.5M1420 574l14-15l15.5-14l16.5-12.5l17.5-10.5l18-9l19.5-7.5l20-5.5l20.5-4l20.5-1.5l19.5 0l20.5 2l20.5 4l20.5 6l18.5 7.5l17.5 8.5l18.5 12l15.5 12l15.5 14l14 15.5l13 17.5l10.5 18l8.5 18l7 19l5.5 20.5l3.5 21l1.5 20l-0.5 20.5l-2.5 20.5l-4 20.5l-6.5 19.5l-7.5 19l-9.5 18M1420 578.5l14-15l15.5-13.5l17-12l17.5-10.5l18.5-8.5l19.5-7l20.5-5.5l20.5-3l20.5-1.5l20 0.5l20 2.5l20.5 4.5l20.5 6.5l18 8l17.5 9.5l18.5 12l15 12.5l15 15l13.5 15.5l11.5 16.5l10 18.5l8 18l6.5 19l5 21l3 21l1 20l-1 20.5l-3 20.5l-4.5 20.5l-7 19l-8 19l-10.5 17.5M1419.5 583l14.5-14.5l16-13.5l17-11.5l18-10l18.5-8.5l19.5-6.5l19-4.5l21-3l20.5-1l19.5 1l20 3l20.5 5l20.5 7l18 8l17.5 9.5l17.5 13l15 12.5l15 15l13 16.5l11 16.5l9.5 18.5l8 18.5l6 19l4.5 21.5l2.5 20.5l0 20.5l-1.5 20.5l-3.5 20.5l-5.5 20l-7 19l-9 18.5l-11 17.5M1419 588l15-14.5l16-13l17.5-11.5l18-9.5l18.5-8l20-6l19.5-4l20.5-2.5l20.5-0.5l20 1.5l20 3.5l20.5 5.5l20 7.5l18 9l17 10l17.5 13l14.5 13.5l14 15.5l12.5 16.5l10.5 17l9 19l7 18.5l5.5 19.5l3.5 21l2 21l-0.5 20l-2.5 20.5l-4 20l-6 19.5l-8 18.5l-9 18l-11.5 17M1418.5 593l15-14l16.5-12.5l18-11.5l18-9l19-7.5l20-5.5l19.5-3.5l21-2l20.5 0.5l19.5 2l20 3.5l20.5 6.5l19.5 8l17.5 9l17 11l15.5 12.5l14 13.5l14 16l12 17l10 17.5l8.5 18.5l6.5 19l5 19.5l3 21.5l1 20.5l-1 20l-3 20.5l-4.5 20l-7 19.5l-8 18l-10.5 18l-11.5 16.5M1418 598.5l15.5-14l16-11.5l17.5-11l18.5-8.5l18.5-7l20.5-5.5l19-3l21-1.5l20.5 0.5l19.5 2.5l20 4.5l20 6.5l20 8.5l17 9.5l16.5 11.5l15 12.5l14 14l13.5 16.5l11.5 17.5l9.5 17.5l8 19l6 19l4.5 19.5l2.5 21.5l0 21l-1.5 20l-3.5 20l-5.5 19.5l-7.5 19l-8.5 18l-11 17.5l-12 16M1417.5 604l15-13.5l16.5-11.5l18-10l18.5-8.5l19-6.5l20.5-4.5l19.5-3l21-0.5l20.5 1l19.5 3l19.5 5l20 7.5l19.5 9l16.5 10.5l16 11.5l15 13.5l13.5 14.5l12.5 16.5l11 18l8.5 17.5l7.5 19.5l5 19l3.5 20l1.5 19.5l0 21l-2.5 19.5l-4 20.5l-6 19l-8 19l-9.5 17.5l-11.5 16.5l-13 16M1416.5 609.5l15.5-12.5l16.5-11.5l17.5-9l18.5-8l19-6l20.5-4l19-2.5l21-0.5l20.5 2l19.5 3.5l19.5 5.5l19.5 7.5l19 10l17 10.5l15.5 12l14.5 14l12.5 14.5l12.5 17.5l10 17.5l8.5 18.5l6.5 19.5l4.5 19l3 20l1 19.5l-1.5 21l-2.5 19.5l-5 20l-7 18.5l-8.5 18.5l-10 17l-12 16.5l-13.5 15M1415 615.5l16-12.5l17-10.5l18.5-9l19-7.5l19.5-5.5l19-3l19.5-2l20.5 0.5l20.5 2.5l19 4l19.5 6l17.5 7.5l19 10.5l16.5 11l15 13l14 14l12.5 15l11.5 17.5l10 18l7.5 18.5l6 19.5l3.5 19.5l2.5 19.5l0 20l-2 20.5l-3.5 19.5l-5.5 19.5l-7.5 18.5l-9.5 18l-10.5 16.5l-12.5 15.5l-13.5 14.5M1413.5 622l16.5-12l17-10l18-8.5l18.5-7l19.5-4.5l19.5-3l19-1l21 1l20 2.5l19 5l19 6.5l17.5 8l18.5 10.5l16 11.5l14.5 13.5l13.5 14l12 15.5l11 18l9 18.5l7 18.5l5 20l3.5 19l1 20l-0.5 19.5l-2.5 20.5l-4.5 19l-6 19l-8 18l-10 17.5l-11.5 16.5l-13 15l-14 13.5M1412 628.5l16-11l17-9.5l18-8l19-6.5l19.5-4l19-2.5l19-0.5l20.5 1.5l20 3.5l19 5l18.5 7l17 8.5l18 11.5l15.5 12l14.5 13.5l13 14.5l11 16l9.5 16.5l8.5 18.5l6.5 18.5l5 20l2.5 19.5l0.5 19.5l-1 20l-3.5 20l-5 19l-7 19l-8.5 17.5l-10.5 17l-12 16l-13.5 14.5l-14.5 13M1410 635.5l16.5-11l17.5-9l17.5-7l19.5-5.5l19.5-4l19-1.5l19 0l20.5 2l20 4.5l18.5 5.5l18.5 8l16.5 9l16 11l15 12.5l13.5 14l12.5 15l10.5 16l9 17l7.5 18.5l6 19l4 20l1.5 19l0 20l-2 19l-4 20l-5.5 18.5l-8 18.5l-9 17l-11 16.5l-12.5 15l-14 14l-15.5 12M1408 642.5l16.5-10l17.5-8.5l18-7l19.5-5l19.5-3l19-1l19 1l19 2.5l19.5 5l18 6.5l18 8l16.5 10l15.5 11l14 13l13.5 14.5l11.5 15.5l10 16l8.5 17l7 19l4.5 19l3 20l1 19l-0.5 19.5l-3 19l-5 19.5l-6 18l-8.5 18l-10 16.5l-11.5 15.5l-13 14.5l-14.5 13l-15.5 11.5M1405.5 649.5l16.5-9.5l17-7.5l18-6l19.5-4.5l19.5-2l18.5-0.5l19 1.5l18.5 3l19.5 5.5l17.5 7l18 9l15.5 10l15 11.5l14 13.5l12.5 14.5l11 16l9 16.5l7.5 17l6 19l4 19l2.5 20l0 19l-1.5 19l-3.5 19l-6 19l-7 17.5l-8.5 16l-10.5 16.5l-12 14.5l-13.5 14l-15 12.5l-16 10.5M1402.5 657l17-9l17-6.5l18.5-5.5l19-3.5l19.5-2l19 0.5l18.5 2l18.5 4l17 5.5l17.5 7.5l17.5 9.5l15 11l14.5 12l13 13.5l12 15l10 16.5l8.5 16.5l6.5 17.5l5.5 19l3 19l1.5 18l-0.5 19l-2.5 18.5l-4 18.5l-6.5 19l-7.5 17l-10 16.5l-11 15.5l-12.5 14l-13.5 12.5l-15.5 11.5l-16 10M1399.5 665l17-8.5l17.5-6l18-5l18-2.5l19.5-1l18.5 1l18.5 2.5l18 4.5l17 6.5l16.5 8l17 10l14.5 11l13.5 12.5l12.5 14.5l11 15l9.5 16.5l8 17l5.5 17.5l4.5 19l2.5 18.5l0.5 18l-1.5 18.5l-3 18.5l-5 18l-7 17l-8 16.5l-10.5 16l-11.5 14.5l-13 13.5l-14.5 12.5l-15 10.5l-16.5 9M1395.5 673l17.5-8l17.5-5.5l18-4l18-2l18 0l18.5 1.5l18 3.5l17.5 5l16.5 7l16.5 8.5l16 10.5l14 11.5l13 13l12 14.5l10 15.5l8.5 16.5l7 17.5l5 17l3.5 19l1.5 18.5l-0.5 17.5l-2 18.5l-4 18l-6 17.5l-7.5 16l-8.5 16l-11 15l-12 14l-13 12.5l-15 11l-15.5 10l-16.5 8M1391.5 681l17-6.5l17-5l18-3.5l18-1l17.5 0l18 2.5l18 4l17 6l16 7l16 9l15.5 11.5l13 11.5l12.5 13.5l11 15l8.5 14l8 16.5l6 17.5l4 17l3 19l0.5 18l-1 17.5l-3 18l-4.5 17.5l-6.5 17l-8 15.5l-9.5 15.5l-11 14.5l-12.5 13l-13.5 11.5l-15 10.5l-16 8.5l-16.5 7.5M1387 689l17-5.5l17-4.5l17-2l18-1l17 1l18 3l17 5l17 6l15 8l15.5 9.5l14.5 11.5l12.5 12.5l11.5 13.5l10 15l8 14.5l7 17l5 17l3.5 17l1.5 17l0 18l-1.5 17l-3.5 17.5l-5.5 17l-7 16.5l-8.5 15l-10 14.5l-11.5 13.5l-13 12.5l-13.5 10.5l-15.5 9.5l-16 8l-16.5 6.5M1382 697.5l16.5-5l17.5-3.5l17-1.5l17.5 0l17 2l17.5 3.5l15.5 5l16 7l15 8.5l14.5 10l12.5 11l12 12.5l10.5 14l9.5 15l7 14.5l6.5 16.5l4.5 17l2.5 17l1 16.5l-1 17.5l-2.5 17l-4 17l-6 16.5l-7.5 15.5l-9.5 15.5l-10.5 13.5l-12 12.5l-13 11.5l-14 9.5l-15 9l-16 6.5l-16.5 5.5M1376.5 706l16-4l17-3l16.5-0.5l17.5 0.5l16.5 2.5l17 4.5l15 5.5l15.5 7.5l14 9l14 10.5l12 11.5l11 12.5l9.5 14l8.5 15.5l6.5 14.5l5 16.5l3.5 16.5l2 17l0 16l-1.5 17.5l-3.5 16l-5 16.5l-6.5 15.5l-8.5 15l-9 13.5l-11 13l-12.5 11.5l-13 10.5l-14.5 9l-15 7.5l-16 6l-16 4.5M1370 714.5l16-3.5l16.5-1.5l16-0.5l16 1.5l16 3l16 5l14.5 6l15 8l13.5 9l13 10.5l11.5 11.5l10 13l9 14.5l8 15l5.5 14.5l4.5 16l2.5 16.5l1 16.5l-0.5 16l-2.5 16.5l-4 16l-5.5 15.5l-7 15l-9 14l-10 14l-11.5 11.5l-12.5 11l-13 9l-14.5 8.5l-15 6.5l-15.5 5l-16 3M1363 723.5l16-3l16-1l16.5 0.5l15 2l16 4l15.5 5.5l14 7l14 8.5l13 9.5l12 11.5l10.5 12l9 13l8 14.5l6 13.5l4.5 14.5l3.5 16l2 16l0 16l-1.5 15.5l-3 16l-4.5 15l-6.5 15l-7 13l-9 13.5l-11 12.5l-11 11l-13 10l-13 8.5l-14.5 7l-15 5.5l-15.5 4.5l-15.5 2.5M1356 732l15-2l15.5-0.5l16 1.5l14.5 2.5l15.5 4.5l14 5.5l13 7l13.5 9l12 10l11 11.5l9.5 12l8.5 13l7.5 14.5l5 13.5l4 14l2.5 16l1 15.5l-0.5 15.5l-2 15l-4 15.5l-5 14.5l-6.5 14l-7.5 12.5l-9.5 12.5l-11 11.5l-11.5 10.5l-13 9l-13 7.5l-14.5 6l-14.5 5l-15 3l-15.5 2M1347.5 740.5l15-1.5l15 0.5l15 2l14.5 3.5l14.5 5l13 6l12.5 7.5l12.5 9l11.5 10.5l9.5 10.5l8.5 12l7.5 13l6.5 14l4.5 13.5l3 14l2 15.5l0.5 13.5l-1 15l-2.5 14.5l-4.5 15l-5.5 13.5l-7 13.5l-8.5 13l-9.5 11.5l-11.5 11l-11.5 9l-12.5 8.5l-13.5 6.5l-14 5.5l-14.5 4l-14.5 2l-15 1M1339 748.5l14.5-0.5l14.5 1.5l14 2.5l13.5 3.5l14 6l12.5 6.5l12 7.5l11.5 10l10.5 10l8.5 11l8 12l6.5 13l5.5 14l3.5 13.5l2.5 13.5l1 15l-0.5 13l-2 14.5l-3 14l-5 14l-6 12.5l-7.5 12.5l-9 12l-10 10.5l-11 10l-11.5 8l-13 7.5l-12.5 5.5l-14 4.5l-14 3l-14 1.5l-14.5 0M1329.5 756.5l14 0.5l13.5 1.5l13.5 3l13 4.5l12.5 6l12 6.5l11 8l10.5 10l9.5 10.5l8 10.5l7 12l6 13l4.5 14l3 12.5l1.5 13l0 14.5l-1 13l-2.5 14l-3.5 13l-5.5 13l-6.5 12l-7.5 12l-9 11l-10 9.5l-11.5 9l-11.5 7.5l-12.5 6l-12.5 5l-13 3.5l-14 2.5l-13.5 0.5l-14-0.5M1319.5 764.5l13 1l13 2l13 3.5l12.5 5l11.5 6l11 7.5l10.5 8.5l9 9l8.5 10.5l7 10.5l6.5 12l5 12.5l3.5 13.5l2.5 12l1 13l-0.5 13.5l-1.5 12.5l-3 13l-4.5 12.5l-5.5 12.5l-6.5 11.5l-8 10.5l-9.5 10l-10 9l-11 8l-11.5 6.5l-12 5.5l-12.5 4l-13 3l-13 1.5l-13.5 0l-13-1M1309 772l12.5 1.5l12.5 3l11.5 3.5l12 5.5l10.5 6.5l10.5 7.5l9.5 8.5l8 9.5l8 10.5l6 10.5l5.5 11.5l4 12.5l3 13l1.5 12l0 12l-1 13.5l-2 11.5l-3.5 12.5l-5 11.5l-6 11.5l-7 10.5l-8 10l-9.5 9l-10 7.5l-11 7.5l-11 5.5l-12 4.5l-11.5 3l-12.5 2l-12.5 1l-13-0.5l-12.5-2M1298 779l11.5 2l11.5 3l11 4.5l11 6l10 6.5l9.5 8l9 8.5l7 9.5l7 10.5l5.5 10.5l4.5 11.5l3 10.5l2 12.5l1 11.5l-0.5 11.5l-1.5 13l-3 11l-3.5 11.5l-5 10.5l-6.5 11l-7 9.5l-8.5 9l-9 8.5l-10 7l-11 6l-10.5 5l-11.5 3.5l-11.5 2.5l-12 1.5l-12 0.5l-12-1.5l-12-2M1286 785l11 3l11 3.5l10 5l10.5 6l9 7l8 7l8 9l6.5 9l6 10l4.5 10.5l4 11l2 10.5l1.5 12l0.5 11l-1 11l-2 12l-3 10l-4.5 11l-5 10l-6.5 10l-7.5 9l-8 8l-9 7.5l-10 6l-10.5 5.5l-10.5 4l-11 3.5l-11 1.5l-11.5 1l-11.5-0.5l-11-1.5l-11.5-2.5M1273.5 791l10.5 3l10.5 4.5l9.5 5l9 6l8.5 7l7 7.5l7 8.5l6 9.5l5 10l4 10l2.5 10.5l2 10l0.5 11.5l0 10.5l-1.5 10.5l-3 11l-3 9.5l-5 10l-5 9.5l-7 9l-7 8l-8.5 7l-9 6.5l-9.5 5.5l-10 4.5l-10 3.5l-10.5 2.5l-10.5 1l-10.5 0.5l-11-1l-11-2l-10-3M1261 796.5l9.5 3.5l9.5 4.5l8.5 5l8.5 6.5l7.5 7l6.5 7.5l6 8.5l5 9l4.5 10l3 9.5l2.5 10.5l1 9.5l0 10l-1 9.5l-1.5 10l-3 10.5l-3.5 8.5l-5 9.5l-5.5 8.5l-7 8l-7 7.5l-8 6.5l-9 5.5l-9 5l-10 3.5l-9.5 3l-10 1.5l-10 1l-10.5-0.5l-10-1l-10-2.5l-9.5-3M1247.5 801l9 3.5l8.5 5l8 5.5l7.5 6l7 7.5l5.5 7.5l5 7.5l4.5 8.5l3.5 9.5l2.5 9.5l1.5 10l0.5 9l0 9l-1.5 9.5l-2 9l-3 9.5l-4 8.5l-5 8.5l-5.5 7.5l-6.5 7.5l-7 6.5l-8 6l-8.5 5l-9 4l-9.5 3l-9 2.5l-9.5 1l-10 0.5l-9.5-1l-9.5-1.5l-9-2.5l-9.5-3.5M1234 805l8.5 4l7.5 5l7 5l7 6.5l6 7.5l5 7l4.5 7.5l3.5 8.5l3 9l1.5 9l1 9.5l0 8.5l-0.5 8.5l-1.5 8.5l-2.5 8.5l-3.5 9l-4 7.5l-5.5 7.5l-5.5 7l-6.5 7l-7 5.5l-7.5 5l-8 4.5l-8.5 3l-9 3l-9 1.5l-8.5 0.5l-9.5 0l-9-1l-8.5-2l-9-3l-8-3.5M1220.5 808l7.5 4.5l6.5 4.5l6.5 5.5l5.5 6l5.5 7l4.5 7l3.5 7.5l3 8l2.5 8.5l1.5 8.5l0.5 8.5l-0.5 8l-1 8.5l-2 8l-2.5 7.5l-4 8l-4 7l-5 7l-5.5 6.5l-6.5 6l-6.5 5l-7.5 4.5l-8 3.5l-8 3l-8.5 2l-8 1l-8.5 0.5l-8.5-0.5l-8.5-1.5l-8.5-2l-8-3l-7.5-4M1206.5 810.5l6.5 4l6 5l6 5.5l5 6l4.5 6.5l4 7l3 7l2.5 7.5l1.5 7.5l1 8l0 8.5l-1 7.5l-1.5 8l-2 7.5l-3 7l-3.5 7.5l-4.5 6l-5 6.5l-5.5 5.5l-6 5.5l-6.5 4l-7 4l-7.5 3l-7.5 2.5l-8 1.5l-8 0.5l-7.5 0l-8-0.5l-8-2l-7.5-2l-7.5-3l-7-4M1192.5 812l6 4l5.5 5l5 5.5l4.5 6l3.5 6l3.5 7l2 6.5l2 7.5l1 7l0.5 7.5l0 7.5l-1 7l-2 7.5l-2.5 7l-3 6.5l-4 6.5l-9 11l-5.5 5l-6 4.5l-6 4l-7 3l-7 2.5l-7 2l-7.5 1l-7 0.5l-7.5-0.5l-7-1l-7.5-1.5l-7-2.5l-6.5-3.5l-6.5-3.5M1178 812.5l10.5 9l8 11l6 12.5l3.5 13.5l0.5 13.5l-2 13.5l-4.5 12.5l-7 12l-4 5.5l-5 5l-11 8l-12.5 6l-13 3.5l-14 1l-13.5-2l-13-4.5l-11.5-7M1164 812.5l9 9l7 10.5l5 12l2.5 12.5l0 12.5l-2.5 12.5l-4.5 11.5l-7 10.5l-9.5 9.5l-10.5 7l-11.5 5l-12 2.5l-13 0.5l-12.5-2.5l-12-4.5l-10.5-7M1150.5 811.5l7.5 9l6 10l4 11l1.5 12l-0.5 11.5l-3 11.5l-4.5 10.5l-7 9.5l-9 8l-10 6l-10.5 4.5l-11.5 2l-12-0.5l-11.5-2.5l-11-5l-9.5-6.5M1137 810l6.5 8.5l5 9.5l3 10.5l1 11l-1 10.5l-3 10.5l-5 9.5l-7 8.5l-8.5 7l-9.5 5.5l-10 3l-10.5 1.5l-11-0.5l-10.5-3l-10-4.5l-8.5-6.5M1123.5 807.5l5.5 8l4.5 9.5l2 9.5l0.5 10l-1.5 10l-3.5 9.5l-4.5 8.5l-7 7.5l-8 6l-8.5 4.5l-9.5 3l-10 0.5l-10-0.5l-9.5-3l-9-5l-8-6M1110.5 804.5l5 8l3.5 8.5l1.5 9l0 9l-2 9.5l-3.5 8.5l-4.5 7l-6.5 7l-7.5 5.5l-8.5 3.5l-9 2.5l-9 0.5l-9-1.5l-9-3l-8-4.5l-7-6M1098 801l4 7l3 8l1 8.5l-0.5 8.5l-2 8.5l-3.5 7.5l-5 6.5l-6 6l-7 4.5l-8 3.5l-8 1.5l-8.5 0l-8.5-1.5l-8-3l-7-4l-6.5-6M1086 796.5l3.5 7l2 7.5l0.5 8l-0.5 7.5l-2 7.5l-4 7l-4.5 6l-6 5l-6.5 4l-7.5 2.5l-7.5 1.5l-7.5-0.5l-8-1.5l-7-3l-6.5-4l-5.5-5.5M1074.5 792l3 6.5l1.5 7l0 7l-1 7l-2 6.5l-3.5 6.5l-4.5 5.5l-5.5 4.5l-6.5 3l-6.5 2.5l-7.5 0.5l-6.5 0l-7-2l-6.5-3l-6-4l-5-5M1063.5 787l2.5 6l1 6l0 7l-1 6l-2.5 6l-3.5 5.5l-4.5 5l-5 4l-6 3l-6 1.5l-6.5 0.5l-6.5-0.5l-6.5-1.5l-5.5-3l-5.5-4l-4-5M1053 781.5l2 5.5l1 6l-0.5 6l-1.5 5.5l-2.5 5.5l-3 5l-4.5 4l-4.5 3.5l-5.5 2.5l-6 1.5l-5.5 0l-6-0.5l-6-2l-5-2.5l-4.5-4l-4-4.5M1043.5 775.5l1.5 5.5l0.5 5l-0.5 5.5l-1.5 5.5l-2.5 4.5l-3 4.5l-4 4l-4.5 2.5l-5.5 2l-5 1.5l-5.5 0l-5.5-1l-5-1.5l-4.5-3l-4-3.5l-3.5-4M1034 769.5l1 5l0.5 5l-0.5 5l-1.5 4.5l-2.5 4.5l-3 3.5l-4 3.5l-4 2.5l-5 1.5l-4.5 1l-5 0l-5-1l-4.5-1.5l-4-3l-4-3l-3-4M1025.5 763.5l1 4.5l0 4.5l-1 4.5l-1.5 4l-2.5 4l-2.5 3.5l-3.5 2.5l-4 2.5l-4.5 1l-4 1l-4.5-0.5l-4.5-1l-4.5-1.5l-3.5-2.5l-3.5-3l-2.5-3.5M1017.5 757l0.5 4l0 4.5l-1 4l-1.5 3.5l-2.5 3.5l-2.5 3l-3.5 2.5l-3.5 2l-4 1l-4 0.5l-4-0.5l-4-1l-3.5-1.5l-3.5-2.5l-3-2.5l-2.5-3.5M1010 751l0 7l-2.5 7.5l-5 5.5l-6.5 3.5l-7 1.5l-7.5-1.5l-6-4l-4.5-5.5M1003 744.5l-0.5 6.5l-2.5 6.5l-4.5 5l-5.5 3l-7 1l-6.5-1.5l-5.5-3.5l-4.5-5M996 738l0 6l-2.5 5.5l-4.5 4.5l-5 3l-6.5 0.5l-5.5-1.5l-5.5-3l-3.5-5M990 731.5l-0.5 5.5l-2 5l-4 4l-5 2.5l-5.5 0.5l-5.5-1.5l-4.5-3.5l-3.5-4.5M984.5 725l-0.5 5l-2.5 4.5l-3.5 3.5l-4.5 2l-5 0.5l-5-1.5l-4-3l-3-4M979.5 719l-0.5 4.5l-2.5 4l-3.5 3l-4 1.5l-4.5 0.5l-4.5-1.5l-3.5-3l-2.5-3.5M975 713l-1 4l-2 3.5l-3 2.5l-4 1.5l-4 0l-4-1l-3.5-3l-2-3.5M970.5 706.5l-1 4l-2 3l-2.5 2.5l-4 1l-3.5 0l-3.5-1l-3-2.5l-2-3M966.5 701l-1 3l-1.5 3l-3 2l-3 1l-3.5 0l-3-1l-3-2.5l-1.5-3M963 695l-1 3l-2 2.5l-2.5 2l-2.5 1l-3.5-0.5l-2.5-1l-2.5-2l-1.5-2.5M959.5 689.5l-1 3l-1.5 2l-2.5 1.5l-2.5 1l-3-0.5l-2.5-1l-2-2l-1-2M956.5 684l-1 2.5l-1.5 2l-2 1.5l-2.5 0.5l-2.5 0l-2.5-1l-1.5-2l-1.5-2M953.5 679l-0.5 2l-1.5 2l-2 1l-2 0.5l-2.5 0l-2-1l-1.5-1.5l-1.5-2M951 674l-2 3.5l-4 1.5l-3.5-1l-2.5-3.5M949 669l-2 3.5l-3.5 1l-3.5-1l-2.5-3M946.5 664.5l-1.5 2.5l-3.5 1.5l-3-1l-2-3M945 660l-2 2.5l-3 1l-2.5-1l-2-2.5M943 655.5l-1.5 2.5l-2.5 0.5l-2.5-0.5l-1.5-2.5M941.5 651.5l-1.5 2l-2.5 0.5l-2-0.5l-1.5-2M940 647.5l-1.5 2l-2 0.5l-2-1l-1.5-2M938.5 643.5l-1 2l-2 0.5l-2-1l-1-1.5M937.5 640l-1 1.5l-2 0.5l-1.5-0.5l-1-2M936.5 636.5l-1 1.5l-1.5 0.5l-1.5-1l-1-1.5M935.5 633l-1 1.5l-1.5 0l-1.5-0.5l-0.5-1M934.5 630l-1 1l-1 0.5l-1.5-0.5l-0.5-1.5M934 627l-1 1l-1 0l-1.5-0.5l-0.5-1M933 624l-2 1l-1.5-1.5M932.5 621.5l-2 1l-1-1.5M932 618.5l-1.5 1l-1.5-1M931.5 616l-1.5 1l-1.5-1M931 613.5l-1.5 1l-1-1M930.5 611.5l-1.5 0.5l-0.5-1M930 609.5l-1 0.5l-1-1" fill="none" stroke="#0000ff" stroke-width="2" shape-rendering="crispEdges"/>
<circle cx="1394.5" cy="564.5" r="247" fill="none" stroke="#000" stroke-width="2" stroke-dasharray="4 3"/>
<circle cx="927.5" cy="607.5" r="10" fill="none" stroke="#0000ff" stroke-width="2"/>
<path d="M1397 557.5V579.5M1386.5 563L1407.5 574M1386.5 574L1407.5 563" fill="none" stroke="#000" stroke-width="2.4"/>
<text x="913.3" y="865.8" font-size="18" fill="#000" textLength="73.2" lengthAdjust="spacingAndGlyphs">showing</text>
<rect x="901.5" y="874" width="97" height="48" fill="#fff" stroke="#000" stroke-width="1.2"/>
<text x="905.2" y="906.4" font-size="26" fill="#000" textLength="89.3" lengthAdjust="spacingAndGlyphs">Sweep</text>
<rect x="912" y="926.5" width="128.5" height="117" fill="#fff" stroke="none" stroke-width="1"/>
<line x1="925" y1="926.5" x2="925" y2="1043.5" stroke="#d8d8ff" stroke-width="1.2"/>
<line x1="938" y1="926.5" x2="938" y2="1043.5" stroke="#d8d8ff" stroke-width="1.2"/>
<line x1="951" y1="926.5" x2="951" y2="1043.5" stroke="#d8d8ff" stroke-width="1.2"/>
<line x1="964" y1="926.5" x2="964" y2="1043.5" stroke="#d8d8ff" stroke-width="1.2"/>
<line x1="977" y1="926.5" x2="977" y2="1043.5" stroke="#d8d8ff" stroke-width="1.2"/>
<line x1="990" y1="926.5" x2="990" y2="1043.5" stroke="#d8d8ff" stroke-width="1.2"/>
<line x1="1003" y1="926.5" x2="1003" y2="1043.5" stroke="#d8d8ff" stroke-width="1.2"/>
<line x1="1016" y1="926.5" x2="1016" y2="1043.5" stroke="#d8d8ff" stroke-width="1.2"/>
<line x1="1029" y1="926.5" x2="1029" y2="1043.5" stroke="#d8d8ff" stroke-width="1.2"/>
<line x1="912" y1="938.3" x2="1040.5" y2="938.3" stroke="#d8d8ff" stroke-width="1.2"/>
<line x1="912" y1="950.1" x2="1040.5" y2="950.1" stroke="#d8d8ff" stroke-width="1.2"/>
<line x1="912" y1="961.9" x2="1040.5" y2="961.9" stroke="#d8d8ff" stroke-width="1.2"/>
<line x1="912" y1="973.7" x2="1040.5" y2="973.7" stroke="#d8d8ff" stroke-width="1.2"/>
<line x1="912" y1="985.5" x2="1040.5" y2="985.5" stroke="#d8d8ff" stroke-width="1.2"/>
<line x1="912" y1="997.3" x2="1040.5" y2="997.3" stroke="#d8d8ff" stroke-width="1.2"/>
<line x1="912" y1="1009.1" x2="1040.5" y2="1009.1" stroke="#d8d8ff" stroke-width="1.2"/>
<line x1="912" y1="1020.9" x2="1040.5" y2="1020.9" stroke="#d8d8ff" stroke-width="1.2"/>
<line x1="912" y1="1032.7" x2="1040.5" y2="1032.7" stroke="#d8d8ff" stroke-width="1.2"/>
<path d="M912 926.5H923.5L922 940L920.5 960L918.5 990L916.5 1018L914.5 1037L912 1041Z" fill="#0000ff"/>
<path d="M923.5 926.5H977V935L970 939L966 933L962 939L957 933L953 939L948 933L944 939L939 933L935 939L930 933L926 939Z" fill="#0000ff"/>
<path d="M912 1036L916 1039L920 1041L926 1042L935 1042.5L1040 1043V1044.5H912Z" fill="#22c0ff"/>
<line x1="1040.5" y1="931" x2="1040.5" y2="1043.5" stroke="#000" stroke-width="1.5"/>
<line x1="923.5" y1="926.8" x2="1040.5" y2="926.8" stroke="#000" stroke-width="1" stroke-dasharray="2 2"/>
<line x1="904" y1="930.5" x2="912" y2="930.5" stroke="#000" stroke-width="1.5"/>
<line x1="1040.5" y1="930.5" x2="1049" y2="930.5" stroke="#000" stroke-width="1.5"/>
<circle cx="924.7" cy="1017.8" r="0.9" fill="#000"/>
<circle cx="936.7" cy="1017.8" r="0.9" fill="#000"/>
<circle cx="948.7" cy="1017.8" r="0.9" fill="#000"/>
<circle cx="960.7" cy="1017.8" r="0.9" fill="#000"/>
<circle cx="972.7" cy="1017.8" r="0.9" fill="#000"/>
<circle cx="984.7" cy="1017.8" r="0.9" fill="#000"/>
<circle cx="996.7" cy="1017.8" r="0.9" fill="#000"/>
<circle cx="1008.7" cy="1017.8" r="0.9" fill="#000"/>
<circle cx="1020.7" cy="1017.8" r="0.9" fill="#000"/>
<circle cx="1032.7" cy="1017.8" r="0.9" fill="#000"/>
<text x="977" y="947" font-size="6.8" fill="#000" text-anchor="middle" font-weight="bold">NO SCAN ENABLED</text>
<text x="977" y="955.5" font-size="6.8" fill="#000" text-anchor="middle" font-weight="bold">(or too few points)</text>
<rect x="910" y="934" width="2" height="2" fill="#000" stroke="none" stroke-width="1"/>
<rect x="1044" y="934" width="2" height="2" fill="#000" stroke="none" stroke-width="1"/>
<rect x="910" y="945.8" width="2" height="2" fill="#000" stroke="none" stroke-width="1"/>
<rect x="1044" y="945.8" width="2" height="2" fill="#000" stroke="none" stroke-width="1"/>
<rect x="910" y="957.6" width="2" height="2" fill="#000" stroke="none" stroke-width="1"/>
<rect x="1044" y="957.6" width="2" height="2" fill="#000" stroke="none" stroke-width="1"/>
<rect x="910" y="969.4" width="2" height="2" fill="#000" stroke="none" stroke-width="1"/>
<rect x="1044" y="969.4" width="2" height="2" fill="#000" stroke="none" stroke-width="1"/>
<rect x="910" y="981.2" width="2" height="2" fill="#000" stroke="none" stroke-width="1"/>
<rect x="1044" y="981.2" width="2" height="2" fill="#000" stroke="none" stroke-width="1"/>
<rect x="910" y="993" width="2" height="2" fill="#000" stroke="none" stroke-width="1"/>
<rect x="1044" y="993" width="2" height="2" fill="#000" stroke="none" stroke-width="1"/>
<rect x="910" y="1004.8" width="2" height="2" fill="#000" stroke="none" stroke-width="1"/>
<rect x="1044" y="1004.8" width="2" height="2" fill="#000" stroke="none" stroke-width="1"/>
<rect x="910" y="1016.6" width="2" height="2" fill="#000" stroke="none" stroke-width="1"/>
<rect x="1044" y="1016.6" width="2" height="2" fill="#000" stroke="none" stroke-width="1"/>
<rect x="910" y="1028.4" width="2" height="2" fill="#000" stroke="none" stroke-width="1"/>
<rect x="1044" y="1028.4" width="2" height="2" fill="#000" stroke="none" stroke-width="1"/>
<rect x="910" y="1040.2" width="2" height="2" fill="#000" stroke="none" stroke-width="1"/>
<rect x="1044" y="1040.2" width="2" height="2" fill="#000" stroke="none" stroke-width="1"/>
<rect x="912" y="1045.5" width="12" height="3" fill="#555" stroke="none" stroke-width="1"/>
<rect x="970" y="1045.5" width="12" height="3" fill="#555" stroke="none" stroke-width="1"/>
<rect x="1026" y="1045.5" width="14" height="3" fill="#555" stroke="none" stroke-width="1"/>
<rect x="904" y="1041" width="6" height="4" fill="#333" stroke="none" stroke-width="1"/>
<rect x="925.5" y="1051.5" width="10.5" height="19.5" fill="none" stroke="#000" stroke-width="1.3"/>
<path d="M927 1055h7M927 1059h7M927 1063h7M927 1067h7" fill="none" stroke="#000" stroke-width="1"/>
<rect x="937" y="1063" width="5" height="6" fill="#444" stroke="none" stroke-width="1"/>
<rect x="947" y="1061.5" width="6" height="9" fill="#22c0ff" stroke="none" stroke-width="1"/>
<rect x="953" y="1061.5" width="7" height="9" fill="#ff00ff" stroke="none" stroke-width="1"/>
<rect x="960" y="1061.5" width="7" height="9" fill="#00aa00" stroke="none" stroke-width="1"/>
<rect x="967" y="1065.5" width="5" height="5" fill="none" stroke="#0000ff" stroke-width="1"/>
<rect x="1052" y="974.5" width="57" height="31.5" fill="#fff" stroke="#000" stroke-width="1.2"/>
<text x="1107" y="998" font-size="25" fill="#444" text-anchor="end">0</text>
<text x="1110.3" y="998" font-size="25" fill="#000" textLength="21.2" lengthAdjust="spacingAndGlyphs">Q</text>
<rect x="1052" y="1008.5" width="57" height="31.5" fill="#fff" stroke="#000" stroke-width="1.2"/>
<text x="1059.3" y="1031.2" font-size="25" fill="#444" textLength="49.2" lengthAdjust="spacingAndGlyphs">3.21</text>
<text x="1110.3" y="1031.2" font-size="25" fill="#000" textLength="55.1" lengthAdjust="spacingAndGlyphs">SWR</text>
<rect x="1052" y="1042.5" width="74" height="40" fill="#fff" stroke="#000" stroke-width="1.2"/>
<text x="1059.3" y="1066.4" font-size="25" fill="#000" textLength="60" lengthAdjust="spacingAndGlyphs">Mark</text>
<text x="1182.2" y="1066.4" font-size="25" fill="#000" textLength="50.3" lengthAdjust="spacingAndGlyphs">Plot:</text>
<rect x="1236.5" y="1042.5" width="29.4" height="40" fill="#fff" stroke="#1ec0ff" stroke-width="1.4"/>
<text x="1251.2" y="1066.4" font-size="25" fill="#1ec0ff" text-anchor="middle">L</text>
<line x1="1237" y1="1073" x2="1265.4" y2="1043" stroke="#1ec0ff" stroke-width="2.2"/>
<rect x="1267.9" y="1042.5" width="45.9" height="40" fill="#fff" stroke="#ff00ff" stroke-width="1.4"/>
<text x="1290.8" y="1066.4" font-size="25" fill="#ff00ff" text-anchor="middle">L1</text>
<line x1="1268.4" y1="1073" x2="1313.3" y2="1043" stroke="#ff00ff" stroke-width="2.2"/>
<rect x="1316.2" y="1042.5" width="45.9" height="40" fill="#fff" stroke="#00aa00" stroke-width="1.4"/>
<text x="1339.2" y="1066.4" font-size="25" fill="#00aa00" text-anchor="middle">C1</text>
<line x1="1316.7" y1="1073" x2="1361.6" y2="1043" stroke="#00aa00" stroke-width="2.2"/>
<rect x="1364.5" y="1042.5" width="29.9" height="40" fill="#fff" stroke="#0000ff" stroke-width="1.4"/>
<text x="1379.5" y="1066.4" font-size="25" fill="#0000ff" text-anchor="middle">G</text>
</svg></body></html>
